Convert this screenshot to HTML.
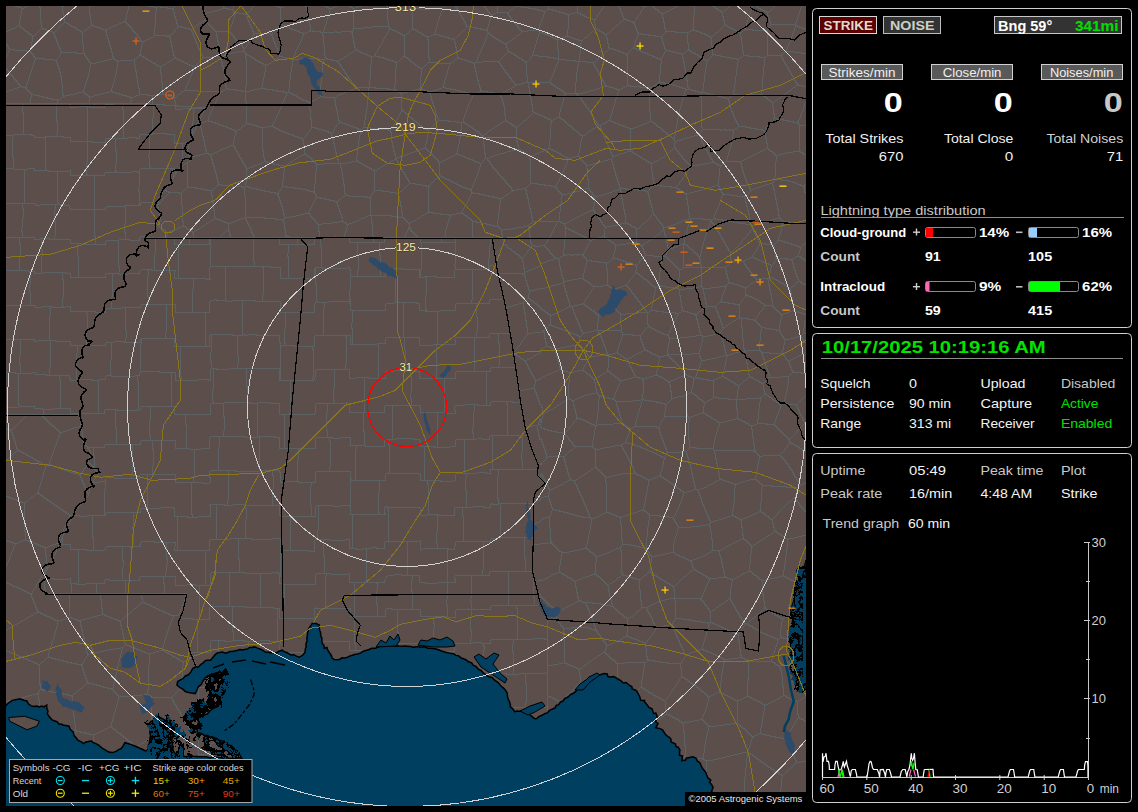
<!DOCTYPE html><html><head><meta charset="utf-8"><style>html,body{margin:0;padding:0;background:#000;width:1138px;height:812px;overflow:hidden}svg{position:absolute;left:0;top:0;font-family:"Liberation Sans",sans-serif}</style></head><body>
<svg width="1138" height="812" viewBox="0 0 1138 812">
<rect width="1138" height="812" fill="#000"/>
<defs><clipPath id="mc"><rect x="6" y="6" width="800" height="800"/></clipPath></defs>
<g clip-path="url(#mc)">
<rect x="6" y="6" width="800" height="800" fill="#5c4f4b"/>
<path d="M15 6.5h4M26 6.5h2M61 6.5h3M148 6.5h6M158 6.5h3M275 6.5h4M305 6.5h2M324 6.5h3M335 6.5h2M349 6.5h2M358 6.5h4M386 6.5h2M408 6.5h2M444 6.5h2M454 6.5h5M483 6.5h2M515 6.5h7M618 6.5h2M642 6.5h5M652 6.5h2M676 6.5h2M712 6.5h3M755 6.5h3M18 7.5h4M24 7.5h2M39 7.5h2M153 7.5h5M160 7.5h8M200 7.5h2M223 7.5h2M278 7.5h5M326 7.5h3M333 7.5h2M350 7.5h3M355 7.5h3M409 7.5h2M455 7.5h2M484 7.5h2M521 7.5h8M653 7.5h2M674 7.5h2M714 7.5h2M728 7.5h2M757 7.5h2M21 8.5h3M167 8.5h7M201 8.5h2M222 8.5h7M328 8.5h5M352 8.5h3M410 8.5h2M413 8.5h8M430 8.5h13M456 8.5h2M485 8.5h2M528 8.5h7M619 8.5h2M654 8.5h2M672 8.5h2M715 8.5h3M758 8.5h3M172 9.5h2M202 9.5h2M219 9.5h3M228 9.5h5M411 9.5h3M420 9.5h10M486 9.5h2M511 9.5h2M534 9.5h5M547 9.5h6M655 9.5h3M670 9.5h2M717 9.5h2M760 9.5h3M203 10.5h2M215 10.5h4M232 10.5h2M306 10.5h2M457 10.5h2M538 10.5h5M552 10.5h5M657 10.5h2M718 10.5h3M724 10.5h2M762 10.5h3M211 11.5h4M233 11.5h3M458 11.5h2M487 11.5h2M542 11.5h4M556 11.5h4M620 11.5h2M658 11.5h2M666 11.5h3M720 11.5h2M764 11.5h3M62 12.5h2M173 12.5h2M204 12.5h2M207 12.5h4M235 12.5h4M488 12.5h2M496 12.5h13M559 12.5h5M575 12.5h4M659 12.5h3M721 12.5h2M766 12.5h3M205 13.5h2M238 13.5h6M459 13.5h2M489 13.5h2M494 13.5h2M507 13.5h2M563 13.5h4M571 13.5h4M578 13.5h3M621 13.5h2M661 13.5h4M89 14.5h2M243 14.5h4M490 14.5h4M566 14.5h5M580 14.5h3M460 15.5h2M508 15.5h2M582 15.5h3M767 15.5h2M174 16.5h2M246 16.5h2M307 16.5h2M509 16.5h2M584 16.5h3M622 16.5h2M722 16.5h2M461 17.5h2M586 17.5h4M662 17.5h2M63 18.5h2M462 18.5h2M510 18.5h2M589 18.5h4M623 18.5h2M768 18.5h2M175 19.5h2M247 19.5h2M511 19.5h2M592 19.5h4M624 19.5h3M204 20.5h2M308 20.5h2M463 20.5h2M512 20.5h2M622 20.5h2M626 20.5h4M723 20.5h2M90 21.5h2M124 21.5h2M202 21.5h2M205 21.5h2M248 21.5h2M387 21.5h2M513 21.5h2M629 21.5h4M769 21.5h2M40 22.5h2M64 22.5h3M121 22.5h3M125 22.5h2M206 22.5h2M464 22.5h2M632 22.5h3M663 22.5h2M66 23.5h3M119 23.5h2M126 23.5h2M176 23.5h2M199 23.5h2M207 23.5h2M514 23.5h2M633 23.5h2M68 24.5h2M117 24.5h2M127 24.5h2M208 24.5h2M249 24.5h2M280 24.5h3M465 24.5h2M515 24.5h2M594 24.5h2M724 24.5h2M770 24.5h26M18 25.5h2M69 25.5h3M91 25.5h3M114 25.5h3M128 25.5h2M196 25.5h2M209 25.5h2M282 25.5h4M309 25.5h2M516 25.5h2M616 25.5h2M634 25.5h2M725 25.5h3M795 25.5h3M16 26.5h2M19 26.5h2M71 26.5h3M93 26.5h4M112 26.5h2M129 26.5h2M177 26.5h5M210 26.5h2M250 26.5h2M285 26.5h3M372 26.5h17M466 26.5h6M517 26.5h2M723 26.5h2M727 26.5h2M797 26.5h3M20 27.5h2M73 27.5h3M88 27.5h2M96 27.5h4M110 27.5h2M130 27.5h2M181 27.5h5M211 27.5h2M287 27.5h3M363 27.5h9M388 27.5h2M471 27.5h6M635 27.5h2M728 27.5h3M799 27.5h4M12 28.5h3M21 28.5h3M41 28.5h3M75 28.5h2M99 28.5h4M108 28.5h2M131 28.5h2M185 28.5h5M212 28.5h2M251 28.5h2M289 28.5h3M353 28.5h10M389 28.5h2M412 28.5h2M476 28.5h5M518 28.5h2M595 28.5h2M664 28.5h2M730 28.5h3M802 28.5h3M10 29.5h2M23 29.5h2M43 29.5h4M76 29.5h3M102 29.5h6M189 29.5h4M213 29.5h2M291 29.5h4M389 29.5h4M413 29.5h3M480 29.5h6M519 29.5h2M537 29.5h2M596 29.5h3M692 29.5h2M732 29.5h3M744 29.5h9M804 29.5h2M8 30.5h2M24 30.5h2M46 30.5h4M78 30.5h3M84 30.5h2M132 30.5h2M214 30.5h2M294 30.5h4M310 30.5h3M392 30.5h4M415 30.5h3M485 30.5h3M520 30.5h2M528 30.5h9M598 30.5h2M636 30.5h2M691 30.5h6M734 30.5h3M743 30.5h2M752 30.5h16M6 31.5h2M25 31.5h3M49 31.5h4M80 31.5h2M105 31.5h2M133 31.5h2M191 31.5h2M215 31.5h15M252 31.5h2M297 31.5h3M308 31.5h3M312 31.5h9M335 31.5h2M341 31.5h12M395 31.5h3M417 31.5h2M521 31.5h7M538 31.5h2M599 31.5h3M665 31.5h11M689 31.5h2M696 31.5h4M736 31.5h3M27 32.5h2M52 32.5h3M81 32.5h2M134 32.5h2M229 32.5h2M299 32.5h4M306 32.5h2M320 32.5h15M336 32.5h5M351 32.5h2M397 32.5h3M418 32.5h3M487 32.5h2M539 32.5h4M601 32.5h3M637 32.5h2M675 32.5h14M699 32.5h3M716 32.5h2M738 32.5h4M28 33.5h2M53 33.5h2M135 33.5h2M192 33.5h2M230 33.5h2M253 33.5h18M302 33.5h4M399 33.5h2M420 33.5h3M488 33.5h2M542 33.5h3M603 33.5h2M607 33.5h2M638 33.5h4M701 33.5h4M29 34.5h3M136 34.5h2M231 34.5h2M270 34.5h2M400 34.5h3M422 34.5h2M433 34.5h6M489 34.5h2M544 34.5h4M604 34.5h3M641 34.5h8M704 34.5h3M31 35.5h2M106 35.5h2M154 35.5h13M232 35.5h2M271 35.5h2M322 35.5h2M402 35.5h4M423 35.5h3M431 35.5h2M438 35.5h4M490 35.5h3M517 35.5h2M547 35.5h3M648 35.5h8M706 35.5h3M32 36.5h2M54 36.5h2M137 36.5h2M166 36.5h4M193 36.5h2M216 36.5h2M425 36.5h6M441 36.5h5M492 36.5h2M549 36.5h3M565 36.5h5M655 36.5h8M708 36.5h3M138 37.5h2M151 37.5h2M169 37.5h2M233 37.5h2M352 37.5h2M445 37.5h4M493 37.5h3M551 37.5h3M563 37.5h2M569 37.5h4M585 37.5h2M710 37.5h2M740 37.5h2M55 38.5h2M107 38.5h2M139 38.5h2M149 38.5h2M194 38.5h2M234 38.5h2M272 38.5h2M448 38.5h5M495 38.5h2M513 38.5h2M553 38.5h3M561 38.5h2M572 38.5h4M606 38.5h2M661 38.5h2M147 39.5h2M235 39.5h2M427 39.5h2M452 39.5h3M496 39.5h3M555 39.5h6M575 39.5h4M140 40.5h2M145 40.5h2M236 40.5h2M498 40.5h3M510 40.5h2M578 40.5h5M56 41.5h2M108 41.5h2M141 41.5h4M195 41.5h2M217 41.5h2M237 41.5h2M273 41.5h2M500 41.5h2M170 42.5h2M238 42.5h2M353 42.5h2M454 42.5h2M501 42.5h3M507 42.5h2M662 42.5h2M196 43.5h2M239 43.5h2M274 43.5h2M503 43.5h4M607 43.5h2M687 43.5h2M57 44.5h2M82 44.5h2M240 44.5h2M505 44.5h2M741 44.5h2M6 45.5h2M109 45.5h2M218 45.5h2M241 45.5h2M323 45.5h2M663 45.5h2M7 46.5h2M58 46.5h2M171 46.5h2M197 46.5h2M275 46.5h2M711 46.5h2M242 47.5h2M354 47.5h2M455 47.5h2M506 47.5h2M608 47.5h2M633 47.5h2M8 48.5h2M59 48.5h2M110 48.5h2M198 48.5h2M243 48.5h2M276 48.5h2M609 48.5h4M634 48.5h3M664 48.5h2M9 49.5h6M355 49.5h2M557 49.5h2M612 49.5h4M636 49.5h3M14 50.5h13M199 50.5h2M219 50.5h2M356 50.5h3M507 50.5h2M615 50.5h4M638 50.5h3M665 50.5h5M687 50.5h4M26 51.5h5M60 51.5h2M172 51.5h2M238 51.5h7M277 51.5h2M358 51.5h3M508 51.5h2M618 51.5h3M640 51.5h3M669 51.5h5M690 51.5h2M742 51.5h2M785 51.5h10M30 52.5h2M61 52.5h16M111 52.5h2M233 52.5h5M244 52.5h2M351 52.5h2M360 52.5h3M509 52.5h3M620 52.5h4M642 52.5h4M673 52.5h5M684 52.5h2M691 52.5h3M794 52.5h8M31 53.5h2M76 53.5h9M200 53.5h2M228 53.5h5M245 53.5h2M278 53.5h2M362 53.5h4M456 53.5h2M511 53.5h3M623 53.5h4M645 53.5h3M677 53.5h5M693 53.5h3M801 53.5h5M32 54.5h2M139 54.5h2M224 54.5h4M245 54.5h3M348 54.5h2M365 54.5h3M513 54.5h2M626 54.5h2M647 54.5h3M681 54.5h2M695 54.5h3M712 54.5h4M781 54.5h2M84 55.5h2M139 55.5h3M173 55.5h2M201 55.5h2M220 55.5h4M247 55.5h3M324 55.5h2M367 55.5h3M374 55.5h2M514 55.5h3M532 55.5h7M626 55.5h2M649 55.5h4M697 55.5h2M715 55.5h6M743 55.5h6M767 55.5h15M33 56.5h2M85 56.5h2M112 56.5h2M141 56.5h3M213 56.5h8M249 56.5h3M279 56.5h4M345 56.5h2M369 56.5h3M375 56.5h5M403 56.5h3M516 56.5h2M538 56.5h10M652 56.5h3M698 56.5h3M720 56.5h6M748 56.5h12M34 57.5h2M143 57.5h3M174 57.5h2M202 57.5h11M219 57.5h2M251 57.5h2M282 57.5h4M371 57.5h2M379 57.5h5M405 57.5h3M428 57.5h2M457 57.5h2M517 57.5h3M547 57.5h7M599 57.5h2M654 57.5h3M700 57.5h3M725 57.5h6M740 57.5h2M759 57.5h7M781 57.5h2M35 58.5h10M86 58.5h2M112 58.5h3M135 58.5h2M145 58.5h2M175 58.5h3M245 58.5h2M252 58.5h3M285 58.5h6M300 58.5h19M325 58.5h3M342 58.5h2M383 58.5h4M407 58.5h2M457 58.5h5M519 58.5h3M553 58.5h6M656 58.5h4M682 58.5h2M702 58.5h2M730 58.5h7M44 59.5h10M87 59.5h2M108 59.5h4M114 59.5h2M133 59.5h2M146 59.5h3M177 59.5h3M220 59.5h2M254 59.5h2M275 59.5h2M290 59.5h3M294 59.5h6M318 59.5h7M327 59.5h6M340 59.5h2M386 59.5h4M408 59.5h2M455 59.5h2M461 59.5h4M521 59.5h2M558 59.5h8M659 59.5h3M703 59.5h3M736 59.5h3M782 59.5h2M53 60.5h4M104 60.5h4M115 60.5h3M120 60.5h13M148 60.5h3M170 60.5h2M179 60.5h3M255 60.5h3M292 60.5h2M332 60.5h5M338 60.5h2M389 60.5h4M409 60.5h2M464 60.5h4M522 60.5h3M565 60.5h11M705 60.5h4M88 61.5h2M100 61.5h4M117 61.5h3M150 61.5h2M181 61.5h3M199 61.5h2M257 61.5h3M272 61.5h2M336 61.5h3M392 61.5h4M410 61.5h2M467 61.5h4M482 61.5h17M524 61.5h2M575 61.5h12M783 61.5h2M56 62.5h2M89 62.5h2M96 62.5h4M151 62.5h3M167 62.5h2M183 62.5h3M221 62.5h2M259 62.5h3M395 62.5h3M411 62.5h3M428 62.5h10M451 62.5h2M470 62.5h4M475 62.5h7M498 62.5h2M525 62.5h2M586 62.5h9M683 62.5h2M90 63.5h6M153 63.5h3M185 63.5h3M261 63.5h3M269 63.5h2M338 63.5h2M413 63.5h2M437 63.5h14M473 63.5h2M499 63.5h2M784 63.5h2M155 64.5h2M164 64.5h2M187 64.5h3M196 64.5h2M263 64.5h3M267 64.5h2M339 64.5h2M414 64.5h2M593 64.5h2M785 64.5h2M57 65.5h2M134 65.5h2M156 65.5h3M162 65.5h2M189 65.5h4M265 65.5h2M415 65.5h3M500 65.5h2M158 66.5h4M192 66.5h3M222 66.5h2M340 66.5h2M417 66.5h2M501 66.5h2M594 66.5h2M786 66.5h2M341 67.5h2M418 67.5h3M474 67.5h2M58 68.5h2M420 68.5h3M502 68.5h2M595 68.5h2M684 68.5h2M787 68.5h2M6 69.5h2M342 69.5h2M503 69.5h2M596 69.5h2M7 70.5h2M223 70.5h2M343 70.5h2M504 70.5h2M788 70.5h2M8 71.5h2M135 71.5h2M475 71.5h2M597 71.5h2M789 71.5h2M59 72.5h2M344 72.5h2M505 72.5h2M9 73.5h2M160 73.5h2M345 73.5h2M506 73.5h2M598 73.5h2M790 73.5h2M10 74.5h2M507 74.5h2M685 74.5h2M11 75.5h2M346 75.5h2M599 75.5h2M791 75.5h2M12 76.5h2M60 76.5h2M224 76.5h2M347 76.5h2M476 76.5h2M508 76.5h2M526 76.5h2M600 76.5h2M792 76.5h2M136 77.5h2M509 77.5h2M13 78.5h2M348 78.5h2M510 78.5h2M601 78.5h2M793 78.5h2M14 79.5h2M349 79.5h2M15 80.5h2M350 80.5h2M477 80.5h2M511 80.5h2M602 80.5h2M686 80.5h2M794 80.5h2M16 81.5h2M512 81.5h2M161 82.5h2M351 82.5h2M513 82.5h2M524 82.5h27M603 82.5h2M658 82.5h7M795 82.5h2M17 83.5h2M137 83.5h2M352 83.5h2M521 83.5h3M550 83.5h2M664 83.5h6M796 83.5h2M18 84.5h2M61 84.5h2M353 84.5h2M478 84.5h2M514 84.5h2M517 84.5h4M551 84.5h3M604 84.5h2M655 84.5h2M669 84.5h5M797 84.5h2M19 85.5h2M354 85.5h2M515 85.5h2M553 85.5h2M605 85.5h2M627 85.5h4M673 85.5h4M796 85.5h7M20 86.5h3M225 86.5h2M554 86.5h3M603 86.5h7M625 86.5h2M630 86.5h11M652 86.5h2M676 86.5h4M802 86.5h4M17 87.5h3M22 87.5h5M355 87.5h21M442 87.5h4M479 87.5h2M512 87.5h2M528 87.5h2M556 87.5h2M600 87.5h3M609 87.5h5M623 87.5h2M640 87.5h12M679 87.5h4M687 87.5h2M793 87.5h2M14 88.5h3M25 88.5h2M138 88.5h2M226 88.5h3M259 88.5h7M354 88.5h3M375 88.5h14M419 88.5h3M439 88.5h3M445 88.5h6M510 88.5h2M557 88.5h3M597 88.5h3M613 88.5h4M621 88.5h2M682 88.5h4M12 89.5h2M26 89.5h2M228 89.5h8M254 89.5h5M265 89.5h8M351 89.5h3M388 89.5h8M415 89.5h4M421 89.5h4M436 89.5h3M450 89.5h6M508 89.5h2M559 89.5h2M594 89.5h3M616 89.5h5M685 89.5h7M9 90.5h3M27 90.5h2M184 90.5h14M223 90.5h2M235 90.5h7M250 90.5h4M272 90.5h6M349 90.5h2M395 90.5h2M412 90.5h3M424 90.5h4M433 90.5h3M455 90.5h5M480 90.5h2M560 90.5h3M590 90.5h4M691 90.5h5M789 90.5h2M6 91.5h3M28 91.5h2M82 91.5h2M110 91.5h3M182 91.5h2M197 91.5h26M241 91.5h9M277 91.5h7M346 91.5h3M396 91.5h3M408 91.5h4M427 91.5h6M459 91.5h6M479 91.5h9M505 91.5h2M562 91.5h2M587 91.5h3M695 91.5h4M29 92.5h2M78 92.5h4M83 92.5h2M105 92.5h5M112 92.5h4M283 92.5h8M344 92.5h2M398 92.5h3M404 92.5h4M464 92.5h5M477 92.5h2M487 92.5h8M503 92.5h2M529 92.5h2M563 92.5h2M583 92.5h4M698 92.5h9M786 92.5h2M30 93.5h2M75 93.5h3M84 93.5h2M101 93.5h4M115 93.5h5M162 93.5h2M290 93.5h3M342 93.5h2M400 93.5h4M429 93.5h2M468 93.5h9M494 93.5h9M564 93.5h19M706 93.5h4M31 94.5h4M62 94.5h2M70 94.5h5M85 94.5h3M97 94.5h4M119 94.5h4M139 94.5h9M158 94.5h9M178 94.5h2M292 94.5h3M339 94.5h3M576 94.5h2M709 94.5h5M733 94.5h5M739 94.5h2M747 94.5h16M34 95.5h6M65 95.5h5M87 95.5h2M94 95.5h3M122 95.5h5M136 95.5h3M147 95.5h11M166 95.5h3M294 95.5h3M337 95.5h2M577 95.5h2M713 95.5h5M732 95.5h2M737 95.5h2M740 95.5h7M762 95.5h2M39 96.5h5M63 96.5h2M88 96.5h2M91 96.5h3M126 96.5h4M134 96.5h2M168 96.5h4M296 96.5h2M320 96.5h4M430 96.5h2M500 96.5h2M578 96.5h2M717 96.5h5M763 96.5h3M781 96.5h2M43 97.5h5M61 97.5h2M89 97.5h2M129 97.5h5M171 97.5h5M297 97.5h3M318 97.5h2M323 97.5h13M579 97.5h2M721 97.5h5M729 97.5h2M765 97.5h2M47 98.5h5M299 98.5h3M501 98.5h2M530 98.5h2M580 98.5h2M725 98.5h4M766 98.5h2M778 98.5h2M51 99.5h7M301 99.5h3M315 99.5h2M767 99.5h3M57 100.5h2M303 100.5h4M313 100.5h2M334 100.5h2M431 100.5h2M581 100.5h2M769 100.5h2M775 100.5h2M174 101.5h2M245 101.5h2M306 101.5h3M311 101.5h2M582 101.5h2M728 101.5h2M770 101.5h2M308 102.5h3M502 102.5h2M771 102.5h3M6 103.5h145M432 103.5h2M583 103.5h2M69 104.5h2M105 104.5h9M150 104.5h15M531 104.5h2M584 104.5h2M164 105.5h14M503 105.5h2M585 105.5h2M729 105.5h2M78 106.5h13M177 106.5h15M335 106.5h2M433 106.5h2M772 106.5h2M70 107.5h8M90 107.5h15M191 107.5h15M586 107.5h2M183 108.5h23M587 108.5h2M730 108.5h2M122 109.5h2M175 109.5h8M309 109.5h2M401 109.5h2M434 109.5h2M336 110.5h2M401 110.5h3M588 110.5h2M403 111.5h2M532 111.5h2M589 111.5h2M649 111.5h2M731 111.5h2M22 112.5h2M404 112.5h2M533 112.5h3M405 113.5h2M435 113.5h2M535 113.5h3M590 113.5h2M732 113.5h2M406 114.5h2M504 114.5h2M537 114.5h4M773 114.5h2M337 115.5h2M407 115.5h2M436 115.5h2M540 115.5h3M591 115.5h2M408 116.5h2M542 116.5h3M592 116.5h2M733 116.5h2M409 117.5h3M544 117.5h3M556 117.5h5M411 118.5h2M437 118.5h2M546 118.5h3M560 118.5h2M593 118.5h2M734 118.5h2M774 118.5h3M310 119.5h2M412 119.5h2M548 119.5h3M553 119.5h2M561 119.5h3M776 119.5h8M207 120.5h2M338 120.5h2M413 120.5h2M438 120.5h11M505 120.5h2M524 120.5h2M550 120.5h3M563 120.5h2M594 120.5h2M608 120.5h3M735 120.5h2M783 120.5h6M56 121.5h2M204 121.5h3M208 121.5h5M414 121.5h3M448 121.5h10M503 121.5h2M506 121.5h2M564 121.5h2M595 121.5h2M610 121.5h4M649 121.5h4M788 121.5h6M202 122.5h2M212 122.5h4M339 122.5h4M416 122.5h2M457 122.5h8M501 122.5h2M507 122.5h3M565 122.5h2M605 122.5h2M613 122.5h3M647 122.5h2M652 122.5h2M736 122.5h2M793 122.5h6M197 123.5h5M215 123.5h4M246 123.5h4M342 123.5h4M417 123.5h2M464 123.5h3M509 123.5h3M566 123.5h2M596 123.5h2M603 123.5h2M615 123.5h4M645 123.5h2M653 123.5h3M797 123.5h2M218 124.5h3M249 124.5h5M345 124.5h4M418 124.5h2M466 124.5h2M498 124.5h2M511 124.5h2M567 124.5h2M597 124.5h2M601 124.5h2M618 124.5h3M642 124.5h3M655 124.5h2M737 124.5h2M798 124.5h2M220 125.5h4M243 125.5h2M253 125.5h4M348 125.5h3M419 125.5h3M467 125.5h3M512 125.5h3M518 125.5h2M568 125.5h3M598 125.5h3M620 125.5h4M639 125.5h3M656 125.5h2M799 125.5h6M223 126.5h4M256 126.5h4M267 126.5h7M350 126.5h4M421 126.5h2M469 126.5h2M495 126.5h2M514 126.5h2M570 126.5h2M596 126.5h2M623 126.5h3M637 126.5h2M657 126.5h2M738 126.5h8M200 127.5h2M226 127.5h3M259 127.5h8M273 127.5h3M311 127.5h5M353 127.5h4M363 127.5h8M422 127.5h3M470 127.5h3M515 127.5h2M571 127.5h2M625 127.5h4M634 127.5h3M658 127.5h3M701 127.5h2M745 127.5h6M228 128.5h4M275 128.5h3M315 128.5h4M356 128.5h3M370 128.5h9M424 128.5h2M472 128.5h2M492 128.5h2M572 128.5h2M593 128.5h2M600 128.5h2M628 128.5h6M660 128.5h2M735 128.5h2M750 128.5h7M231 129.5h3M238 129.5h2M277 129.5h3M318 129.5h5M358 129.5h4M378 129.5h11M425 129.5h3M473 129.5h3M573 129.5h2M661 129.5h2M702 129.5h19M723 129.5h3M728 129.5h2M731 129.5h2M756 129.5h7M233 130.5h3M279 130.5h3M322 130.5h4M388 130.5h3M427 130.5h2M475 130.5h2M489 130.5h2M574 130.5h3M590 130.5h2M601 130.5h2M662 130.5h2M720 130.5h3M725 130.5h3M729 130.5h2M732 130.5h2M762 130.5h3M201 131.5h2M235 131.5h2M281 131.5h4M325 131.5h4M476 131.5h3M576 131.5h2M663 131.5h3M192 132.5h2M284 132.5h3M328 132.5h3M390 132.5h2M478 132.5h2M577 132.5h2M587 132.5h2M665 132.5h2M152 133.5h15M192 133.5h2M286 133.5h4M330 133.5h2M479 133.5h2M578 133.5h2M602 133.5h2M666 133.5h2M764 133.5h2M14 134.5h18M140 134.5h13M166 134.5h9M289 134.5h4M480 134.5h2M484 134.5h2M579 134.5h2M667 134.5h2M698 134.5h2M6 135.5h8M31 135.5h4M292 135.5h3M331 135.5h2M481 135.5h3M580 135.5h5M668 135.5h2M694 135.5h4M45 136.5h19M202 136.5h2M294 136.5h4M482 136.5h2M603 136.5h2M669 136.5h3M691 136.5h3M699 136.5h2M34 137.5h12M63 137.5h8M128 137.5h9M297 137.5h4M671 137.5h2M687 137.5h4M106 138.5h22M136 138.5h4M300 138.5h4M604 138.5h2M672 138.5h3M684 138.5h3M700 138.5h2M765 138.5h2M332 139.5h2M673 139.5h2M681 139.5h3M203 140.5h2M302 140.5h2M677 140.5h4M70 141.5h23M391 141.5h2M516 141.5h2M605 141.5h2M674 141.5h3M701 141.5h2M92 142.5h14M185 142.5h5M174 143.5h11M333 143.5h2M606 143.5h2M702 143.5h2M766 143.5h2M204 145.5h2M230 145.5h4M303 145.5h2M483 145.5h2M517 145.5h2M607 145.5h2M703 145.5h2M228 146.5h2M233 146.5h2M392 146.5h2M226 147.5h2M608 147.5h2M674 147.5h2M704 147.5h2M223 148.5h3M234 148.5h2M334 148.5h2M422 148.5h5M548 148.5h3M766 148.5h3M221 149.5h2M420 149.5h2M426 149.5h2M516 149.5h5M546 149.5h2M550 149.5h3M609 149.5h2M675 149.5h2M705 149.5h2M764 149.5h2M768 149.5h2M115 150.5h2M205 150.5h2M219 150.5h2M235 150.5h2M262 150.5h2M417 150.5h3M427 150.5h2M511 150.5h5M520 150.5h2M544 150.5h2M552 150.5h3M676 150.5h2M706 150.5h2M762 150.5h2M769 150.5h2M187 151.5h2M217 151.5h2M236 151.5h2M393 151.5h2M414 151.5h3M428 151.5h2M507 151.5h4M521 151.5h3M541 151.5h3M554 151.5h3M627 151.5h6M677 151.5h2M760 151.5h2M770 151.5h3M793 151.5h8M215 152.5h2M335 152.5h2M411 152.5h3M429 152.5h2M504 152.5h3M523 152.5h2M539 152.5h2M556 152.5h3M610 152.5h2M624 152.5h3M632 152.5h2M707 152.5h2M758 152.5h2M772 152.5h2M787 152.5h6M800 152.5h3M204 153.5h5M213 153.5h2M237 153.5h2M304 153.5h2M408 153.5h3M430 153.5h2M456 153.5h2M484 153.5h2M500 153.5h4M524 153.5h3M536 153.5h3M558 153.5h3M620 153.5h4M633 153.5h3M678 153.5h2M756 153.5h2M773 153.5h2M783 153.5h4M802 153.5h2M200 154.5h4M208 154.5h5M303 154.5h4M394 154.5h2M406 154.5h2M431 154.5h2M455 154.5h5M497 154.5h3M526 154.5h2M534 154.5h2M560 154.5h2M611 154.5h2M618 154.5h2M635 154.5h3M666 154.5h2M679 154.5h2M708 154.5h2M754 154.5h2M774 154.5h2M779 154.5h4M803 154.5h3M188 155.5h2M196 155.5h4M238 155.5h2M301 155.5h2M306 155.5h2M403 155.5h3M432 155.5h2M453 155.5h2M459 155.5h4M494 155.5h3M527 155.5h3M531 155.5h3M561 155.5h3M615 155.5h3M637 155.5h2M680 155.5h2M752 155.5h2M775 155.5h4M148 156.5h2M192 156.5h4M210 156.5h2M299 156.5h2M307 156.5h3M336 156.5h2M400 156.5h3M433 156.5h2M451 156.5h2M462 156.5h3M491 156.5h3M529 156.5h2M563 156.5h3M575 156.5h5M612 156.5h3M638 156.5h3M681 156.5h2M709 156.5h2M750 156.5h2M12 157.5h2M189 157.5h3M239 157.5h2M263 157.5h2M309 157.5h2M397 157.5h3M434 157.5h2M449 157.5h2M464 157.5h4M489 157.5h2M565 157.5h3M571 157.5h4M579 157.5h2M640 157.5h2M662 157.5h2M748 157.5h2M189 158.5h2M240 158.5h2M296 158.5h2M310 158.5h2M395 158.5h2M435 158.5h2M447 158.5h2M467 158.5h3M485 158.5h4M567 158.5h4M641 158.5h3M660 158.5h2M682 158.5h2M710 158.5h2M746 158.5h2M211 159.5h2M294 159.5h2M311 159.5h2M337 159.5h2M394 159.5h3M436 159.5h2M445 159.5h2M469 159.5h4M529 159.5h2M580 159.5h2M608 159.5h4M643 159.5h3M683 159.5h2M711 159.5h2M744 159.5h2M241 160.5h2M312 160.5h2M356 160.5h2M392 160.5h2M396 160.5h2M437 160.5h2M443 160.5h2M472 160.5h3M487 160.5h2M581 160.5h2M604 160.5h4M645 160.5h2M657 160.5h2M684 160.5h2M742 160.5h2M188 161.5h2M264 161.5h3M291 161.5h2M313 161.5h2M352 161.5h4M357 161.5h2M390 161.5h2M441 161.5h2M474 161.5h3M488 161.5h2M582 161.5h2M601 161.5h3M611 161.5h2M646 161.5h3M655 161.5h2M685 161.5h2M712 161.5h2M726 161.5h16M242 162.5h2M262 162.5h2M266 162.5h4M314 162.5h2M347 162.5h5M358 162.5h3M397 162.5h2M438 162.5h3M476 162.5h4M489 162.5h2M583 162.5h2M597 162.5h4M648 162.5h3M653 162.5h2M686 162.5h2M710 162.5h5M185 163.5h3M212 163.5h2M243 163.5h2M259 163.5h3M269 163.5h5M288 163.5h2M315 163.5h2M323 163.5h24M360 163.5h3M387 163.5h2M479 163.5h3M584 163.5h2M593 163.5h4M650 163.5h3M687 163.5h2M705 163.5h5M714 163.5h3M723 163.5h2M740 163.5h2M257 164.5h2M273 164.5h6M316 164.5h7M362 164.5h2M385 164.5h2M398 164.5h2M490 164.5h2M585 164.5h2M590 164.5h3M612 164.5h2M688 164.5h2M699 164.5h6M716 164.5h3M244 165.5h2M254 165.5h3M278 165.5h6M285 165.5h2M363 165.5h3M383 165.5h2M399 165.5h2M491 165.5h2M586 165.5h4M689 165.5h2M693 165.5h6M718 165.5h4M149 166.5h2M181 166.5h2M213 166.5h2M252 166.5h2M283 166.5h2M365 166.5h3M381 166.5h2M690 166.5h3M245 167.5h2M249 167.5h3M340 167.5h2M367 167.5h3M400 167.5h2M492 167.5h2M741 167.5h2M6 168.5h8M28 168.5h7M141 168.5h34M246 168.5h3M369 168.5h3M378 168.5h2M493 168.5h2M586 168.5h2M613 168.5h2M13 169.5h15M371 169.5h3M401 169.5h2M494 169.5h2M34 170.5h15M69 170.5h2M174 170.5h2M214 170.5h2M373 170.5h4M495 170.5h2M651 170.5h2M48 171.5h21M115 171.5h2M132 171.5h6M402 171.5h2M496 171.5h2M614 171.5h2M742 171.5h2M105 172.5h27M137 172.5h3M172 172.5h2M175 172.5h2M341 172.5h2M403 172.5h2M175 173.5h2M215 173.5h2M497 173.5h2M86 174.5h2M404 174.5h2M498 174.5h2M743 174.5h2M70 175.5h35M173 175.5h2M439 175.5h2M499 175.5h2M615 175.5h2M173 176.5h2M405 176.5h2M440 176.5h3M500 176.5h2M216 177.5h2M442 177.5h3M501 177.5h2M744 177.5h2M342 178.5h2M406 178.5h2M444 178.5h3M502 178.5h2M616 178.5h2M652 178.5h2M407 179.5h2M446 179.5h3M503 179.5h2M587 179.5h2M745 179.5h2M774 179.5h8M448 180.5h3M504 180.5h2M781 180.5h8M217 181.5h2M408 181.5h2M450 181.5h3M617 181.5h2M788 181.5h5M452 182.5h3M505 182.5h2M746 182.5h2M772 182.5h2M792 182.5h4M409 183.5h7M454 183.5h3M506 183.5h2M530 183.5h8M653 183.5h2M769 183.5h4M795 183.5h3M218 184.5h4M343 184.5h2M415 184.5h7M456 184.5h3M507 184.5h2M537 184.5h8M618 184.5h2M747 184.5h2M766 184.5h3M797 184.5h4M217 185.5h2M221 185.5h12M421 185.5h6M458 185.5h3M508 185.5h2M544 185.5h7M654 185.5h8M715 185.5h4M763 185.5h3M772 185.5h2M800 185.5h5M232 186.5h11M245 186.5h4M282 186.5h5M426 186.5h4M460 186.5h3M509 186.5h2M550 186.5h6M652 186.5h2M661 186.5h11M712 186.5h3M718 186.5h2M748 186.5h2M760 186.5h3M803 186.5h2M187 187.5h9M242 187.5h3M248 187.5h4M286 187.5h9M462 187.5h4M510 187.5h2M555 187.5h2M619 187.5h2M671 187.5h6M709 187.5h3M757 187.5h3M803 187.5h2M195 188.5h7M251 188.5h6M294 188.5h8M465 188.5h4M522 188.5h4M556 188.5h2M586 188.5h4M620 188.5h7M676 188.5h3M705 188.5h4M719 188.5h2M749 188.5h2M754 188.5h3M201 189.5h6M256 189.5h5M301 189.5h6M468 189.5h4M511 189.5h2M516 189.5h6M582 189.5h4M617 189.5h4M626 189.5h13M678 189.5h2M702 189.5h3M752 189.5h2M773 189.5h2M164 190.5h3M206 190.5h7M260 190.5h5M306 190.5h4M374 190.5h9M470 190.5h2M512 190.5h4M525 190.5h2M557 190.5h2M579 190.5h3M589 190.5h2M614 190.5h3M638 190.5h8M679 190.5h3M698 190.5h4M720 190.5h2M750 190.5h2M138 191.5h2M166 191.5h3M264 191.5h6M309 191.5h6M382 191.5h8M400 191.5h2M511 191.5h2M558 191.5h2M575 191.5h4M590 191.5h2M612 191.5h2M620 191.5h2M645 191.5h3M681 191.5h2M694 191.5h4M168 192.5h12M269 192.5h7M313 192.5h2M389 192.5h7M471 192.5h3M559 192.5h2M571 192.5h4M591 192.5h2M609 192.5h3M647 192.5h2M682 192.5h3M690 192.5h4M721 192.5h2M804 192.5h2M179 193.5h3M275 193.5h4M314 193.5h2M344 193.5h2M395 193.5h4M473 193.5h7M508 193.5h2M560 193.5h2M567 193.5h4M606 193.5h3M684 193.5h6M722 193.5h2M277 194.5h2M479 194.5h6M526 194.5h2M561 194.5h6M592 194.5h2M603 194.5h3M685 194.5h2M722 194.5h9M774 194.5h2M211 195.5h2M244 195.5h2M315 195.5h2M345 195.5h5M484 195.5h5M505 195.5h2M593 195.5h2M599 195.5h4M730 195.5h8M343 196.5h2M349 196.5h18M398 196.5h2M488 196.5h6M596 196.5h3M648 196.5h2M737 196.5h9M278 197.5h2M316 197.5h5M366 197.5h5M493 197.5h5M502 197.5h2M594 197.5h2M320 198.5h6M497 198.5h5M527 198.5h2M621 198.5h2M744 198.5h2M325 199.5h5M339 199.5h2M686 199.5h2M775 199.5h2M279 200.5h2M329 200.5h6M649 200.5h2M334 201.5h4M399 201.5h2M57 202.5h2M141 202.5h18M212 202.5h2M336 202.5h2M745 202.5h2M6 203.5h30M139 203.5h2M158 203.5h2M280 203.5h2M528 203.5h2M40 204.5h25M139 204.5h2M157 204.5h2M622 204.5h2M650 204.5h2M776 204.5h2M35 205.5h5M64 205.5h6M125 205.5h16M181 205.5h2M337 205.5h2M687 205.5h2M106 206.5h20M281 206.5h2M400 206.5h2M746 206.5h2M157 207.5h2M651 207.5h2M22 208.5h2M69 208.5h2M338 208.5h2M529 208.5h2M70 209.5h36M623 209.5h2M777 209.5h2M213 210.5h2M282 210.5h2M590 210.5h5M747 210.5h2M339 211.5h2M428 211.5h2M588 211.5h2M652 211.5h2M158 212.5h2M401 212.5h2M427 212.5h7M460 212.5h2M530 212.5h2M586 212.5h2M594 212.5h2M304 213.5h6M425 213.5h2M433 213.5h8M456 213.5h4M461 213.5h3M584 213.5h2M595 213.5h2M688 213.5h2M283 214.5h2M300 214.5h4M309 214.5h2M340 214.5h2M440 214.5h10M452 214.5h4M463 214.5h2M582 214.5h2M624 214.5h2M652 214.5h3M748 214.5h2M296 215.5h4M368 215.5h24M422 215.5h2M449 215.5h3M464 215.5h3M580 215.5h2M596 215.5h2M654 215.5h2M778 215.5h2M291 216.5h5M310 216.5h2M366 216.5h2M391 216.5h8M466 216.5h2M578 216.5h2M597 216.5h2M655 216.5h2M159 217.5h2M214 217.5h2M244 217.5h21M286 217.5h5M311 217.5h2M341 217.5h2M364 217.5h2M398 217.5h6M419 217.5h2M467 217.5h2M531 217.5h2M576 217.5h2M778 217.5h2M215 218.5h2M241 218.5h3M264 218.5h12M284 218.5h2M312 218.5h2M361 218.5h3M403 218.5h2M417 218.5h2M468 218.5h3M574 218.5h2M598 218.5h2M656 218.5h2M689 218.5h2M692 218.5h11M713 218.5h3M775 218.5h3M779 218.5h2M213 219.5h2M216 219.5h4M238 219.5h3M245 219.5h2M275 219.5h8M313 219.5h2M359 219.5h2M404 219.5h2M470 219.5h2M572 219.5h2M599 219.5h2M657 219.5h2M686 219.5h3M690 219.5h2M702 219.5h9M715 219.5h8M749 219.5h2M772 219.5h3M780 219.5h2M211 220.5h2M219 220.5h4M236 220.5h2M282 220.5h2M314 220.5h2M357 220.5h2M405 220.5h2M414 220.5h2M471 220.5h2M570 220.5h2M658 220.5h2M683 220.5h3M710 220.5h2M722 220.5h7M769 220.5h3M781 220.5h2M54 221.5h2M182 221.5h2M222 221.5h3M233 221.5h3M246 221.5h2M315 221.5h2M339 221.5h5M355 221.5h2M406 221.5h2M412 221.5h2M472 221.5h5M532 221.5h29M600 221.5h2M681 221.5h2M710 221.5h2M728 221.5h6M766 221.5h3M782 221.5h8M208 222.5h2M224 222.5h4M231 222.5h2M283 222.5h2M332 222.5h7M343 222.5h3M352 222.5h3M371 222.5h2M407 222.5h2M410 222.5h2M476 222.5h6M560 222.5h3M567 222.5h2M601 222.5h2M625 222.5h2M659 222.5h2M678 222.5h3M710 222.5h3M733 222.5h6M763 222.5h3M789 222.5h11M206 223.5h2M227 223.5h4M247 223.5h2M316 223.5h2M322 223.5h10M345 223.5h2M349 223.5h3M408 223.5h2M481 223.5h6M530 223.5h2M562 223.5h5M621 223.5h4M626 223.5h3M643 223.5h2M660 223.5h2M676 223.5h2M712 223.5h2M738 223.5h8M759 223.5h4M799 223.5h7M317 224.5h5M346 224.5h3M486 224.5h5M602 224.5h2M618 224.5h3M628 224.5h3M661 224.5h2M673 224.5h3M713 224.5h2M745 224.5h7M756 224.5h3M157 225.5h2M203 225.5h2M248 225.5h2M490 225.5h5M527 225.5h2M564 225.5h2M603 225.5h2M613 225.5h5M630 225.5h2M670 225.5h3M751 225.5h5M158 226.5h2M181 226.5h5M494 226.5h5M523 226.5h4M604 226.5h2M607 226.5h6M631 226.5h3M662 226.5h2M667 226.5h3M714 226.5h2M159 227.5h3M179 227.5h2M185 227.5h2M200 227.5h2M249 227.5h2M408 227.5h2M498 227.5h2M517 227.5h6M565 227.5h2M605 227.5h2M633 227.5h3M663 227.5h4M161 228.5h2M177 228.5h2M186 228.5h2M408 228.5h3M499 228.5h2M511 228.5h6M565 228.5h4M635 228.5h4M715 228.5h2M162 229.5h3M175 229.5h2M187 229.5h3M197 229.5h2M227 229.5h2M250 229.5h2M284 229.5h2M500 229.5h2M503 229.5h8M568 229.5h3M716 229.5h2M751 229.5h3M164 230.5h2M172 230.5h3M189 230.5h2M195 230.5h2M410 230.5h2M501 230.5h2M528 230.5h2M570 230.5h3M662 230.5h3M21 231.5h2M165 231.5h2M169 231.5h3M190 231.5h3M228 231.5h2M318 231.5h2M411 231.5h2M572 231.5h3M717 231.5h2M753 231.5h2M124 232.5h2M166 232.5h3M192 232.5h2M251 232.5h2M412 232.5h2M574 232.5h3M718 232.5h2M192 233.5h2M413 233.5h2M576 233.5h3M754 233.5h2M149 234.5h2M229 234.5h2M252 234.5h2M414 234.5h2M501 234.5h2M578 234.5h3M657 234.5h2M664 234.5h2M719 234.5h2M285 235.5h2M372 235.5h2M415 235.5h2M580 235.5h3M755 235.5h2M94 236.5h2M140 236.5h8M285 236.5h5M416 236.5h2M529 236.5h2M582 236.5h3M602 236.5h3M720 236.5h2M6 237.5h29M146 237.5h347M584 237.5h3M598 237.5h4M604 237.5h3M653 237.5h2M756 237.5h2M40 238.5h10M586 238.5h2M595 238.5h3M606 238.5h2M665 238.5h2M721 238.5h2M34 239.5h6M49 239.5h22M119 239.5h11M209 239.5h2M502 239.5h2M587 239.5h3M592 239.5h3M607 239.5h2M722 239.5h2M757 239.5h2M106 240.5h13M129 240.5h11M209 240.5h2M589 240.5h3M608 240.5h3M649 240.5h2M777 240.5h5M209 241.5h2M492 241.5h2M610 241.5h2M723 241.5h2M758 241.5h2M781 241.5h4M209 242.5h2M349 242.5h36M420 242.5h36M530 242.5h2M611 242.5h3M632 242.5h6M646 242.5h2M666 242.5h2M784 242.5h5M70 243.5h12M209 243.5h2M613 243.5h2M626 243.5h6M637 243.5h3M683 243.5h2M724 243.5h2M759 243.5h7M788 243.5h4M19 244.5h2M81 244.5h25M174 244.5h37M279 244.5h36M503 244.5h3M614 244.5h2M618 244.5h8M639 244.5h2M643 244.5h2M680 244.5h7M765 244.5h10M791 244.5h4M803 244.5h2M505 245.5h2M531 245.5h4M541 245.5h4M615 245.5h3M640 245.5h3M678 245.5h2M686 245.5h2M725 245.5h2M794 245.5h4M320 246.5h2M506 246.5h2M534 246.5h7M544 246.5h2M641 246.5h2M676 246.5h2M687 246.5h2M726 246.5h2M773 246.5h2M797 246.5h3M493 247.5h2M507 247.5h2M545 247.5h2M667 247.5h2M673 247.5h3M688 247.5h2M799 247.5h2M508 248.5h3M546 248.5h2M642 248.5h2M670 248.5h3M689 248.5h2M727 248.5h2M510 249.5h2M547 249.5h2M668 249.5h2M690 249.5h3M41 250.5h2M511 250.5h2M548 250.5h2M692 250.5h2M728 250.5h2M512 251.5h3M643 251.5h2M729 251.5h2M514 252.5h2M549 252.5h2M693 252.5h3M730 252.5h2M774 252.5h2M494 253.5h2M515 253.5h2M550 253.5h2M644 253.5h2M695 253.5h2M494 254.5h2M516 254.5h3M551 254.5h2M563 254.5h2M567 254.5h5M574 254.5h4M579 254.5h5M696 254.5h2M379 255.5h2M518 255.5h2M552 255.5h2M563 255.5h4M571 255.5h3M577 255.5h2M582 255.5h2M645 255.5h9M697 255.5h2M77 256.5h2M287 256.5h2M519 256.5h2M553 256.5h2M561 256.5h2M583 256.5h2M653 256.5h9M663 256.5h4M698 256.5h3M796 256.5h5M357 257.5h2M520 257.5h2M554 257.5h2M584 257.5h2M661 257.5h2M666 257.5h2M750 257.5h5M775 257.5h2M800 257.5h2M521 258.5h2M554 258.5h6M585 258.5h2M612 258.5h6M667 258.5h2M748 258.5h2M754 258.5h3M780 258.5h7M793 258.5h2M801 258.5h3M551 259.5h3M617 259.5h4M668 259.5h2M699 259.5h2M730 259.5h2M746 259.5h2M756 259.5h3M776 259.5h4M786 259.5h7M803 259.5h2M495 260.5h2M548 260.5h3M558 260.5h2M586 260.5h6M620 260.5h4M669 260.5h2M744 260.5h2M758 260.5h4M791 260.5h2M804 260.5h2M253 261.5h2M522 261.5h2M546 261.5h2M591 261.5h8M623 261.5h4M670 261.5h2M731 261.5h13M761 261.5h3M543 262.5h3M598 262.5h8M607 262.5h2M626 262.5h5M671 262.5h2M743 262.5h2M763 262.5h3M541 263.5h2M605 263.5h2M630 263.5h3M672 263.5h2M765 263.5h4M792 263.5h2M632 264.5h4M673 264.5h2M744 264.5h2M768 264.5h3M490 265.5h4M635 265.5h2M674 265.5h2M700 265.5h2M745 265.5h2M770 265.5h2M118 266.5h2M210 266.5h61M454 266.5h2M488 266.5h2M493 266.5h5M538 266.5h2M559 266.5h2M675 266.5h2M262 267.5h2M270 267.5h11M315 267.5h8M347 267.5h3M488 267.5h2M535 267.5h3M676 267.5h2M683 267.5h43M746 267.5h2M793 267.5h2M314 268.5h2M322 268.5h25M394 268.5h9M488 268.5h2M523 268.5h2M533 268.5h2M677 268.5h2M747 268.5h2M141 269.5h11M314 269.5h2M349 269.5h2M386 269.5h9M402 269.5h18M455 269.5h35M531 269.5h2M606 269.5h2M678 269.5h4M748 269.5h2M6 270.5h23M147 270.5h2M151 270.5h25M314 270.5h2M419 270.5h2M528 270.5h3M560 270.5h2M725 270.5h2M794 270.5h2M28 271.5h7M314 271.5h2M394 271.5h2M419 271.5h2M526 271.5h2M700 271.5h2M749 271.5h2M29 272.5h2M43 272.5h23M314 272.5h2M419 272.5h2M497 272.5h2M524 272.5h2M635 272.5h2M750 272.5h2M34 273.5h9M65 273.5h6M106 273.5h13M128 273.5h12M314 273.5h2M419 273.5h2M498 273.5h25M635 273.5h4M751 273.5h2M795 273.5h2M118 274.5h10M314 274.5h2M419 274.5h2M522 274.5h3M638 274.5h2M726 274.5h2M752 274.5h2M314 275.5h2M419 275.5h2M561 275.5h2M639 275.5h2M314 276.5h2M350 276.5h36M419 276.5h2M424 276.5h13M498 276.5h2M524 276.5h2M640 276.5h3M753 276.5h2M796 276.5h2M70 277.5h36M314 277.5h2M419 277.5h5M425 277.5h2M436 277.5h19M642 277.5h2M754 277.5h2M768 277.5h5M174 278.5h33M209 278.5h2M280 278.5h36M562 278.5h2M578 278.5h6M643 278.5h2M727 278.5h2M755 278.5h2M762 278.5h6M772 278.5h3M62 279.5h2M206 279.5h5M572 279.5h6M583 279.5h2M644 279.5h3M756 279.5h6M767 279.5h2M774 279.5h3M797 279.5h2M499 280.5h2M525 280.5h2M567 280.5h5M584 280.5h3M646 280.5h2M776 280.5h3M563 281.5h4M586 281.5h2M647 281.5h2M754 281.5h2M778 281.5h2M798 281.5h3M562 282.5h2M587 282.5h3M648 282.5h2M728 282.5h3M779 282.5h3M796 282.5h2M800 282.5h2M315 283.5h2M526 283.5h2M559 283.5h3M589 283.5h2M649 283.5h2M730 283.5h4M751 283.5h2M781 283.5h3M801 283.5h3M556 284.5h3M590 284.5h2M650 284.5h2M733 284.5h5M768 284.5h2M783 284.5h2M803 284.5h3M500 285.5h2M552 285.5h4M563 285.5h2M591 285.5h3M603 285.5h6M624 285.5h4M651 285.5h3M658 285.5h3M725 285.5h2M737 285.5h4M784 285.5h3M527 286.5h2M549 286.5h3M593 286.5h10M608 286.5h2M621 286.5h3M653 286.5h2M657 286.5h2M660 286.5h7M699 286.5h4M719 286.5h7M740 286.5h4M747 286.5h2M786 286.5h2M792 286.5h2M545 287.5h4M609 287.5h3M618 287.5h3M627 287.5h2M654 287.5h3M666 287.5h8M693 287.5h6M711 287.5h8M743 287.5h4M787 287.5h2M539 288.5h6M564 288.5h2M611 288.5h2M615 288.5h3M628 288.5h2M673 288.5h6M685 288.5h8M702 288.5h9M788 288.5h3M501 289.5h2M528 289.5h2M535 289.5h4M612 289.5h3M629 289.5h2M678 289.5h7M769 289.5h2M529 290.5h6M612 290.5h2M630 290.5h2M29 291.5h2M565 291.5h2M631 292.5h2M790 292.5h2M632 293.5h2M703 293.5h2M502 294.5h2M633 294.5h2M745 294.5h2M770 294.5h2M566 295.5h2M679 295.5h2M745 295.5h4M147 296.5h2M634 296.5h2M748 296.5h4M635 297.5h2M751 297.5h3M503 298.5h2M528 298.5h2M567 298.5h2M636 298.5h2M704 298.5h2M753 298.5h3M791 298.5h2M214 299.5h3M349 299.5h2M490 299.5h15M529 299.5h2M755 299.5h3M771 299.5h2M210 300.5h4M216 300.5h11M232 300.5h24M530 300.5h3M637 300.5h2M757 300.5h2M226 301.5h6M255 301.5h26M316 301.5h2M329 301.5h22M524 301.5h2M532 301.5h2M568 301.5h2M638 301.5h2M680 301.5h2M720 301.5h3M758 301.5h3M317 302.5h12M349 302.5h2M394 302.5h23M504 302.5h2M522 302.5h2M533 302.5h2M639 302.5h2M719 302.5h2M722 302.5h7M760 302.5h2M349 303.5h2M386 303.5h8M416 303.5h4M456 303.5h34M519 303.5h3M534 303.5h3M582 303.5h2M705 303.5h2M728 303.5h7M761 303.5h3M141 304.5h35M515 304.5h4M536 304.5h2M578 304.5h4M583 304.5h2M640 304.5h2M734 304.5h6M763 304.5h2M792 304.5h2M6 305.5h30M512 305.5h3M537 305.5h2M569 305.5h2M574 305.5h4M584 305.5h3M641 305.5h2M738 305.5h2M764 305.5h9M42 306.5h11M62 306.5h2M66 306.5h5M508 306.5h4M538 306.5h3M569 306.5h5M586 306.5h2M642 306.5h2M706 306.5h10M772 306.5h2M35 307.5h7M52 307.5h14M122 307.5h19M505 307.5h3M523 307.5h2M567 307.5h2M587 307.5h3M613 307.5h2M681 307.5h2M773 307.5h2M49 308.5h2M106 308.5h16M425 308.5h2M540 308.5h2M565 308.5h2M589 308.5h2M611 308.5h2M614 308.5h2M643 308.5h2M715 308.5h2M774 308.5h2M541 309.5h2M563 309.5h2M572 309.5h2M590 309.5h2M609 309.5h2M615 309.5h2M644 309.5h2M702 309.5h2M775 309.5h2M350 310.5h36M419 310.5h8M440 310.5h16M542 310.5h3M561 310.5h2M591 310.5h3M607 310.5h2M616 310.5h2M645 310.5h2M650 310.5h7M682 310.5h2M776 310.5h2M792 310.5h4M70 311.5h26M425 311.5h15M544 311.5h2M559 311.5h2M593 311.5h2M605 311.5h2M617 311.5h2M656 311.5h8M683 311.5h5M699 311.5h2M716 311.5h2M777 311.5h2M789 311.5h3M795 311.5h4M95 312.5h11M175 312.5h35M280 312.5h35M545 312.5h3M557 312.5h2M573 312.5h2M594 312.5h2M603 312.5h2M618 312.5h2M638 312.5h11M663 312.5h13M679 312.5h2M687 312.5h4M778 312.5h2M787 312.5h2M798 312.5h4M86 313.5h2M506 313.5h2M524 313.5h2M547 313.5h2M555 313.5h2M595 313.5h2M619 313.5h2M626 313.5h12M675 313.5h4M690 313.5h5M717 313.5h2M779 313.5h2M784 313.5h3M801 313.5h4M548 314.5h3M552 314.5h3M574 314.5h2M596 314.5h3M600 314.5h2M620 314.5h6M694 314.5h3M780 314.5h4M804 314.5h2M550 315.5h2M598 315.5h2M695 315.5h2M718 316.5h2M476 317.5h2M575 317.5h2M739 317.5h2M719 318.5h2M737 318.5h2M740 318.5h9M507 319.5h2M576 319.5h2M696 319.5h2M748 319.5h6M525 320.5h2M734 320.5h2M753 320.5h3M720 321.5h2M732 321.5h2M755 321.5h2M577 322.5h2M756 322.5h2M697 323.5h2M729 323.5h2M757 323.5h2M549 324.5h2M578 324.5h2M647 324.5h2M721 324.5h2M758 324.5h2M508 325.5h2M549 325.5h4M620 325.5h2M726 325.5h2M759 325.5h2M552 326.5h4M579 326.5h2M648 326.5h2M760 326.5h2M526 327.5h2M555 327.5h4M649 327.5h3M698 327.5h2M722 327.5h3M741 327.5h2M761 327.5h5M351 328.5h2M558 328.5h4M651 328.5h3M765 328.5h6M561 329.5h3M580 329.5h2M653 329.5h3M770 329.5h7M125 330.5h2M509 330.5h2M542 330.5h3M563 330.5h4M594 330.5h28M655 330.5h3M776 330.5h4M566 331.5h4M581 331.5h2M590 331.5h4M657 331.5h3M699 331.5h2M779 331.5h2M533 332.5h8M543 332.5h2M569 332.5h3M585 332.5h5M598 332.5h2M621 332.5h2M659 332.5h3M719 332.5h2M490 333.5h21M527 333.5h6M571 333.5h4M582 333.5h3M661 333.5h3M716 333.5h3M780 333.5h2M803 333.5h3M210 334.5h23M242 334.5h3M248 334.5h9M574 334.5h3M599 334.5h2M622 334.5h11M663 334.5h4M713 334.5h3M232 335.5h11M244 335.5h4M256 335.5h24M315 335.5h36M576 335.5h3M632 335.5h9M666 335.5h3M696 335.5h7M708 335.5h5M720 335.5h2M781 335.5h2M345 336.5h2M510 336.5h2M578 336.5h3M600 336.5h2M689 336.5h7M702 336.5h6M782 336.5h2M797 336.5h5M386 337.5h34M455 337.5h35M668 337.5h2M680 337.5h9M794 337.5h3M801 337.5h2M141 338.5h34M544 338.5h2M669 338.5h11M721 338.5h2M783 338.5h2M790 338.5h4M6 339.5h29M140 339.5h2M601 339.5h2M640 339.5h2M742 339.5h2M784 339.5h6M802 339.5h2M38 340.5h18M140 340.5h2M454 340.5h2M803 340.5h2M34 341.5h4M55 341.5h16M114 341.5h10M140 341.5h2M602 341.5h2M722 341.5h2M106 342.5h8M123 342.5h19M279 342.5h2M511 342.5h2M545 342.5h2M641 342.5h2M804 342.5h2M284 343.5h2M377 343.5h9M498 343.5h2M350 344.5h27M433 344.5h23M576 344.5h4M603 344.5h2M642 344.5h2M70 345.5h36M282 345.5h13M419 345.5h14M571 345.5h5M579 345.5h2M723 345.5h2M174 346.5h36M280 346.5h2M294 346.5h21M545 346.5h5M566 346.5h5M580 346.5h2M604 346.5h2M543 347.5h2M549 347.5h3M561 347.5h5M581 347.5h2M643 347.5h2M512 348.5h2M541 348.5h2M551 348.5h3M557 348.5h4M743 348.5h2M312 349.5h2M404 349.5h2M553 349.5h4M582 349.5h2M605 349.5h2M644 349.5h2M724 349.5h2M583 350.5h2M643 350.5h5M747 350.5h14M513 351.5h2M584 351.5h2M641 351.5h2M647 351.5h3M739 351.5h8M760 351.5h2M585 352.5h2M606 352.5h2M616 352.5h2M639 352.5h2M649 352.5h3M735 352.5h4M744 352.5h2M761 352.5h9M804 352.5h2M513 353.5h2M538 353.5h2M555 353.5h2M586 353.5h2M613 353.5h3M617 353.5h2M637 353.5h2M651 353.5h2M692 353.5h8M725 353.5h2M732 353.5h3M761 353.5h2M769 353.5h14M513 354.5h4M536 354.5h2M604 354.5h9M618 354.5h3M635 354.5h2M652 354.5h4M667 354.5h25M729 354.5h3M782 354.5h2M801 354.5h2M513 355.5h2M516 355.5h2M534 355.5h2M587 355.5h2M596 355.5h8M620 355.5h2M633 355.5h2M655 355.5h3M664 355.5h5M723 355.5h6M783 355.5h2M799 355.5h2M237 356.5h2M517 356.5h3M556 356.5h2M588 356.5h8M621 356.5h3M657 356.5h7M668 356.5h2M699 356.5h2M719 356.5h4M762 356.5h2M784 356.5h2M797 356.5h2M519 357.5h2M531 357.5h2M623 357.5h2M630 357.5h2M669 357.5h2M716 357.5h3M795 357.5h2M520 358.5h3M529 358.5h2M624 358.5h3M628 358.5h2M670 358.5h2M700 358.5h2M711 358.5h5M745 358.5h2M785 358.5h2M793 358.5h2M522 359.5h2M527 359.5h2M626 359.5h2M671 359.5h2M706 359.5h5M763 359.5h2M786 359.5h2M791 359.5h2M523 360.5h4M557 360.5h2M672 360.5h2M701 360.5h5M787 360.5h4M210 361.5h2M514 361.5h2M627 361.5h2M673 361.5h3M525 362.5h2M764 362.5h2M788 362.5h2M558 363.5h2M628 363.5h2M675 363.5h2M746 363.5h2M19 364.5h2M526 364.5h2M676 364.5h2M629 365.5h2M677 365.5h2M765 365.5h2M789 365.5h2M527 366.5h2M678 366.5h2M491 367.5h25M559 367.5h2M630 367.5h2M679 367.5h2M790 367.5h2M211 368.5h6M229 368.5h52M515 368.5h2M528 368.5h2M680 368.5h2M747 368.5h2M766 368.5h2M216 369.5h13M279 369.5h2M316 369.5h34M559 369.5h3M631 369.5h2M681 369.5h2M279 370.5h2M394 370.5h9M529 370.5h2M557 370.5h2M561 370.5h4M578 370.5h6M607 370.5h2M682 370.5h2M791 370.5h2M142 371.5h18M279 371.5h2M386 371.5h8M402 371.5h18M456 371.5h35M554 371.5h3M564 371.5h4M574 371.5h4M583 371.5h3M606 371.5h4M632 371.5h2M767 371.5h2M792 371.5h2M6 372.5h10M32 372.5h4M140 372.5h2M159 372.5h17M279 372.5h2M530 372.5h2M552 372.5h2M567 372.5h7M585 372.5h2M609 372.5h2M683 372.5h2M792 372.5h10M15 373.5h17M279 373.5h2M550 373.5h2M586 373.5h2M603 373.5h2M610 373.5h2M633 373.5h2M684 373.5h2M801 373.5h5M35 374.5h12M279 374.5h2M531 374.5h2M547 374.5h3M587 374.5h3M611 374.5h3M685 374.5h2M748 374.5h2M768 374.5h2M46 375.5h24M106 375.5h6M135 375.5h5M279 375.5h2M516 375.5h2M532 375.5h2M545 375.5h2M589 375.5h2M600 375.5h2M613 375.5h2M634 375.5h2M653 375.5h6M683 375.5h2M686 375.5h3M111 376.5h24M180 376.5h2M279 376.5h2M410 376.5h2M543 376.5h2M590 376.5h2M614 376.5h2M635 376.5h2M650 376.5h3M658 376.5h3M681 376.5h2M688 376.5h4M721 376.5h3M749 376.5h2M781 376.5h8M279 377.5h2M356 377.5h14M533 377.5h2M541 377.5h2M591 377.5h2M597 377.5h2M615 377.5h3M632 377.5h3M636 377.5h4M647 377.5h3M660 377.5h3M678 377.5h3M691 377.5h3M695 377.5h3M719 377.5h2M723 377.5h3M750 377.5h3M769 377.5h12M59 378.5h2M69 378.5h2M279 378.5h2M349 378.5h7M369 378.5h17M419 378.5h37M592 378.5h2M617 378.5h2M628 378.5h4M639 378.5h4M644 378.5h3M662 378.5h3M676 378.5h2M693 378.5h2M697 378.5h6M717 378.5h2M725 378.5h3M752 378.5h3M76 379.5h16M99 379.5h7M198 379.5h11M279 379.5h2M534 379.5h2M538 379.5h3M593 379.5h3M618 379.5h2M624 379.5h4M642 379.5h2M664 379.5h2M674 379.5h2M702 379.5h6M715 379.5h2M727 379.5h2M754 379.5h3M70 380.5h6M91 380.5h8M175 380.5h23M208 380.5h3M279 380.5h35M535 380.5h3M619 380.5h5M642 380.5h2M665 380.5h3M671 380.5h3M707 380.5h8M728 380.5h3M744 380.5h2M756 380.5h3M137 381.5h2M517 381.5h2M667 381.5h4M730 381.5h3M758 381.5h2M594 382.5h2M668 382.5h2M732 382.5h3M759 382.5h3M734 383.5h2M761 383.5h3M735 384.5h3M669 385.5h2M737 385.5h3M246 386.5h2M518 388.5h2M529 388.5h6M595 388.5h2M524 389.5h5M763 389.5h2M519 390.5h5M534 390.5h2M670 391.5h2M535 392.5h2M596 392.5h2M690 392.5h3M591 393.5h5M688 393.5h2M692 393.5h2M764 393.5h2M587 394.5h4M597 394.5h2M693 394.5h3M764 394.5h3M536 395.5h2M584 395.5h3M598 395.5h3M683 395.5h4M695 395.5h2M766 395.5h3M519 396.5h2M581 396.5h3M599 396.5h6M678 396.5h5M696 396.5h2M768 396.5h2M579 397.5h2M604 397.5h5M674 397.5h4M697 397.5h2M713 397.5h6M759 397.5h3M769 397.5h3M410 398.5h2M537 398.5h2M568 398.5h2M577 398.5h2M608 398.5h6M671 398.5h3M698 398.5h2M718 398.5h11M746 398.5h13M771 398.5h2M566 399.5h2M569 399.5h3M575 399.5h2M612 399.5h3M641 399.5h4M699 399.5h3M710 399.5h2M728 399.5h18M772 399.5h2M333 400.5h2M571 400.5h4M614 400.5h2M633 400.5h8M644 400.5h7M701 400.5h2M708 400.5h2M773 400.5h3M212 401.5h2M491 401.5h22M519 401.5h2M538 401.5h2M563 401.5h2M572 401.5h2M615 401.5h18M650 401.5h7M702 401.5h2M706 401.5h2M775 401.5h2M224 402.5h26M258 402.5h12M512 402.5h7M520 402.5h2M656 402.5h5M703 402.5h3M776 402.5h3M211 403.5h13M249 403.5h9M269 403.5h11M316 403.5h34M506 403.5h2M560 403.5h2M660 403.5h5M778 403.5h2M783 403.5h5M18 404.5h2M465 404.5h13M539 404.5h3M664 404.5h3M779 404.5h2M787 404.5h10M385 405.5h36M455 405.5h10M477 405.5h14M557 405.5h2M573 405.5h2M616 405.5h2M780 405.5h2M796 405.5h2M19 406.5h16M141 406.5h34M6 407.5h13M541 407.5h2M554 407.5h2M34 408.5h9M53 408.5h18M521 408.5h2M617 408.5h2M797 408.5h2M42 409.5h11M105 409.5h13M551 409.5h2M574 409.5h2M736 409.5h2M117 410.5h23M454 410.5h2M549 410.5h2M798 410.5h2M542 411.5h2M547 411.5h2M349 412.5h36M420 412.5h26M545 412.5h2M618 412.5h2M702 412.5h2M70 413.5h35M445 413.5h11M543 413.5h2M575 413.5h2M686 413.5h2M699 413.5h3M703 413.5h3M799 413.5h2M6 414.5h73M174 414.5h37M279 414.5h36M522 414.5h2M697 414.5h2M705 414.5h2M41 415.5h2M78 415.5h3M619 415.5h2M694 415.5h3M706 415.5h3M800 415.5h2M42 416.5h2M79 416.5h2M223 416.5h2M664 416.5h25M691 416.5h3M708 416.5h3M43 417.5h2M79 417.5h2M576 417.5h2M688 417.5h3M710 417.5h2M801 417.5h2M44 418.5h2M576 418.5h5M620 418.5h2M711 418.5h3M736 418.5h3M45 419.5h2M80 419.5h2M523 419.5h2M539 419.5h3M580 419.5h4M713 419.5h3M732 419.5h4M738 419.5h3M802 419.5h2M46 420.5h2M539 420.5h3M583 420.5h3M715 420.5h2M728 420.5h4M740 420.5h3M47 421.5h2M539 421.5h3M585 421.5h3M716 421.5h3M724 421.5h4M742 421.5h3M803 421.5h2M48 422.5h2M80 422.5h2M540 422.5h2M587 422.5h3M621 422.5h2M718 422.5h6M744 422.5h3M804 422.5h2M49 423.5h2M80 423.5h2M589 423.5h3M613 423.5h11M746 423.5h3M757 423.5h9M50 424.5h2M80 424.5h2M185 424.5h2M538 424.5h3M591 424.5h3M598 424.5h15M623 424.5h2M748 424.5h2M755 424.5h2M765 424.5h10M51 425.5h3M80 425.5h2M524 425.5h2M533 425.5h5M593 425.5h5M624 425.5h3M749 425.5h6M774 425.5h2M53 426.5h2M78 426.5h2M525 426.5h8M626 426.5h2M634 426.5h23M775 426.5h2M54 427.5h2M75 427.5h3M540 427.5h2M627 427.5h3M632 427.5h2M656 427.5h3M776 427.5h2M6 428.5h2M55 428.5h2M72 428.5h3M115 428.5h2M541 428.5h4M629 428.5h3M658 428.5h2M777 428.5h2M7 429.5h4M56 429.5h2M69 429.5h3M525 429.5h2M544 429.5h4M751 429.5h2M778 429.5h2M10 430.5h2M57 430.5h2M66 430.5h3M81 430.5h2M326 430.5h2M537 430.5h2M547 430.5h5M779 430.5h2M58 431.5h2M63 431.5h3M363 431.5h2M551 431.5h6M780 431.5h2M11 432.5h2M59 432.5h4M526 432.5h2M556 432.5h7M659 432.5h2M781 432.5h2M472 433.5h2M562 433.5h3M782 433.5h2M564 434.5h2M783 434.5h2M12 435.5h2M149 435.5h2M490 435.5h39M538 435.5h2M565 435.5h2M660 435.5h2M784 435.5h2M210 436.5h36M257 436.5h18M566 436.5h2M785 436.5h2M245 437.5h13M274 437.5h6M316 437.5h17M341 437.5h10M521 437.5h2M567 437.5h2M752 437.5h2M786 437.5h2M13 438.5h2M332 438.5h9M396 438.5h18M477 438.5h6M661 438.5h2M787 438.5h2M385 439.5h11M413 439.5h7M456 439.5h21M482 439.5h8M528 439.5h2M539 439.5h3M568 439.5h2M688 439.5h2M788 439.5h2M82 440.5h2M141 440.5h35M419 440.5h2M569 440.5h2M662 440.5h2M14 441.5h2M329 441.5h2M541 441.5h2M570 441.5h2M83 442.5h2M529 442.5h2M571 442.5h2M625 442.5h3M789 442.5h3M84 443.5h2M623 443.5h2M627 443.5h5M663 443.5h2M791 443.5h3M105 444.5h36M542 444.5h2M572 444.5h2M621 444.5h2M631 444.5h4M753 444.5h2M793 444.5h2M15 445.5h2M85 445.5h2M349 445.5h17M388 445.5h2M530 445.5h2M573 445.5h2M615 445.5h7M634 445.5h4M794 445.5h3M86 446.5h2M365 446.5h20M420 446.5h15M450 446.5h6M574 446.5h19M610 446.5h5M621 446.5h2M637 446.5h4M664 446.5h2M796 446.5h3M87 447.5h18M434 447.5h16M543 447.5h2M592 447.5h2M604 447.5h6M640 447.5h3M689 447.5h7M798 447.5h2M16 448.5h2M87 448.5h2M175 448.5h15M201 448.5h9M279 448.5h37M531 448.5h2M593 448.5h3M600 448.5h4M622 448.5h2M642 448.5h4M665 448.5h2M695 448.5h19M799 448.5h3M88 449.5h2M152 449.5h2M189 449.5h12M595 449.5h5M645 449.5h3M801 449.5h2M17 450.5h3M544 450.5h2M570 450.5h2M623 450.5h2M647 450.5h3M713 450.5h43M802 450.5h3M19 451.5h3M89 451.5h2M532 451.5h2M649 451.5h4M666 451.5h2M681 451.5h6M753 451.5h3M804 451.5h2M14 452.5h2M21 452.5h3M624 452.5h2M652 452.5h3M667 452.5h14M755 452.5h2M23 453.5h3M533 453.5h2M545 453.5h2M625 453.5h2M654 453.5h3M714 453.5h2M756 453.5h2M25 454.5h2M656 454.5h3M686 454.5h2M757 454.5h2M26 455.5h3M93 455.5h2M626 455.5h2M658 455.5h3M758 455.5h2M763 455.5h18M28 456.5h3M534 456.5h2M548 456.5h17M660 456.5h3M759 456.5h4M780 456.5h2M30 457.5h3M546 457.5h2M627 457.5h2M662 457.5h3M687 457.5h2M781 457.5h2M32 458.5h3M535 458.5h2M563 458.5h2M715 458.5h2M782 458.5h2M6 459.5h2M34 459.5h2M521 459.5h2M628 459.5h2M783 459.5h2M35 460.5h3M784 460.5h2M37 461.5h3M536 461.5h2M564 461.5h2M629 461.5h2M688 461.5h2M39 462.5h3M88 462.5h2M785 462.5h2M41 463.5h2M88 463.5h3M537 463.5h2M540 463.5h2M630 463.5h2M716 463.5h2M786 463.5h2M42 464.5h3M48 464.5h3M90 464.5h2M538 464.5h4M689 464.5h2M787 464.5h2M44 465.5h4M50 465.5h4M91 465.5h2M565 465.5h2M631 465.5h2M53 466.5h3M92 466.5h3M788 466.5h2M55 467.5h4M93 467.5h2M594 467.5h3M632 467.5h2M789 467.5h2M58 468.5h4M93 468.5h2M566 468.5h2M596 468.5h2M690 468.5h2M717 468.5h2M61 469.5h4M94 469.5h2M490 469.5h49M591 469.5h2M597 469.5h2M790 469.5h2M64 470.5h4M95 470.5h2M210 470.5h26M259 470.5h21M489 470.5h2M598 470.5h2M633 470.5h2M791 470.5h2M67 471.5h4M96 471.5h2M235 471.5h24M316 471.5h35M588 471.5h2M599 471.5h2M70 472.5h4M97 472.5h2M279 472.5h2M477 472.5h10M567 472.5h2M600 472.5h2M634 472.5h2M792 472.5h2M73 473.5h5M386 473.5h34M456 473.5h21M486 473.5h5M585 473.5h2M601 473.5h2M622 473.5h15M691 473.5h2M718 473.5h2M77 474.5h4M140 474.5h36M419 474.5h2M537 474.5h2M540 474.5h3M602 474.5h2M617 474.5h5M636 474.5h3M793 474.5h2M79 475.5h2M272 475.5h2M537 475.5h2M568 475.5h2M582 475.5h2M603 475.5h2M613 475.5h4M638 475.5h3M659 475.5h2M538 476.5h3M542 476.5h2M604 476.5h2M609 476.5h4M640 476.5h3M657 476.5h2M660 476.5h2M794 476.5h2M80 477.5h2M106 477.5h9M209 477.5h2M539 477.5h2M579 477.5h2M605 477.5h4M642 477.5h3M655 477.5h2M661 477.5h3M692 477.5h2M795 477.5h2M114 478.5h26M540 478.5h2M543 478.5h2M569 478.5h2M644 478.5h3M652 478.5h3M663 478.5h2M719 478.5h2M350 479.5h2M541 479.5h2M570 479.5h2M576 479.5h2M646 479.5h3M650 479.5h2M664 479.5h3M719 479.5h4M750 479.5h7M796 479.5h2M81 480.5h2M350 480.5h36M420 480.5h21M453 480.5h3M542 480.5h4M568 480.5h2M571 480.5h5M648 480.5h2M666 480.5h2M717 480.5h2M722 480.5h4M746 480.5h4M756 480.5h2M99 481.5h7M285 481.5h14M440 481.5h13M543 481.5h3M566 481.5h2M667 481.5h3M715 481.5h2M725 481.5h4M743 481.5h3M757 481.5h3M797 481.5h2M82 482.5h2M92 482.5h7M175 482.5h28M280 482.5h5M298 482.5h18M544 482.5h3M564 482.5h2M574 482.5h2M605 482.5h2M669 482.5h2M693 482.5h2M728 482.5h4M740 482.5h3M202 483.5h8M545 483.5h2M670 483.5h3M712 483.5h2M731 483.5h4M737 483.5h3M759 483.5h3M798 483.5h2M803 483.5h3M83 484.5h2M427 484.5h2M546 484.5h2M561 484.5h2M575 484.5h2M672 484.5h2M709 484.5h3M734 484.5h3M761 484.5h2M799 484.5h4M559 485.5h2M673 485.5h3M762 485.5h10M547 486.5h2M557 486.5h2M576 486.5h2M675 486.5h2M694 486.5h2M706 486.5h2M771 486.5h16M84 487.5h2M540 487.5h2M555 487.5h2M676 487.5h2M704 487.5h2M786 487.5h13M548 488.5h2M553 488.5h2M577 488.5h2M677 488.5h3M701 488.5h3M85 489.5h2M551 489.5h2M679 489.5h2M694 489.5h4M699 489.5h2M465 490.5h2M549 490.5h2M680 490.5h2M691 490.5h3M697 490.5h2M86 491.5h2M578 491.5h2M681 491.5h3M687 491.5h4M37 492.5h2M683 492.5h4M698 492.5h2M36 493.5h4M87 493.5h2M579 493.5h2M39 494.5h2M40 495.5h3M580 495.5h2M699 495.5h2M6 496.5h3M42 496.5h2M544 496.5h5M8 497.5h3M31 497.5h2M43 497.5h2M541 497.5h3M581 497.5h2M794 497.5h2M10 498.5h4M44 498.5h3M497 498.5h2M548 498.5h2M700 498.5h2M793 498.5h3M13 499.5h4M46 499.5h2M582 499.5h2M795 499.5h2M16 500.5h3M47 500.5h3M538 500.5h3M796 500.5h2M18 501.5h4M26 501.5h2M49 501.5h2M533 501.5h5M549 501.5h2M701 501.5h2M789 501.5h2M21 502.5h5M50 502.5h3M583 502.5h2M797 502.5h2M52 503.5h2M491 503.5h2M498 503.5h36M798 503.5h2M53 504.5h2M210 504.5h15M233 504.5h13M492 504.5h7M550 504.5h2M584 504.5h2M702 504.5h2M54 505.5h3M209 505.5h2M224 505.5h9M245 505.5h35M310 505.5h2M316 505.5h18M341 505.5h10M799 505.5h2M56 506.5h2M333 506.5h8M349 506.5h2M385 506.5h3M473 506.5h11M585 506.5h2M703 506.5h2M800 506.5h2M57 507.5h3M161 507.5h13M387 507.5h34M455 507.5h18M483 507.5h8M551 507.5h2M801 507.5h2M59 508.5h2M141 508.5h20M173 508.5h2M245 508.5h2M802 508.5h2M60 509.5h3M387 509.5h2M552 509.5h4M586 509.5h2M704 509.5h2M803 509.5h2M62 510.5h2M555 510.5h5M640 510.5h5M63 511.5h3M559 511.5h5M587 511.5h2M637 511.5h3M644 511.5h3M705 511.5h2M759 511.5h3M804 511.5h2M65 512.5h2M106 512.5h35M378 512.5h2M563 512.5h5M605 512.5h5M634 512.5h3M646 512.5h2M757 512.5h2M761 512.5h3M66 513.5h3M73 513.5h2M104 513.5h2M384 513.5h2M567 513.5h4M603 513.5h2M609 513.5h3M631 513.5h3M647 513.5h2M755 513.5h2M763 513.5h2M68 514.5h2M71 514.5h3M104 514.5h2M191 514.5h2M350 514.5h36M427 514.5h12M570 514.5h5M588 514.5h2M601 514.5h2M611 514.5h4M628 514.5h3M648 514.5h2M706 514.5h2M752 514.5h3M764 514.5h2M69 515.5h2M73 515.5h7M87 515.5h19M279 515.5h3M420 515.5h7M437 515.5h18M574 515.5h5M599 515.5h2M614 515.5h3M625 515.5h3M649 515.5h11M731 515.5h3M750 515.5h2M765 515.5h2M79 516.5h8M174 516.5h14M198 516.5h13M281 516.5h35M462 516.5h2M548 516.5h2M578 516.5h5M597 516.5h2M616 516.5h4M622 516.5h3M659 516.5h10M707 516.5h2M728 516.5h3M733 516.5h3M748 516.5h2M766 516.5h3M187 517.5h11M545 517.5h3M582 517.5h9M595 517.5h2M619 517.5h3M668 517.5h6M725 517.5h3M735 517.5h3M745 517.5h3M768 517.5h2M542 518.5h3M590 518.5h5M708 518.5h2M722 518.5h3M737 518.5h3M743 518.5h2M769 518.5h2M673 519.5h2M719 519.5h3M739 519.5h4M770 519.5h3M709 520.5h2M715 520.5h4M740 520.5h2M674 521.5h2M712 521.5h3M537 522.5h3M675 522.5h2M710 522.5h2M535 523.5h2M772 523.5h2M533 524.5h2M620 524.5h2M676 524.5h2M706 524.5h4M701 525.5h5M677 526.5h2M691 526.5h10M709 526.5h2M678 527.5h13M741 527.5h2M773 527.5h2M132 528.5h2M549 528.5h2M774 530.5h2M24 531.5h2M774 531.5h3M710 532.5h2M776 532.5h2M771 533.5h2M777 533.5h3M779 534.5h3M742 535.5h2M768 535.5h2M781 535.5h2M802 535.5h4M766 536.5h2M782 536.5h3M798 536.5h4M92 537.5h2M497 537.5h37M784 537.5h2M794 537.5h4M230 538.5h22M272 538.5h9M491 538.5h6M742 538.5h2M763 538.5h2M785 538.5h3M789 538.5h5M61 539.5h2M210 539.5h20M251 539.5h21M315 539.5h16M345 539.5h5M621 539.5h2M711 539.5h2M740 539.5h2M743 539.5h3M787 539.5h2M6 540.5h2M22 540.5h7M61 540.5h2M330 540.5h15M419 540.5h2M550 540.5h2M738 540.5h2M745 540.5h2M760 540.5h2M7 541.5h4M20 541.5h2M28 541.5h3M141 541.5h14M385 541.5h34M456 541.5h35M736 541.5h2M746 541.5h2M10 542.5h4M18 542.5h2M30 542.5h4M154 542.5h22M548 542.5h4M734 542.5h2M747 542.5h2M757 542.5h2M13 543.5h5M33 543.5h4M56 543.5h4M436 543.5h2M540 543.5h8M550 543.5h3M732 543.5h2M748 543.5h2M36 544.5h3M53 544.5h3M59 544.5h12M533 544.5h7M552 544.5h2M622 544.5h9M730 544.5h2M749 544.5h2M754 544.5h2M38 545.5h3M50 545.5h3M553 545.5h2M630 545.5h6M728 545.5h2M750 545.5h2M40 546.5h4M48 546.5h2M106 546.5h35M554 546.5h2M635 546.5h5M726 546.5h2M751 546.5h2M43 547.5h5M371 547.5h6M555 547.5h2M619 547.5h2M639 547.5h5M349 548.5h8M363 548.5h8M376 548.5h9M423 548.5h26M556 548.5h2M583 548.5h5M616 548.5h3M643 548.5h4M723 548.5h2M70 549.5h17M356 549.5h7M420 549.5h3M447 549.5h8M557 549.5h2M579 549.5h4M587 549.5h2M614 549.5h2M646 549.5h2M721 549.5h2M86 550.5h19M174 550.5h36M280 550.5h30M558 550.5h2M574 550.5h5M588 550.5h2M612 550.5h2M620 550.5h2M712 550.5h9M309 551.5h6M559 551.5h3M569 551.5h5M589 551.5h2M610 551.5h2M647 551.5h2M718 551.5h2M561 552.5h8M590 552.5h3M607 552.5h3M648 552.5h2M670 552.5h5M709 552.5h2M592 553.5h2M605 553.5h2M665 553.5h5M674 553.5h2M707 553.5h2M593 554.5h2M602 554.5h3M649 554.5h2M661 554.5h4M675 554.5h3M45 555.5h2M594 555.5h2M599 555.5h3M650 555.5h2M656 555.5h5M677 555.5h3M703 555.5h3M719 555.5h2M323 556.5h2M595 556.5h4M651 556.5h5M679 556.5h4M701 556.5h2M682 557.5h3M699 557.5h2M166 558.5h2M524 558.5h2M684 558.5h3M696 558.5h3M720 558.5h2M238 559.5h2M686 559.5h3M693 559.5h3M122 560.5h2M688 560.5h5M690 561.5h2M721 562.5h2M691 564.5h2M46 567.5h3M692 567.5h2M722 567.5h2M46 568.5h2M693 569.5h3M45 570.5h2M695 570.5h2M490 571.5h43M649 571.5h2M690 571.5h2M696 571.5h3M723 571.5h2M747 571.5h5M211 572.5h35M272 572.5h6M532 572.5h2M557 572.5h5M621 572.5h2M650 572.5h2M698 572.5h3M745 572.5h2M751 572.5h2M245 573.5h27M277 573.5h4M316 573.5h15M348 573.5h2M555 573.5h2M561 573.5h2M594 573.5h2M651 573.5h3M700 573.5h3M743 573.5h2M752 573.5h2M279 574.5h2M330 574.5h18M394 574.5h8M552 574.5h3M562 574.5h3M592 574.5h5M622 574.5h2M653 574.5h2M702 574.5h2M741 574.5h2M753 574.5h2M279 575.5h2M388 575.5h6M401 575.5h19M455 575.5h35M564 575.5h3M589 575.5h3M596 575.5h2M623 575.5h4M644 575.5h2M654 575.5h3M703 575.5h3M754 575.5h3M782 575.5h2M140 576.5h36M279 576.5h2M386 576.5h2M533 576.5h2M549 576.5h2M566 576.5h2M586 576.5h3M597 576.5h3M626 576.5h4M656 576.5h2M684 576.5h2M705 576.5h2M724 576.5h2M738 576.5h2M756 576.5h2M779 576.5h3M783 576.5h3M533 577.5h2M547 577.5h2M567 577.5h3M583 577.5h3M599 577.5h2M618 577.5h2M629 577.5h4M657 577.5h3M706 577.5h3M718 577.5h10M736 577.5h2M757 577.5h2M775 577.5h4M785 577.5h3M45 578.5h9M69 578.5h2M533 578.5h2M545 578.5h2M569 578.5h3M581 578.5h2M600 578.5h2M632 578.5h5M659 578.5h2M708 578.5h10M727 578.5h4M734 578.5h2M758 578.5h2M770 578.5h5M787 578.5h3M53 579.5h16M105 579.5h5M454 579.5h2M533 579.5h2M543 579.5h2M571 579.5h2M578 579.5h3M601 579.5h2M636 579.5h5M660 579.5h3M730 579.5h4M759 579.5h3M766 579.5h4M789 579.5h3M109 580.5h31M533 580.5h3M538 580.5h5M572 580.5h3M576 580.5h2M602 580.5h2M662 580.5h3M761 580.5h5M791 580.5h3M535 581.5h3M574 581.5h2M603 581.5h2M613 581.5h2M664 581.5h2M793 581.5h3M6 582.5h2M349 582.5h36M419 582.5h7M438 582.5h18M604 582.5h2M665 582.5h3M795 582.5h3M7 583.5h3M70 583.5h7M86 583.5h19M163 583.5h2M279 583.5h4M376 583.5h2M425 583.5h13M605 583.5h2M610 583.5h2M667 583.5h3M797 583.5h2M9 584.5h3M76 584.5h10M187 584.5h9M282 584.5h34M535 584.5h2M606 584.5h2M669 584.5h2M11 585.5h3M175 585.5h12M195 585.5h16M607 585.5h2M670 585.5h3M13 586.5h4M672 586.5h3M16 587.5h3M575 587.5h2M18 588.5h3M536 588.5h2M20 589.5h3M44 589.5h2M673 589.5h2M22 590.5h3M639 590.5h2M24 591.5h3M411 591.5h2M608 591.5h2M26 592.5h3M537 592.5h2M576 592.5h2M28 593.5h4M45 593.5h142M538 593.5h2M762 593.5h2M30 594.5h2M538 594.5h3M185 596.5h2M540 596.5h2M609 596.5h2M31 597.5h2M141 597.5h2M533 597.5h2M538 597.5h2M541 597.5h2M577 597.5h2M542 598.5h2M669 598.5h33M729 598.5h2M32 599.5h2M100 599.5h2M184 599.5h2M543 599.5h2M610 599.5h2M665 599.5h4M700 599.5h2M184 600.5h2M544 600.5h2M578 600.5h3M640 600.5h2M661 600.5h4M674 600.5h2M701 600.5h2M726 600.5h2M730 600.5h2M184 601.5h2M470 601.5h2M539 601.5h2M545 601.5h2M577 601.5h2M580 601.5h3M659 601.5h2M702 601.5h2M763 601.5h2M33 602.5h2M142 602.5h3M183 602.5h2M546 602.5h2M575 602.5h2M582 602.5h4M587 602.5h6M656 602.5h3M703 602.5h2M731 602.5h2M140 603.5h2M144 603.5h3M183 603.5h2M540 603.5h2M547 603.5h2M573 603.5h2M585 603.5h2M592 603.5h9M611 603.5h2M654 603.5h2M722 603.5h2M34 604.5h2M146 604.5h4M376 604.5h2M538 604.5h4M548 604.5h2M571 604.5h2M600 604.5h6M652 604.5h2M704 604.5h2M732 604.5h2M149 605.5h3M446 605.5h2M491 605.5h47M541 605.5h2M549 605.5h2M569 605.5h2M605 605.5h6M650 605.5h2M705 605.5h2M719 605.5h2M733 605.5h2M151 606.5h3M210 606.5h36M550 606.5h3M567 606.5h2M586 606.5h2M610 606.5h4M648 606.5h2M706 606.5h2M35 607.5h2M153 607.5h3M245 607.5h29M552 607.5h2M565 607.5h2M613 607.5h2M641 607.5h7M716 607.5h2M734 607.5h2M764 607.5h2M101 608.5h2M134 608.5h2M155 608.5h3M273 608.5h7M314 608.5h37M386 608.5h6M516 608.5h2M542 608.5h2M553 608.5h2M587 608.5h2M614 608.5h2M707 608.5h2M764 608.5h3M36 609.5h2M157 609.5h3M391 609.5h30M456 609.5h35M554 609.5h2M562 609.5h2M615 609.5h2M646 609.5h2M708 609.5h2M735 609.5h2M766 609.5h2M159 610.5h4M543 610.5h2M555 610.5h2M560 610.5h2M588 610.5h2M616 610.5h2M712 610.5h2M767 610.5h3M37 611.5h2M162 611.5h3M556 611.5h4M617 611.5h2M637 611.5h2M647 611.5h2M709 611.5h3M736 611.5h2M769 611.5h2M36 612.5h5M164 612.5h3M618 612.5h2M737 612.5h2M770 612.5h3M34 613.5h2M40 613.5h3M166 613.5h3M544 613.5h2M589 613.5h2M619 613.5h3M648 613.5h2M758 613.5h2M772 613.5h3M42 614.5h3M101 614.5h4M127 614.5h2M168 614.5h3M621 614.5h2M649 614.5h2M738 614.5h2M774 614.5h2M31 615.5h2M44 615.5h3M97 615.5h4M104 615.5h3M170 615.5h12M545 615.5h2M590 615.5h2M622 615.5h2M775 615.5h3M29 616.5h2M46 616.5h4M93 616.5h4M106 616.5h4M350 616.5h36M420 616.5h28M623 616.5h2M631 616.5h2M650 616.5h2M739 616.5h2M777 616.5h3M788 616.5h3M27 617.5h2M49 617.5h3M67 617.5h5M90 617.5h3M109 617.5h3M314 617.5h2M447 617.5h9M546 617.5h2M555 617.5h2M591 617.5h2M624 617.5h3M629 617.5h2M740 617.5h2M779 617.5h2M785 617.5h3M51 618.5h3M65 618.5h2M71 618.5h4M86 618.5h4M111 618.5h4M180 618.5h13M279 618.5h37M553 618.5h2M626 618.5h3M651 618.5h2M675 618.5h8M752 618.5h2M780 618.5h5M24 619.5h2M53 619.5h3M62 619.5h3M74 619.5h4M82 619.5h4M114 619.5h4M192 619.5h18M551 619.5h2M556 619.5h2M682 619.5h8M741 619.5h2M22 620.5h2M55 620.5h7M77 620.5h5M117 620.5h3M549 620.5h2M557 620.5h2M592 620.5h2M689 620.5h6M742 620.5h2M20 621.5h2M79 621.5h2M119 621.5h2M547 621.5h2M652 621.5h2M694 621.5h8M558 622.5h2M701 622.5h8M710 622.5h3M743 622.5h2M17 623.5h2M433 623.5h2M559 623.5h2M593 623.5h2M653 623.5h2M708 623.5h2M712 623.5h3M744 623.5h4M15 624.5h2M178 624.5h2M669 624.5h4M714 624.5h4M747 624.5h2M13 625.5h2M80 625.5h2M120 625.5h2M560 625.5h2M654 625.5h2M664 625.5h5M717 625.5h3M748 625.5h3M561 626.5h2M594 626.5h2M661 626.5h3M719 626.5h3M750 626.5h3M10 627.5h2M562 627.5h2M571 627.5h18M658 627.5h3M672 627.5h2M721 627.5h3M752 627.5h2M8 628.5h2M563 628.5h8M588 628.5h4M655 628.5h3M723 628.5h3M753 628.5h3M81 629.5h2M121 629.5h2M179 629.5h2M591 629.5h6M673 629.5h2M725 629.5h3M755 629.5h3M470 630.5h2M594 630.5h3M727 630.5h4M757 630.5h3M232 631.5h2M596 631.5h2M674 631.5h2M730 631.5h3M759 631.5h2M180 632.5h2M397 632.5h2M732 632.5h3M760 632.5h3M181 633.5h2M597 633.5h2M734 633.5h3M762 633.5h4M82 634.5h2M122 634.5h2M182 634.5h2M598 634.5h2M675 634.5h2M736 634.5h3M765 634.5h3M599 635.5h2M626 635.5h2M767 635.5h3M183 636.5h2M625 636.5h5M676 636.5h2M769 636.5h3M184 637.5h2M563 637.5h2M600 637.5h2M623 637.5h2M629 637.5h3M771 637.5h4M780 637.5h4M83 638.5h2M123 638.5h2M185 638.5h2M533 638.5h12M601 638.5h2M631 638.5h4M677 638.5h2M774 638.5h4M783 638.5h16M186 639.5h2M491 639.5h42M544 639.5h4M620 639.5h2M634 639.5h4M777 639.5h2M211 640.5h14M232 640.5h13M260 640.5h10M602 640.5h2M617 640.5h3M637 640.5h3M678 640.5h2M224 641.5h8M244 641.5h16M269 641.5h12M323 641.5h27M603 641.5h2M615 641.5h2M639 641.5h4M738 641.5h2M124 642.5h2M187 642.5h2M473 642.5h9M604 642.5h2M613 642.5h2M642 642.5h5M84 643.5h2M354 643.5h2M399 643.5h20M455 643.5h18M481 643.5h10M611 643.5h2M679 643.5h2M125 644.5h2M605 644.5h2M609 644.5h2M126 645.5h4M606 645.5h3M680 645.5h2M129 646.5h3M188 646.5h2M483 646.5h2M121 647.5h2M131 647.5h4M681 647.5h2M85 648.5h2M115 648.5h6M134 648.5h3M645 648.5h2M109 649.5h6M136 649.5h4M682 649.5h2M700 649.5h4M739 649.5h2M104 650.5h5M139 650.5h3M159 650.5h5M189 650.5h2M349 650.5h17M697 650.5h3M703 650.5h4M6 651.5h4M99 651.5h5M141 651.5h4M156 651.5h3M163 651.5h3M445 651.5h10M694 651.5h3M706 651.5h3M9 652.5h3M86 652.5h2M95 652.5h4M144 652.5h3M153 652.5h3M165 652.5h3M190 652.5h21M287 652.5h18M512 652.5h2M603 652.5h3M683 652.5h2M691 652.5h3M708 652.5h4M11 653.5h4M90 653.5h5M146 653.5h7M167 653.5h3M190 653.5h2M601 653.5h2M605 653.5h2M689 653.5h2M711 653.5h3M14 654.5h3M87 654.5h3M169 654.5h3M606 654.5h2M684 654.5h2M687 654.5h2M713 654.5h3M16 655.5h3M171 655.5h2M191 655.5h2M598 655.5h2M607 655.5h2M685 655.5h2M715 655.5h3M740 655.5h2M18 656.5h4M172 656.5h3M608 656.5h2M646 656.5h2M717 656.5h3M21 657.5h3M47 657.5h5M174 657.5h3M191 657.5h2M595 657.5h2M609 657.5h2M719 657.5h3M738 657.5h5M23 658.5h4M51 658.5h5M176 658.5h3M189 658.5h2M192 658.5h2M610 658.5h2M721 658.5h3M731 658.5h7M742 658.5h3M26 659.5h3M55 659.5h5M178 659.5h2M187 659.5h2M592 659.5h2M611 659.5h3M647 659.5h2M723 659.5h8M744 659.5h3M28 660.5h3M59 660.5h5M179 660.5h3M185 660.5h2M613 660.5h2M647 660.5h8M746 660.5h3M792 660.5h2M30 661.5h4M63 661.5h5M181 661.5h4M193 661.5h2M614 661.5h2M654 661.5h7M748 661.5h25M790 661.5h2M33 662.5h3M41 662.5h2M67 662.5h5M564 662.5h2M588 662.5h2M615 662.5h2M625 662.5h21M660 662.5h8M772 662.5h3M787 662.5h3M35 663.5h3M71 663.5h6M194 663.5h2M559 663.5h5M565 663.5h3M616 663.5h9M667 663.5h15M774 663.5h2M785 663.5h2M37 664.5h3M76 664.5h7M553 664.5h6M567 664.5h3M775 664.5h3M782 664.5h3M195 665.5h2M547 665.5h6M569 665.5h4M584 665.5h2M777 665.5h5M81 666.5h2M196 666.5h2M572 666.5h3M574 667.5h3M680 667.5h2M779 667.5h2M576 668.5h3M580 668.5h2M82 669.5h2M578 669.5h2M780 670.5h2M83 672.5h2M546 672.5h2M501 673.5h6M519 673.5h27M506 674.5h13M579 674.5h2M84 675.5h2M211 675.5h13M489 676.5h2M681 676.5h2M781 676.5h2M681 677.5h4M85 678.5h2M684 678.5h2M685 679.5h3M747 679.5h2M687 680.5h2M86 681.5h2M688 681.5h2M87 682.5h2M580 682.5h2M689 682.5h3M86 683.5h7M525 683.5h2M579 683.5h3M691 683.5h2M39 684.5h2M92 684.5h5M692 684.5h3M96 685.5h5M694 685.5h2M100 686.5h4M205 686.5h5M695 686.5h2M782 686.5h2M103 687.5h5M199 687.5h6M640 687.5h3M696 687.5h3M80 688.5h2M107 688.5h6M642 688.5h3M698 688.5h2M40 689.5h3M111 689.5h3M644 689.5h2M699 689.5h2M42 690.5h6M645 690.5h3M700 690.5h2M47 691.5h6M113 691.5h2M647 691.5h2M701 691.5h3M719 691.5h2M52 692.5h7M114 692.5h2M648 692.5h3M703 692.5h2M717 692.5h5M36 693.5h3M58 693.5h6M74 693.5h2M115 693.5h2M650 693.5h3M704 693.5h2M715 693.5h2M721 693.5h3M32 694.5h4M37 694.5h2M63 694.5h6M116 694.5h2M142 694.5h7M652 694.5h2M705 694.5h2M713 694.5h2M723 694.5h3M28 695.5h4M68 695.5h5M117 695.5h2M130 695.5h12M148 695.5h3M653 695.5h3M706 695.5h2M711 695.5h2M725 695.5h3M783 695.5h3M25 696.5h3M71 696.5h2M118 696.5h12M150 696.5h2M547 696.5h4M655 696.5h3M707 696.5h4M727 696.5h3M746 696.5h4M781 696.5h2M785 696.5h2M21 697.5h4M151 697.5h21M550 697.5h3M657 697.5h3M729 697.5h3M744 697.5h2M749 697.5h3M786 697.5h3M803 697.5h2M17 698.5h4M171 698.5h2M552 698.5h3M659 698.5h3M731 698.5h3M742 698.5h2M751 698.5h3M778 698.5h2M788 698.5h3M12 699.5h5M554 699.5h3M661 699.5h3M733 699.5h3M740 699.5h2M753 699.5h3M776 699.5h2M790 699.5h4M800 699.5h2M8 700.5h4M38 700.5h2M172 700.5h2M556 700.5h3M663 700.5h3M735 700.5h5M755 700.5h3M774 700.5h2M793 700.5h3M798 700.5h2M6 701.5h2M558 701.5h3M757 701.5h3M772 701.5h2M795 701.5h3M173 702.5h2M759 702.5h3M770 702.5h2M761 703.5h2M768 703.5h2M174 704.5h2M762 704.5h3M766 704.5h2M175 705.5h2M764 705.5h2M72 706.5h2M546 706.5h2M176 707.5h2M512 707.5h16M544 707.5h2M210 708.5h3M177 709.5h2M178 710.5h2M665 711.5h2M179 712.5h2M180 714.5h2M665 714.5h5M797 714.5h2M73 715.5h2M669 715.5h2M181 716.5h2M662 716.5h2M670 716.5h3M182 717.5h2M672 717.5h3M798 717.5h2M674 718.5h3M799 718.5h3M183 719.5h2M658 719.5h2M676 719.5h3M699 719.5h4M801 719.5h3M678 720.5h2M694 720.5h5M702 720.5h2M803 720.5h2M184 721.5h2M679 721.5h3M689 721.5h5M703 721.5h2M804 721.5h2M185 722.5h2M681 722.5h2M684 722.5h5M704 722.5h2M682 723.5h2M705 723.5h2M731 723.5h7M74 724.5h2M186 724.5h2M706 724.5h2M724 724.5h7M737 724.5h3M707 725.5h2M717 725.5h7M739 725.5h2M110 726.5h2M187 726.5h2M708 726.5h9M740 726.5h2M108 727.5h2M111 727.5h2M188 727.5h2M741 727.5h2M106 728.5h2M112 728.5h2M742 728.5h3M104 729.5h2M113 729.5h3M189 729.5h2M744 729.5h2M72 730.5h5M102 730.5h2M115 730.5h2M190 730.5h2M745 730.5h2M76 731.5h5M100 731.5h2M116 731.5h2M683 731.5h2M746 731.5h2M80 732.5h6M98 732.5h2M117 732.5h2M191 732.5h6M747 732.5h2M85 733.5h5M96 733.5h2M118 733.5h3M748 733.5h2M759 733.5h3M89 734.5h7M120 734.5h2M749 734.5h2M757 734.5h2M761 734.5h5M121 735.5h2M750 735.5h2M755 735.5h2M765 735.5h6M122 736.5h2M751 736.5h4M770 736.5h6M123 737.5h3M775 737.5h7M125 738.5h2M781 738.5h5M126 739.5h2M147 739.5h2M127 740.5h2M173 740.5h7M785 740.5h2M93 741.5h2M128 741.5h3M144 741.5h2M179 741.5h6M130 742.5h2M213 742.5h12M786 742.5h2M131 743.5h2M141 743.5h2M211 743.5h2M787 743.5h2M132 744.5h2M138 745.5h2M684 745.5h2M788 745.5h2M789 747.5h2M790 749.5h2M791 751.5h2M742 752.5h7M738 753.5h4M747 753.5h4M198 754.5h12M734 754.5h4M750 754.5h3M792 754.5h2M730 755.5h4M752 755.5h2M682 756.5h4M726 756.5h4M753 756.5h3M793 756.5h2M685 757.5h7M722 757.5h4M755 757.5h2M694 758.5h10M718 758.5h4M756 758.5h2M794 758.5h2M702 759.5h3M713 759.5h5M757 759.5h3M704 760.5h9M759 760.5h2M795 760.5h2M760 761.5h2M801 761.5h5M761 762.5h3M796 762.5h5M763 763.5h2M764 764.5h3M766 765.5h2M767 766.5h2M768 767.5h3M770 768.5h2M771 769.5h3M773 770.5h2M774 771.5h3M786 771.5h2M776 772.5h3M778 773.5h2M779 774.5h3M781 775.5h2M777 794.5h6M775 795.5h2M782 795.5h2M713 796.5h3M743 796.5h2M772 796.5h3M783 796.5h3M715 797.5h4M742 797.5h6M770 797.5h2M785 797.5h3M718 798.5h4M740 798.5h2M747 798.5h5M767 798.5h3M787 798.5h2M721 799.5h3M738 799.5h2M751 799.5h4M764 799.5h3M788 799.5h3M723 800.5h4M736 800.5h2M754 800.5h4M762 800.5h2M790 800.5h2M726 801.5h3M733 801.5h3M757 801.5h5M791 801.5h3M728 802.5h5M759 802.5h2M793 802.5h3M730 803.5h2M795 803.5h2M803 803.5h2M796 804.5h3M801 804.5h2M6.5 43v2M6.5 55v3M6.5 68v1M6.5 565v2M6.5 630v1M6.5 650v1M7.5 53v2M7.5 562v3M7.5 629v1M8.5 47v1M8.5 51v2M8.5 458v1M8.5 560v2M9.5 50v1M9.5 72v1M9.5 457v1M9.5 557v3M10.5 456v1M10.5 555v2M11.5 431v1M11.5 455v1M11.5 552v3M12.5 137v20M12.5 429v1M12.5 433v2M12.5 454v1M12.5 550v2M12.5 626v1M13.5 77v1M13.5 136v1M13.5 158v10M13.5 428v1M13.5 436v2M13.5 453v1M13.5 547v3M14.5 427v1M14.5 439v2M14.5 545v2M15.5 27v1M15.5 426v1M15.5 442v3M15.5 544v1M16.5 425v1M16.5 446v2M16.5 451v1M17.5 82v1M17.5 424v1M17.5 449v1M18.5 374v30M18.5 423v1M19.5 20v5M19.5 238v6M19.5 256v14M19.5 355v9M19.5 405v1M19.5 422v1M19.5 622v1M20.5 15v5M20.5 245v11M20.5 340v15M20.5 365v8M20.5 421v1M21.5 10v5M21.5 228v3M21.5 420v1M22.5 9v1M22.5 106v6M22.5 204v4M22.5 218v10M22.5 232v5M22.5 419v1M23.5 104v2M23.5 113v21M23.5 209v9M23.5 418v1M24.5 170v33M24.5 417v1M24.5 503v28M25.5 416v1M25.5 532v8M26.5 84v3M26.5 415v1M26.5 618v1M27.5 81v3M28.5 78v3M28.5 500v1M29.5 75v3M29.5 285v6M29.5 499v1M30.5 48v3M30.5 72v3M30.5 98v5M30.5 273v12M30.5 292v13M30.5 498v1M31.5 42v6M31.5 69v3M31.5 95v3M31.5 595v2M32.5 37v5M32.5 66v3M32.5 591v2M32.5 598v1M33.5 55v1M33.5 63v3M33.5 496v1M33.5 589v2M33.5 600v2M33.5 614v1M34.5 35v1M34.5 60v3M34.5 136v1M34.5 169v1M34.5 238v1M34.5 272v1M34.5 340v1M34.5 407v1M34.5 495v1M34.5 588v1M34.5 603v1M35.5 34v1M35.5 59v1M35.5 204v1M35.5 306v1M35.5 373v1M35.5 494v1M35.5 586v2M35.5 605v2M36.5 33v1M36.5 584v2M36.5 608v1M37.5 32v1M37.5 583v1M37.5 610v1M38.5 31v1M38.5 489v3M38.5 581v2M38.5 692v1M38.5 695v5M39.5 6v1M39.5 30v1M39.5 486v3M39.5 579v2M39.5 665v19M39.5 690v2M39.5 701v5M40.5 8v14M40.5 29v1M40.5 482v4M40.5 578v1M40.5 663v1M40.5 685v4M41.5 23v5M41.5 239v11M41.5 256v17M41.5 479v3M41.5 576v2M42.5 251v5M42.5 476v3M42.5 574v2M43.5 410v4M43.5 472v4M43.5 572v2M43.5 661v1M44.5 469v3M44.5 571v1M44.5 579v10M44.5 660v1M45.5 138v32M45.5 466v3M45.5 548v7M45.5 569v1M45.5 572v6M45.5 590v3M45.5 659v1M46.5 556v11M46.5 571v1M46.5 658v1M47.5 569v1M48.5 653v4M49.5 307v1M49.5 315v25M49.5 368v7M49.5 461v3M49.5 565v2M49.5 650v3M50.5 309v6M50.5 341v27M50.5 459v2M50.5 563v2M50.5 647v3M51.5 456v3M51.5 561v2M51.5 643v4M52.5 453v3M52.5 559v2M52.5 640v3M53.5 450v3M53.5 556v3M53.5 637v3M54.5 34v2M54.5 210v11M54.5 236v3M54.5 447v3M54.5 554v2M54.5 633v4M55.5 31v1M55.5 37v1M55.5 205v5M55.5 222v14M55.5 445v2M55.5 552v2M55.5 630v3M56.5 30v1M56.5 39v2M56.5 59v1M56.5 61v1M56.5 104v17M56.5 135v1M56.5 442v3M56.5 549v3M56.5 626v4M57.5 29v1M57.5 42v2M57.5 58v1M57.5 63v2M57.5 101v2M57.5 122v13M57.5 172v30M57.5 439v3M57.5 542v1M57.5 547v2M57.5 621v5M58.5 28v1M58.5 45v1M58.5 57v1M58.5 66v2M58.5 203v1M58.5 437v2M58.5 540v2M58.5 545v2M59.5 27v1M59.5 47v1M59.5 55v2M59.5 69v3M59.5 99v1M59.5 376v2M59.5 434v3M59.5 537v3M60.5 26v1M60.5 49v2M60.5 53v2M60.5 73v3M60.5 98v1M60.5 379v29M60.5 433v1M60.5 535v2M60.5 541v2M61.5 25v1M61.5 77v7M61.5 533v2M62.5 7v5M62.5 24v1M62.5 85v9M62.5 273v6M62.5 298v8M62.5 531v2M62.5 536v3M62.5 541v3M63.5 13v5M63.5 23v1M63.5 95v1M63.5 280v18M63.5 529v2M63.5 534v2M64.5 19v3M64.5 527v2M64.5 532v2M65.5 525v2M65.5 530v2M66.5 522v3M66.5 528v2M67.5 520v2M67.5 526v2M68.5 518v2M68.5 524v2M68.5 616v1M69.5 206v2M69.5 376v2M69.5 516v2M69.5 522v2M69.5 594v22M70.5 105v2M70.5 138v3M70.5 171v4M70.5 240v3M70.5 274v3M70.5 307v4M70.5 342v3M70.5 379v1M70.5 409v4M70.5 520v2M70.5 545v4M70.5 579v4M71.5 518v2M71.5 584v9M72.5 516v2M72.5 697v9M73.5 694v1M73.5 707v8M74.5 512v1M74.5 716v8M74.5 734v1M75.5 510v2M75.5 725v5M75.5 732v2M76.5 353v26M76.5 509v1M76.5 692v1M77.5 244v12M77.5 346v7M77.5 508v1M77.5 691v1M78.5 257v20M78.5 506v2M78.5 550v34M78.5 690v1M79.5 505v1M79.5 689v1M80.5 414v1M80.5 418v1M80.5 473v1M80.5 476v1M80.5 504v1M80.5 622v3M81.5 420v2M81.5 426v4M81.5 472v1M81.5 478v2M81.5 503v1M81.5 626v3M81.5 665v1M82.5 33v11M82.5 431v9M82.5 471v1M82.5 481v1M82.5 502v1M82.5 630v4M82.5 663v1M82.5 667v2M82.5 687v1M83.5 31v1M83.5 45v8M83.5 89v2M83.5 441v1M83.5 469v2M83.5 483v1M83.5 501v1M83.5 635v3M83.5 661v2M83.5 670v2M83.5 686v1M84.5 54v1M84.5 86v3M84.5 468v1M84.5 485v2M84.5 500v1M84.5 639v4M84.5 659v2M84.5 673v2M84.5 685v1M85.5 83v3M85.5 444v1M85.5 467v1M85.5 488v1M85.5 498v2M85.5 644v4M85.5 658v1M85.5 676v2M85.5 684v1M86.5 29v1M86.5 57v1M86.5 80v3M86.5 163v11M86.5 312v1M86.5 331v14M86.5 465v2M86.5 490v1M86.5 497v1M86.5 649v3M86.5 656v2M86.5 679v2M87.5 28v1M87.5 77v3M87.5 107v34M87.5 142v21M87.5 314v17M87.5 464v1M87.5 492v1M87.5 496v1M87.5 653v1M87.5 655v1M88.5 60v1M88.5 73v4M88.5 460v2M88.5 494v2M89.5 6v8M89.5 68v5M89.5 98v5M89.5 450v1M89.5 455v5M89.5 488v5M90.5 15v6M90.5 26v1M90.5 64v4M90.5 452v3M90.5 485v3M91.5 22v3M91.5 483v2M92.5 516v21M93.5 448v7M93.5 480v2M93.5 538v12M93.5 735v6M94.5 104v3M94.5 176v33M94.5 210v26M94.5 456v10M94.5 479v1M94.5 742v1M95.5 237v7M95.5 477v2M96.5 476v1M96.5 584v9M97.5 474v2M98.5 381v32M98.5 473v1M100.5 594v5M101.5 600v8M102.5 609v5M104.5 105v2M104.5 173v2M104.5 410v3M104.5 445v2M104.5 489v24M104.5 580v3M105.5 30v1M105.5 139v3M105.5 207v2M105.5 241v3M105.5 274v3M105.5 309v3M105.5 343v2M105.5 376v3M105.5 478v3M105.5 482v7M105.5 547v3M106.5 32v3M107.5 36v2M108.5 39v2M109.5 42v3M110.5 46v2M110.5 360v15M110.5 725v1M111.5 49v3M111.5 88v3M111.5 297v11M111.5 343v17M111.5 722v3M112.5 53v3M112.5 85v3M112.5 274v23M112.5 719v3M113.5 57v1M113.5 82v3M113.5 683v5M113.5 690v1M113.5 715v4M114.5 78v4M114.5 679v4M114.5 712v3M115.5 74v4M115.5 139v11M115.5 164v7M115.5 410v18M115.5 675v4M115.5 708v4M116.5 69v5M116.5 151v13M116.5 429v15M116.5 671v4M116.5 705v3M117.5 62v7M117.5 666v5M117.5 701v4M118.5 241v25M118.5 272v1M118.5 662v4M118.5 697v4M119.5 267v5M119.5 658v4M120.5 622v3M120.5 654v4M121.5 620v1M121.5 626v3M121.5 650v4M122.5 106v3M122.5 547v13M122.5 567v13M122.5 619v1M122.5 630v4M122.5 648v2M123.5 104v2M123.5 110v28M123.5 561v6M123.5 618v1M123.5 635v3M123.5 646v1M124.5 224v8M124.5 617v1M124.5 639v3M124.5 645v1M125.5 19v2M125.5 207v17M125.5 233v6M125.5 308v22M125.5 338v4M125.5 581v12M125.5 616v1M125.5 643v1M126.5 14v5M126.5 331v7M126.5 615v1M127.5 10v4M128.5 6v4M129.5 613v1M130.5 101v2M130.5 612v1M131.5 98v3M131.5 475v3M131.5 611v1M132.5 29v1M132.5 445v30M132.5 526v2M132.5 545v1M132.5 610v1M133.5 513v13M133.5 529v16M133.5 609v1M134.5 60v5M135.5 66v5M135.5 745v1M136.5 72v5M136.5 607v1M137.5 35v1M137.5 57v1M137.5 78v5M137.5 376v5M137.5 409v1M137.5 606v1M137.5 746v1M138.5 56v1M138.5 84v4M138.5 187v4M138.5 382v27M138.5 605v1M139.5 53v1M139.5 89v5M139.5 135v3M139.5 170v2M139.5 173v14M139.5 192v11M139.5 237v3M139.5 271v2M139.5 373v2M139.5 475v3M139.5 577v3M139.5 604v1M140.5 39v1M140.5 49v4M140.5 169v1M140.5 270v1M140.5 305v2M140.5 344v28M140.5 407v3M140.5 441v3M140.5 509v3M140.5 542v4M140.5 744v1M141.5 45v4M141.5 343v1M141.5 594v3M142.5 42v3M142.5 598v4M143.5 742v1M146.5 740v1M147.5 277v19M147.5 475v33M147.5 690v4M148.5 154v2M148.5 235v1M148.5 271v6M148.5 297v7M148.5 665v25M149.5 135v19M149.5 157v9M149.5 421v14M149.5 654v11M149.5 738v1M150.5 167v1M150.5 407v14M150.5 436v4M150.5 721v1M151.5 233v1M151.5 698v23M152.5 96v8M152.5 118v15M152.5 232v1M152.5 441v8M152.5 466v8M153.5 36v1M153.5 105v13M153.5 230v2M153.5 450v16M154.5 26v9M154.5 229v1M154.5 254v16M155.5 13v13M155.5 227v2M155.5 238v16M156.5 8v5M156.5 226v1M157.5 205v2M157.5 224v1M158.5 200v2M158.5 208v4M158.5 223v1M159.5 197v3M159.5 213v4M159.5 221v2M160.5 67v6M160.5 195v2M160.5 202v1M160.5 218v3M161.5 74v8M161.5 194v1M161.5 201v1M162.5 83v10M162.5 192v2M162.5 199v2M162.5 647v3M163.5 191v1M163.5 198v1M163.5 577v6M163.5 592v1M163.5 644v3M164.5 197v1M164.5 584v8M164.5 640v4M165.5 188v2M165.5 196v1M165.5 332v6M165.5 572v4M165.5 637v3M166.5 63v1M166.5 187v1M166.5 195v1M166.5 235v2M166.5 305v27M166.5 543v15M166.5 565v7M166.5 634v3M167.5 186v1M167.5 194v1M167.5 233v2M167.5 559v6M167.5 631v3M168.5 35v1M168.5 184v2M168.5 193v1M168.5 628v3M169.5 61v1M169.5 183v1M169.5 625v3M170.5 35v1M170.5 38v4M170.5 182v1M170.5 623v2M171.5 34v1M171.5 43v3M171.5 180v2M171.5 373v33M171.5 620v3M172.5 33v1M172.5 47v4M172.5 59v1M172.5 169v3M172.5 179v1M172.5 618v2M172.5 696v1M172.5 699v1M173.5 10v2M173.5 32v1M173.5 52v3M173.5 58v1M173.5 173v2M173.5 177v2M173.5 616v2M173.5 695v1M173.5 701v1M174.5 6v2M174.5 13v3M174.5 30v2M174.5 56v1M174.5 98v3M174.5 135v8M174.5 169v1M174.5 238v6M174.5 272v6M174.5 339v7M174.5 407v7M174.5 509v7M174.5 546v4M174.5 694v1M174.5 703v1M175.5 17v2M175.5 29v1M175.5 102v3M175.5 106v3M175.5 171v1M175.5 174v1M175.5 271v1M175.5 305v7M175.5 373v7M175.5 441v7M175.5 475v7M175.5 543v3M175.5 577v8M175.5 693v1M176.5 20v3M176.5 28v1M176.5 96v1M176.5 692v1M176.5 706v1M177.5 24v2M177.5 27v1M177.5 95v1M177.5 171v1M177.5 517v33M177.5 691v1M177.5 708v1M178.5 169v2M178.5 245v33M178.5 614v1M178.5 621v3M178.5 690v1M179.5 168v1M179.5 612v2M179.5 619v2M179.5 625v4M179.5 689v1M179.5 711v1M180.5 93v1M180.5 167v1M180.5 347v29M180.5 609v3M180.5 616v2M180.5 630v2M180.5 713v1M181.5 92v1M181.5 164v2M181.5 194v11M181.5 377v3M181.5 607v2M181.5 614v1M181.5 715v1M182.5 144v20M182.5 192v1M182.5 206v15M182.5 604v3M182.5 612v2M182.5 666v13M182.5 749v7M183.5 165v1M183.5 191v1M183.5 222v4M183.5 608v4M183.5 635v1M183.5 662v4M183.5 718v1M183.5 742v7M184.5 164v1M184.5 190v1M184.5 604v4M184.5 720v1M184.5 740v1M185.5 88v2M185.5 189v1M185.5 415v9M185.5 597v2M185.5 739v1M186.5 85v3M186.5 188v1M186.5 425v23M186.5 594v2M186.5 723v1M186.5 738v1M187.5 83v2M187.5 149v2M187.5 162v1M187.5 164v23M187.5 640v2M187.5 725v1M187.5 737v1M188.5 81v2M188.5 145v4M188.5 152v3M188.5 643v3M188.5 736v1M189.5 79v2M189.5 143v2M189.5 156v1M189.5 238v6M189.5 647v3M189.5 728v1M189.5 735v1M190.5 76v3M190.5 139v3M190.5 159v2M190.5 651v1M190.5 734v1M191.5 30v1M191.5 74v2M191.5 137v2M191.5 483v31M191.5 654v1M191.5 731v1M191.5 733v1M192.5 32v1M192.5 71v3M192.5 121v11M192.5 134v3M192.5 289v23M192.5 515v2M192.5 656v1M193.5 28v1M193.5 34v2M193.5 68v3M193.5 109v12M193.5 234v3M193.5 279v10M193.5 476v6M193.5 659v2M194.5 27v1M194.5 37v1M194.5 67v1M194.5 130v2M194.5 231v1M194.5 450v26M194.5 662v1M195.5 26v1M195.5 39v2M195.5 65v1M195.5 127v3M195.5 664v1M196.5 42v1M196.5 125v2M197.5 44v2M197.5 63v1M197.5 124v1M197.5 620v32M198.5 24v1M198.5 47v1M198.5 62v1M198.5 121v2M198.5 688v31M198.5 733v21M198.5 755v2M199.5 49v1M199.5 119v2M199.5 228v1M199.5 586v33M200.5 6v1M200.5 51v2M200.5 60v1M200.5 117v2M200.5 124v3M201.5 22v1M201.5 54v1M201.5 59v1M201.5 115v2M201.5 128v3M202.5 56v1M202.5 58v1M202.5 113v2M202.5 132v4M202.5 226v1M203.5 111v2M203.5 137v3M203.5 755v2M204.5 11v1M204.5 109v2M204.5 141v4M205.5 14v6M205.5 146v4M205.5 224v1M205.5 313v33M205.5 551v34M206.5 151v2M208.5 117v3M209.5 115v2M209.5 238v1M209.5 267v11M209.5 301v11M209.5 335v11M209.5 437v11M209.5 471v6M209.5 540v10M209.5 607v12M209.5 679v7M209.5 709v3M209.5 752v2M210.5 112v3M210.5 155v1M210.5 221v1M210.5 245v21M210.5 352v9M210.5 369v11M210.5 404v10M210.5 478v5M210.5 506v10M210.5 573v12M210.5 641v11M210.5 676v3M210.5 744v8M211.5 110v2M211.5 157v2M211.5 191v4M211.5 238v1M211.5 335v17M211.5 362v6M212.5 108v2M212.5 160v3M212.5 196v6M212.5 390v11M213.5 106v2M213.5 164v2M213.5 189v1M213.5 203v7M213.5 369v21M213.5 402v1M213.5 678v30M214.5 104v2M214.5 167v3M214.5 188v1M214.5 211v6M214.5 676v2M215.5 102v2M215.5 171v2M215.5 187v1M216.5 32v4M216.5 100v2M216.5 174v3M216.5 186v1M216.5 505v34M217.5 37v4M217.5 98v2M217.5 178v3M218.5 42v3M218.5 96v2M218.5 182v2M218.5 447v23M218.5 641v12M219.5 46v4M219.5 94v2M219.5 437v10M219.5 673v2M220.5 51v4M220.5 58v1M220.5 92v2M220.5 236v1M221.5 60v2M221.5 235v1M222.5 63v3M222.5 234v1M223.5 6v1M223.5 67v3M223.5 233v1M223.5 404v12M223.5 431v5M224.5 71v5M224.5 232v1M224.5 417v14M225.5 77v9M225.5 89v1M225.5 231v1M225.5 267v33M226.5 87v1M226.5 230v1M227.5 501v4M228.5 224v5M228.5 230v1M228.5 471v30M229.5 29v2M229.5 232v2M229.5 573v33M230.5 26v3M230.5 235v2M231.5 24v2M232.5 21v3M232.5 607v24M233.5 6v3M233.5 18v3M233.5 36v1M233.5 141v4M233.5 632v8M234.5 15v3M234.5 136v5M234.5 147v1M235.5 13v2M235.5 133v3M235.5 149v1M236.5 132v1M236.5 752v5M237.5 130v1M237.5 152v1M237.5 336v20M237.5 363v5M238.5 154v1M238.5 357v6M238.5 539v20M239.5 156v1M239.5 560v12M240.5 128v1M241.5 127v1M241.5 159v1M242.5 46v1M242.5 126v1M242.5 161v1M242.5 301v33M243.5 50v1M244.5 49v1M244.5 164v1M244.5 188v7M245.5 47v1M245.5 55v3M245.5 86v5M245.5 92v9M245.5 124v1M245.5 166v1M245.5 183v3M245.5 196v21M245.5 218v1M245.5 506v2M245.5 520v18M246.5 15v1M246.5 45v2M246.5 59v27M246.5 102v21M246.5 169v14M246.5 220v1M246.5 369v17M246.5 509v11M247.5 13v1M247.5 17v2M247.5 44v1M247.5 222v1M247.5 387v15M248.5 12v1M248.5 20v1M248.5 42v2M248.5 224v1M248.5 642v7M249.5 11v1M249.5 22v2M249.5 41v1M249.5 226v1M250.5 10v1M250.5 25v1M250.5 39v2M250.5 228v1M251.5 8v2M251.5 27v1M251.5 38v1M251.5 230v2M252.5 7v1M252.5 29v2M252.5 36v2M252.5 233v1M253.5 6v1M253.5 32v1M253.5 34v2M253.5 235v2M253.5 238v23M254.5 262v4M257.5 404v32M259.5 437v33M260.5 574v33M261.5 87v1M262.5 82v5M262.5 128v22M262.5 295v6M263.5 77v5M263.5 151v6M263.5 268v27M264.5 72v5M264.5 158v3M265.5 66v6M271.5 62v1M272.5 32v2M272.5 36v2M272.5 124v2M272.5 471v4M272.5 489v16M273.5 31v1M273.5 39v2M273.5 122v2M273.5 476v13M274.5 30v1M274.5 42v1M274.5 60v1M274.5 121v1M275.5 29v1M275.5 44v2M275.5 119v2M276.5 28v1M276.5 47v1M276.5 116v3M277.5 27v1M277.5 49v2M277.5 58v1M277.5 114v2M277.5 609v32M278.5 26v1M278.5 52v1M278.5 57v1M278.5 112v2M278.5 192v1M278.5 195v2M279.5 25v1M279.5 54v2M279.5 110v2M279.5 191v1M279.5 198v2M279.5 238v6M279.5 336v6M279.5 404v10M279.5 438v10M279.5 471v1M279.5 504v1M279.5 506v9M279.5 577v6M279.5 609v9M279.5 645v6M280.5 8v16M280.5 108v2M280.5 189v2M280.5 201v2M280.5 268v10M280.5 302v10M280.5 343v3M280.5 347v21M280.5 473v9M280.5 539v11M280.5 551v22M280.5 642v3M281.5 106v2M281.5 188v1M281.5 204v2M282.5 103v3M282.5 181v5M282.5 187v1M282.5 207v3M283.5 6v1M283.5 101v2M283.5 172v9M283.5 211v3M283.5 221v1M283.5 605v13M284.5 98v3M284.5 167v5M284.5 215v3M284.5 219v1M284.5 223v6M284.5 329v14M284.5 415v33M284.5 585v20M285.5 96v2M285.5 230v5M285.5 313v16M285.5 344v1M286.5 93v3M287.5 164v1M287.5 253v3M288.5 89v3M288.5 245v8M288.5 257v21M289.5 80v9M289.5 412v2M290.5 72v8M290.5 162v1M290.5 381v31M290.5 517v33M291.5 66v6M292.5 58v1M292.5 61v5M293.5 56v2M293.5 160v1M294.5 54v2M295.5 51v3M296.5 49v2M297.5 47v2M297.5 238v6M297.5 459v22M298.5 45v2M298.5 157v1M298.5 449v10M299.5 43v2M300.5 41v2M301.5 39v2M302.5 36v3M302.5 139v1M303.5 34v2M303.5 141v4M304.5 137v1M304.5 146v7M305.5 136v1M306.5 7v3M306.5 134v2M307.5 11v5M307.5 133v1M308.5 17v3M308.5 132v1M308.5 212v1M309.5 21v4M309.5 103v6M309.5 130v2M309.5 210v2M310.5 26v4M310.5 110v9M310.5 129v1M310.5 208v2M310.5 215v1M310.5 486v19M311.5 120v7M311.5 128v1M311.5 206v2M311.5 483v3M311.5 506v10M312.5 204v2M312.5 347v2M312.5 377v3M313.5 202v2M313.5 350v27M314.5 184v7M314.5 200v2M314.5 238v6M314.5 304v8M314.5 336v10M314.5 377v3M314.5 413v1M314.5 540v11M314.5 609v8M314.5 619v4M315.5 171v13M315.5 194v1M315.5 198v2M315.5 279v4M315.5 302v2M315.5 370v7M315.5 404v9M315.5 438v10M315.5 472v10M315.5 506v10M315.5 574v10M315.5 607v1M316.5 165v6M316.5 196v1M316.5 222v1M316.5 284v17M317.5 98v1M317.5 530v9M318.5 225v6M318.5 506v24M319.5 232v5M320.5 83v13M320.5 238v8M321.5 73v10M321.5 247v20M322.5 33v2M322.5 63v10M323.5 30v2M323.5 36v9M323.5 60v3M323.5 307v28M323.5 540v16M324.5 27v3M324.5 46v9M324.5 303v4M324.5 557v16M325.5 24v3M325.5 56v2M325.5 576v32M326.5 20v4M326.5 413v17M326.5 574v2M327.5 17v3M327.5 404v9M327.5 431v6M328.5 14v3M329.5 10v4M329.5 438v3M329.5 467v4M330.5 9v1M330.5 442v25M331.5 134v1M332.5 132v1M332.5 136v3M333.5 130v2M333.5 140v3M333.5 389v11M334.5 98v2M334.5 128v2M334.5 144v4M334.5 370v19M334.5 401v2M335.5 101v5M335.5 127v1M335.5 149v3M335.5 236v1M336.5 96v1M336.5 107v3M336.5 125v2M336.5 153v3M337.5 111v4M337.5 124v1M337.5 157v2M337.5 203v2M338.5 62v1M338.5 116v4M338.5 123v1M338.5 160v3M338.5 200v1M338.5 206v2M339.5 121v1M339.5 209v2M340.5 65v1M340.5 164v3M340.5 212v2M341.5 168v4M341.5 198v1M341.5 215v2M342.5 68v1M342.5 173v5M342.5 197v1M342.5 218v3M343.5 179v5M344.5 57v1M344.5 71v1M344.5 185v8M344.5 234v3M345.5 194v1M345.5 231v3M345.5 363v6M346.5 74v1M346.5 227v4M346.5 337v26M346.5 402v1M347.5 55v1M347.5 225v2M348.5 77v1M349.5 238v4M349.5 268v1M349.5 290v9M349.5 370v8M349.5 404v8M349.5 540v8M349.5 574v8M349.5 642v8M350.5 53v1M350.5 270v6M350.5 277v13M350.5 300v1M350.5 304v6M350.5 336v8M350.5 438v7M350.5 472v7M350.5 481v24M350.5 507v7M350.5 609v7M351.5 81v1M351.5 323v5M352.5 30v1M352.5 33v4M352.5 311v12M352.5 329v15M352.5 515v33M353.5 9v19M353.5 29v1M353.5 38v4M353.5 51v1M354.5 43v4M354.5 50v1M354.5 583v33M354.5 617v26M355.5 48v1M355.5 86v1M355.5 449v31M355.5 644v6M356.5 157v3M356.5 446v3M357.5 147v10M357.5 243v14M357.5 270v6M358.5 140v7M358.5 258v12M359.5 135v5M360.5 130v5M362.5 128v1M363.5 126v1M363.5 413v18M364.5 120v6M364.5 378v34M364.5 432v13M365.5 114v6M366.5 107v7M366.5 549v33M367.5 98v9M368.5 88v10M369.5 79v8M370.5 65v14M370.5 196v1M370.5 198v17M371.5 58v7M371.5 194v2M371.5 216v6M372.5 193v1M372.5 223v12M373.5 56v1M373.5 191v2M373.5 236v1M373.5 238v4M374.5 171v19M375.5 53v2M376.5 52v1M376.5 591v13M377.5 50v2M377.5 169v1M377.5 584v7M377.5 605v11M378.5 48v2M378.5 344v34M378.5 491v21M379.5 46v2M379.5 243v12M379.5 481v10M379.5 513v1M380.5 45v1M380.5 167v1M380.5 256v20M381.5 43v2M382.5 41v2M383.5 39v2M384.5 37v2M384.5 238v4M384.5 406v6M384.5 440v6M384.5 507v6M384.5 542v6M384.5 580v2M385.5 36v1M385.5 270v6M385.5 304v6M385.5 338v5M385.5 372v6M385.5 474v6M385.5 577v3M385.5 609v7M386.5 34v2M387.5 7v14M387.5 32v2M387.5 508v1M388.5 22v4M388.5 30v2M388.5 441v4M388.5 510v31M389.5 162v1M389.5 440v1M389.5 446v27M390.5 131v1M391.5 129v1M391.5 133v8M392.5 127v2M392.5 142v4M392.5 406v33M393.5 125v2M393.5 147v4M394.5 85v4M394.5 123v2M394.5 152v2M394.5 270v1M395.5 69v16M395.5 121v2M395.5 155v3M395.5 272v30M396.5 63v6M396.5 120v1M397.5 118v2M397.5 161v1M397.5 611v21M398.5 61v1M398.5 116v2M398.5 163v1M398.5 194v2M398.5 610v1M398.5 633v1M399.5 60v1M399.5 114v2M399.5 192v1M399.5 197v4M399.5 644v2M400.5 59v1M400.5 112v2M400.5 166v1M400.5 202v4M401.5 58v1M401.5 94v15M401.5 111v1M401.5 168v1M401.5 207v5M402.5 57v1M402.5 170v1M402.5 190v1M402.5 213v4M403.5 189v1M403.5 303v34M404.5 36v20M404.5 173v1M404.5 188v1M404.5 236v1M404.5 338v11M404.5 364v7M405.5 175v1M405.5 187v1M405.5 234v2M405.5 350v14M406.5 34v1M406.5 177v1M406.5 186v1M406.5 232v2M407.5 33v1M407.5 185v1M407.5 230v2M407.5 542v33M408.5 32v1M408.5 180v1M408.5 184v1M408.5 229v1M409.5 31v1M409.5 182v1M409.5 224v3M410.5 30v1M410.5 229v1M410.5 372v4M410.5 393v5M411.5 29v1M411.5 377v16M411.5 399v6M411.5 581v10M412.5 10v18M412.5 576v5M412.5 592v17M414.5 6v2M416.5 219v1M419.5 304v6M419.5 338v7M419.5 372v6M419.5 576v6M419.5 646v1M420.5 76v12M420.5 238v4M420.5 406v6M420.5 441v5M420.5 475v5M420.5 508v7M420.5 541v8M420.5 610v6M421.5 69v7M421.5 216v1M421.5 243v27M423.5 67v1M424.5 66v1M424.5 214v1M424.5 447v33M425.5 65v1M425.5 144v4M425.5 295v13M426.5 64v1M426.5 139v5M426.5 278v17M426.5 309v1M427.5 37v2M427.5 63v1M427.5 134v5M427.5 481v3M428.5 40v17M428.5 131v3M428.5 187v24M428.5 485v29M429.5 58v4M429.5 92v1M429.5 129v1M429.5 185v1M430.5 94v2M430.5 128v1M430.5 184v1M431.5 97v3M431.5 127v1M431.5 183v1M432.5 101v2M432.5 126v1M432.5 182v1M433.5 104v2M433.5 125v1M433.5 181v1M433.5 617v6M433.5 629v9M433.5 648v1M434.5 33v1M434.5 107v2M434.5 124v1M434.5 180v1M434.5 624v5M435.5 29v4M435.5 110v3M435.5 123v1M435.5 179v1M436.5 26v3M436.5 114v1M436.5 122v1M436.5 178v1M436.5 345v33M436.5 532v11M437.5 22v4M437.5 116v2M437.5 121v1M437.5 177v1M437.5 312v32M437.5 413v34M437.5 516v16M437.5 544v4M438.5 19v3M438.5 119v1M438.5 161v1M438.5 176v1M439.5 16v3M439.5 163v12M440.5 13v3M441.5 10v3M441.5 238v4M442.5 9v1M443.5 7v1M443.5 84v3M444.5 80v4M444.5 236v1M444.5 379v33M445.5 77v3M445.5 230v6M446.5 74v3M446.5 226v4M446.5 599v6M447.5 70v4M447.5 223v3M447.5 550v32M447.5 583v16M447.5 606v10M448.5 67v3M448.5 220v3M449.5 64v3M449.5 217v3M450.5 216v1M453.5 61v1M454.5 40v2M454.5 60v1M454.5 265v1M454.5 270v7M454.5 338v2M454.5 406v4M454.5 508v7M454.5 546v3M454.5 576v3M454.5 647v4M455.5 38v1M455.5 43v4M455.5 238v4M455.5 243v22M455.5 267v2M455.5 304v6M455.5 341v3M455.5 372v6M455.5 411v2M455.5 440v6M455.5 474v6M455.5 542v4M455.5 580v2M455.5 610v7M456.5 37v1M456.5 48v5M457.5 9v1M457.5 36v1M457.5 54v3M457.5 149v4M458.5 35v1M458.5 144v5M459.5 12v1M459.5 34v1M459.5 138v6M460.5 14v1M460.5 33v1M460.5 130v8M461.5 16v1M461.5 32v1M461.5 123v7M462.5 31v1M462.5 210v2M462.5 508v8M463.5 19v1M463.5 30v1M463.5 118v4M463.5 208v2M463.5 517v24M464.5 21v1M464.5 29v1M464.5 115v3M464.5 206v2M464.5 440v33M465.5 23v1M465.5 28v1M465.5 112v3M465.5 205v1M465.5 478v12M466.5 25v1M466.5 27v1M466.5 109v3M466.5 203v2M466.5 474v4M466.5 491v16M467.5 106v3M467.5 201v2M468.5 104v2M468.5 199v2M468.5 608v1M469.5 102v2M469.5 197v2M470.5 100v2M470.5 195v2M470.5 598v3M470.5 617v13M470.5 639v4M471.5 98v2M471.5 188v1M471.5 191v1M471.5 193v2M471.5 300v3M471.5 576v22M471.5 602v7M471.5 610v7M471.5 631v8M472.5 96v2M472.5 186v2M472.5 222v15M472.5 270v30M472.5 427v6M473.5 94v2M473.5 183v3M473.5 412v15M473.5 434v5M474.5 64v3M474.5 181v2M474.5 338v33M474.5 405v7M475.5 68v3M475.5 178v3M476.5 60v2M476.5 72v4M476.5 176v2M476.5 305v12M476.5 331v6M477.5 57v3M477.5 77v3M477.5 173v3M477.5 304v1M477.5 318v13M478.5 55v2M478.5 81v3M478.5 170v3M479.5 53v2M479.5 85v2M479.5 167v3M480.5 51v2M480.5 88v2M480.5 164v3M481.5 48v3M482.5 46v2M482.5 162v1M482.5 570v5M483.5 44v2M483.5 137v8M483.5 160v2M483.5 542v28M483.5 644v2M483.5 650v7M483.5 669v4M484.5 41v3M484.5 146v7M484.5 159v1M484.5 647v3M485.5 39v2M485.5 154v4M486.5 36v3M486.5 133v1M486.5 372v33M487.5 10v1M487.5 27v3M487.5 31v1M487.5 34v2M487.5 132v1M487.5 159v1M488.5 24v3M488.5 131v1M488.5 258v8M489.5 20v4M489.5 246v12M489.5 300v3M489.5 334v3M489.5 436v3M489.5 572v3M489.5 674v2M490.5 17v3M490.5 163v1M490.5 238v8M490.5 368v3M490.5 402v3M490.5 471v2M490.5 504v3M490.5 539v2M490.5 606v3M490.5 640v3M491.5 15v2M491.5 129v1M492.5 166v1M492.5 238v3M492.5 436v33M493.5 242v5M494.5 127v1M494.5 248v5M495.5 255v5M496.5 252v1M496.5 261v5M497.5 6v6M497.5 125v1M497.5 172v1M497.5 220v6M497.5 251v1M497.5 267v5M497.5 477v21M498.5 211v9M498.5 250v1M498.5 274v2M498.5 334v9M498.5 365v2M498.5 470v7M498.5 499v4M499.5 60v1M499.5 204v7M499.5 249v1M499.5 277v3M499.5 344v21M500.5 59v1M500.5 64v1M500.5 94v2M500.5 123v1M500.5 199v5M500.5 248v1M500.5 281v4M500.5 504v33M501.5 58v1M501.5 97v1M501.5 231v3M501.5 247v1M501.5 286v3M502.5 57v1M502.5 67v1M502.5 99v3M502.5 235v4M502.5 246v1M502.5 290v4M503.5 56v1M503.5 103v2M503.5 240v4M503.5 245v1M503.5 295v3M504.5 55v1M504.5 106v8M504.5 196v1M504.5 300v2M505.5 54v1M505.5 71v1M505.5 115v5M505.5 181v1M505.5 303v4M506.5 45v2M506.5 53v1M506.5 308v5M506.5 402v1M507.5 48v2M507.5 52v1M507.5 90v1M507.5 194v1M507.5 314v5M507.5 404v31M508.5 14v1M508.5 75v1M508.5 320v5M508.5 572v33M509.5 11v1M509.5 41v1M509.5 326v4M510.5 10v1M510.5 17v1M510.5 192v1M510.5 331v2M510.5 334v2M511.5 79v1M511.5 188v1M511.5 337v5M512.5 39v1M512.5 343v5M512.5 644v8M513.5 8v1M513.5 349v2M513.5 352v1M513.5 640v4M513.5 653v21M514.5 7v1M514.5 22v1M514.5 83v1M514.5 86v1M514.5 356v5M515.5 37v1M515.5 350v1M515.5 362v5M516.5 36v1M516.5 128v13M516.5 349v1M516.5 369v6M516.5 606v2M517.5 126v1M517.5 142v3M517.5 347v2M517.5 376v5M517.5 609v30M518.5 27v1M518.5 146v3M518.5 346v1M518.5 382v6M519.5 34v1M519.5 345v1M519.5 389v1M519.5 391v5M520.5 33v1M520.5 124v1M520.5 343v2M520.5 397v4M521.5 32v1M521.5 123v1M521.5 342v1M521.5 403v5M521.5 436v1M521.5 453v6M522.5 122v1M522.5 259v2M522.5 340v2M522.5 409v5M522.5 438v15M522.5 460v9M523.5 121v1M523.5 257v1M523.5 262v6M523.5 303v4M523.5 339v1M523.5 415v4M524.5 255v2M524.5 269v3M524.5 273v1M524.5 275v1M524.5 308v5M524.5 338v1M524.5 420v5M524.5 538v20M525.5 189v1M525.5 254v1M525.5 277v3M525.5 314v6M525.5 336v2M525.5 361v1M525.5 427v2M525.5 559v12M525.5 674v9M525.5 702v5M526.5 63v13M526.5 119v1M526.5 187v1M526.5 191v3M526.5 253v1M526.5 281v2M526.5 300v1M526.5 321v6M526.5 335v1M526.5 363v1M526.5 430v2M526.5 684v18M527.5 61v1M527.5 77v5M527.5 118v1M527.5 186v1M527.5 195v3M527.5 251v2M527.5 284v2M527.5 299v1M527.5 328v5M527.5 334v1M527.5 365v1M527.5 433v2M528.5 60v1M528.5 83v4M528.5 117v1M528.5 185v1M528.5 199v4M528.5 226v4M528.5 250v1M528.5 287v2M528.5 294v4M528.5 367v1M528.5 436v3M529.5 59v1M529.5 88v4M529.5 116v1M529.5 157v2M529.5 184v1M529.5 204v4M529.5 224v1M529.5 231v5M529.5 249v1M529.5 291v3M529.5 369v1M529.5 440v2M530.5 58v1M530.5 93v5M530.5 115v1M530.5 160v23M530.5 209v3M530.5 237v5M530.5 247v2M530.5 371v1M530.5 443v2M531.5 56v2M531.5 99v5M531.5 114v1M531.5 213v4M531.5 243v2M531.5 246v1M531.5 373v1M531.5 446v2M532.5 54v1M532.5 105v6M532.5 113v1M532.5 218v3M532.5 222v1M532.5 449v2M532.5 555v16M533.5 50v4M533.5 356v1M533.5 376v1M533.5 452v1M533.5 498v3M533.5 502v1M533.5 504v20M533.5 525v12M533.5 538v6M533.5 545v10M533.5 573v3M533.5 581v16M533.5 604v1M534.5 47v3M534.5 378v1M534.5 384v4M534.5 389v1M534.5 454v2M534.5 494v4M534.5 598v6M535.5 44v3M535.5 381v3M535.5 391v1M535.5 457v1M535.5 492v2M535.5 582v2M536.5 40v4M536.5 393v2M536.5 459v2M536.5 491v1M536.5 585v3M537.5 37v3M537.5 396v2M537.5 426v4M537.5 462v1M537.5 470v4M537.5 490v1M537.5 589v3M538.5 28v1M538.5 30v1M538.5 34v3M538.5 399v2M538.5 422v2M538.5 431v4M538.5 465v4M538.5 489v1M538.5 595v2M539.5 25v3M539.5 33v1M539.5 402v2M539.5 436v3M539.5 488v1M539.5 598v3M540.5 22v3M540.5 264v2M540.5 307v1M540.5 349v4M540.5 378v1M540.5 418v1M540.5 425v2M540.5 475v1M540.5 498v2M540.5 520v2M540.5 579v1M540.5 595v1M540.5 602v1M541.5 20v2M541.5 331v1M541.5 405v2M541.5 438v1M541.5 440v1M541.5 473v1M541.5 519v1M542.5 17v3M542.5 408v3M542.5 415v4M542.5 442v2M542.5 462v1M542.5 475v1M542.5 486v1M542.5 606v2M543.5 14v3M543.5 331v1M543.5 412v1M543.5 414v1M543.5 445v2M543.5 461v1M543.5 477v1M543.5 485v1M543.5 609v1M544.5 12v2M544.5 333v5M544.5 448v2M544.5 460v1M544.5 479v1M544.5 484v1M544.5 611v2M545.5 244v1M545.5 329v1M545.5 339v3M545.5 451v2M545.5 459v1M545.5 614v1M546.5 10v1M546.5 242v2M546.5 328v1M546.5 343v3M546.5 454v3M546.5 458v1M546.5 616v1M547.5 240v2M547.5 327v1M547.5 485v1M547.5 618v3M547.5 622v17M547.5 640v25M547.5 666v6M547.5 673v23M547.5 697v9M547.5 707v5M548.5 6v3M548.5 147v1M548.5 239v1M548.5 326v1M548.5 487v1M548.5 493v3M548.5 497v1M549.5 139v8M549.5 237v2M549.5 251v1M549.5 489v1M549.5 491v2M549.5 499v2M549.5 517v11M550.5 79v3M550.5 125v14M550.5 235v2M550.5 316v8M550.5 502v2M550.5 514v2M550.5 529v11M551.5 77v2M551.5 121v4M551.5 233v2M551.5 505v2M551.5 511v3M551.5 541v1M551.5 575v1M552.5 75v2M552.5 231v2M552.5 508v1M552.5 510v1M553.5 72v3M553.5 229v2M553.5 408v1M554.5 69v3M554.5 227v2M555.5 67v2M555.5 118v1M555.5 225v2M555.5 350v3M556.5 64v3M556.5 184v2M556.5 223v2M556.5 354v2M556.5 406v1M556.5 614v3M556.5 618v1M557.5 40v9M557.5 62v2M557.5 182v2M557.5 189v1M557.5 222v1M557.5 357v3M557.5 612v2M558.5 50v8M558.5 60v2M558.5 181v1M558.5 220v1M558.5 259v1M558.5 361v2M558.5 621v1M559.5 112v5M559.5 178v3M559.5 212v8M559.5 261v5M559.5 364v3M559.5 404v1M559.5 565v7M560.5 108v4M560.5 177v1M560.5 204v8M560.5 257v1M560.5 267v3M560.5 368v1M560.5 559v6M560.5 624v1M560.5 702v1M561.5 105v3M561.5 174v3M561.5 196v8M561.5 271v4M561.5 554v5M562.5 102v3M562.5 172v2M562.5 195v1M562.5 276v2M562.5 402v1M562.5 553v1M563.5 98v4M563.5 170v2M563.5 249v5M563.5 279v2M563.5 283v2M563.5 457v1M563.5 483v1M563.5 629v8M563.5 700v1M564.5 95v3M564.5 168v2M564.5 224v1M564.5 239v10M564.5 286v2M564.5 459v2M564.5 608v1M564.5 638v24M564.5 698v2M565.5 94v1M565.5 165v3M565.5 226v1M565.5 229v10M565.5 289v2M565.5 400v1M565.5 432v1M565.5 455v1M565.5 462v3M565.5 697v1M566.5 163v2M566.5 292v3M566.5 431v1M566.5 454v1M566.5 466v2M566.5 696v1M567.5 29v7M567.5 160v3M567.5 296v2M567.5 430v1M567.5 453v1M567.5 469v3M567.5 695v1M568.5 15v14M568.5 159v1M568.5 299v2M568.5 383v15M568.5 429v1M568.5 438v1M568.5 452v1M568.5 473v2M568.5 694v1M569.5 221v1M569.5 302v3M569.5 373v10M569.5 427v2M569.5 451v1M569.5 476v2M569.5 693v1M570.5 426v1M570.5 692v1M571.5 425v1M571.5 691v1M572.5 307v2M572.5 424v1M572.5 443v1M572.5 449v1M572.5 690v1M573.5 310v2M573.5 402v3M573.5 422v2M573.5 448v1M573.5 689v1M574.5 313v1M574.5 406v3M574.5 421v1M574.5 447v1M574.5 481v1M574.5 688v1M575.5 82v11M575.5 315v2M575.5 410v3M575.5 420v1M575.5 483v1M575.5 582v5M575.5 687v1M576.5 72v10M576.5 318v1M576.5 414v3M576.5 419v1M576.5 485v1M576.5 588v4M576.5 686v1M577.5 6v6M577.5 66v6M577.5 320v2M577.5 487v1M577.5 593v4M577.5 685v1M578.5 62v4M578.5 153v3M578.5 323v1M578.5 343v1M578.5 478v1M578.5 489v2M578.5 598v2M578.5 684v1M579.5 53v8M579.5 147v6M579.5 325v1M579.5 337v6M579.5 492v1M579.5 670v4M580.5 43v10M580.5 142v5M580.5 158v1M580.5 327v2M580.5 494v1M580.5 675v7M581.5 41v2M581.5 99v1M581.5 138v4M581.5 330v1M581.5 335v1M581.5 476v1M581.5 496v1M582.5 136v2M582.5 277v1M582.5 332v1M582.5 334v1M582.5 348v1M582.5 369v1M582.5 498v1M582.5 667v1M583.5 39v1M583.5 102v1M583.5 253v1M583.5 273v4M583.5 367v2M583.5 500v2M583.5 666v1M584.5 38v1M584.5 251v2M584.5 269v4M584.5 301v2M584.5 365v2M584.5 474v1M584.5 503v1M585.5 134v1M585.5 249v2M585.5 265v4M585.5 299v2M585.5 364v1M585.5 505v1M585.5 547v1M586.5 106v1M586.5 133v1M586.5 166v2M586.5 247v2M586.5 259v1M586.5 261v4M586.5 298v1M586.5 362v2M586.5 507v2M586.5 544v3M586.5 604v2M586.5 664v1M587.5 36v1M587.5 169v10M587.5 245v2M587.5 296v2M587.5 354v1M587.5 360v2M587.5 472v1M587.5 510v1M587.5 540v4M587.5 607v1M587.5 663v1M588.5 35v1M588.5 109v1M588.5 180v8M588.5 244v1M588.5 295v1M588.5 358v2M588.5 512v2M588.5 535v5M588.5 609v1M589.5 34v1M589.5 131v1M589.5 189v1M589.5 242v2M589.5 293v2M589.5 357v1M589.5 515v2M589.5 530v5M589.5 611v2M590.5 33v1M590.5 112v1M590.5 241v1M590.5 292v1M590.5 470v1M590.5 524v6M590.5 614v1M590.5 661v1M591.5 32v1M591.5 114v1M591.5 290v2M591.5 519v5M591.5 616v1M591.5 660v1M592.5 31v1M592.5 129v1M592.5 193v1M592.5 289v1M592.5 441v5M592.5 618v2M593.5 30v1M593.5 63v1M593.5 117v1M593.5 206v4M593.5 287v2M593.5 436v5M593.5 468v1M593.5 621v2M594.5 20v4M594.5 29v1M594.5 65v1M594.5 119v1M594.5 196v1M594.5 198v8M594.5 211v1M594.5 380v2M594.5 430v6M594.5 572v1M594.5 624v2M594.5 658v1M595.5 18v1M595.5 25v3M595.5 61v1M595.5 67v1M595.5 127v1M595.5 383v5M595.5 426v4M595.5 450v17M595.5 562v10M595.5 627v2M596.5 17v1M596.5 60v1M596.5 122v1M596.5 214v1M596.5 378v1M596.5 389v3M596.5 420v5M596.5 557v5M597.5 15v2M597.5 59v1M597.5 70v1M597.5 322v8M597.5 393v1M597.5 411v9M597.5 632v1M597.5 656v1M598.5 14v1M598.5 58v1M598.5 72v1M598.5 217v1M598.5 316v6M598.5 331v1M598.5 399v12M599.5 12v2M599.5 74v1M599.5 333v1M599.5 376v1M599.5 397v2M600.5 11v1M600.5 126v2M600.5 220v1M600.5 335v1M600.5 636v1M600.5 654v1M601.5 9v2M601.5 56v1M601.5 77v1M601.5 129v1M601.5 337v2M602.5 8v1M602.5 55v1M602.5 79v1M602.5 131v2M602.5 223v1M602.5 313v1M602.5 340v1M602.5 374v1M602.5 639v1M603.5 6v2M603.5 54v1M603.5 81v1M603.5 134v2M603.5 342v2M604.5 53v1M604.5 83v1M604.5 137v1M604.5 229v7M604.5 345v1M604.5 651v1M605.5 52v1M605.5 139v2M605.5 228v1M605.5 347v2M605.5 372v1M605.5 478v4M605.5 643v1M605.5 648v3M606.5 35v3M606.5 51v1M606.5 142v1M606.5 264v5M606.5 350v2M606.5 483v29M606.5 646v2M607.5 39v4M607.5 50v1M607.5 121v1M607.5 144v1M607.5 270v15M607.5 353v1M607.5 368v2M608.5 44v3M608.5 49v1M608.5 146v1M608.5 355v13M608.5 586v5M609.5 32v1M609.5 119v1M609.5 148v1M609.5 261v1M609.5 584v1M609.5 592v4M610.5 31v1M610.5 116v3M610.5 150v2M610.5 260v1M610.5 597v2M611.5 30v1M611.5 113v3M611.5 153v1M611.5 160v1M611.5 259v1M611.5 600v3M612.5 29v1M612.5 109v4M612.5 155v1M612.5 157v2M612.5 162v2M612.5 582v1M612.5 604v2M613.5 28v1M613.5 106v3M613.5 165v3M613.5 254v4M613.5 291v16M614.5 27v1M614.5 103v3M614.5 169v2M614.5 250v4M614.5 395v3M615.5 26v1M615.5 99v4M615.5 172v3M615.5 246v4M615.5 392v3M615.5 580v1M616.5 96v3M616.5 176v2M616.5 390v2M616.5 402v3M616.5 579v1M617.5 93v3M617.5 179v2M617.5 349v3M617.5 387v3M617.5 406v2M617.5 578v1M617.5 664v15M618.5 24v1M618.5 90v3M618.5 182v2M618.5 346v3M618.5 385v2M618.5 409v3M619.5 7v1M619.5 23v1M619.5 185v2M619.5 343v3M619.5 383v2M619.5 413v2M620.5 9v2M620.5 22v1M620.5 190v1M620.5 315v10M620.5 340v3M620.5 381v2M620.5 416v2M620.5 518v6M620.5 548v2M620.5 576v1M621.5 12v1M621.5 21v1M621.5 192v6M621.5 326v4M621.5 331v1M621.5 337v3M621.5 419v3M621.5 525v14M621.5 545v2M621.5 551v21M621.5 575v1M622.5 14v2M622.5 199v5M622.5 333v1M622.5 335v2M622.5 447v1M622.5 540v4M622.5 573v1M622.5 638v1M623.5 17v1M623.5 205v4M623.5 449v1M624.5 210v4M624.5 451v1M625.5 215v7M625.5 441v1M626.5 284v1M626.5 438v3M626.5 454v1M626.5 633v2M627.5 56v29M627.5 283v1M627.5 286v1M627.5 360v1M627.5 436v2M627.5 456v1M627.5 619v14M628.5 53v1M628.5 282v1M628.5 362v1M628.5 433v3M628.5 458v1M629.5 51v2M629.5 280v2M629.5 364v1M629.5 430v3M629.5 460v1M630.5 50v1M630.5 129v22M630.5 279v1M630.5 366v1M630.5 429v1M630.5 462v1M631.5 49v1M631.5 278v1M631.5 291v1M631.5 368v1M631.5 464v1M632.5 48v1M632.5 277v1M632.5 356v1M632.5 370v1M632.5 466v1M633.5 46v1M633.5 275v2M633.5 372v1M633.5 468v2M633.5 615v1M634.5 21v1M634.5 24v1M634.5 43v3M634.5 274v1M634.5 295v1M634.5 374v1M634.5 471v1M634.5 614v1M635.5 20v1M635.5 26v1M635.5 40v3M635.5 271v1M635.5 422v4M635.5 613v1M636.5 18v2M636.5 28v2M636.5 38v2M636.5 229v13M636.5 266v5M636.5 418v4M636.5 612v1M637.5 16v2M637.5 31v1M637.5 35v3M637.5 264v1M637.5 299v1M637.5 415v3M637.5 690v1M638.5 15v1M638.5 34v1M638.5 263v1M638.5 411v4M638.5 689v1M639.5 14v1M639.5 227v1M639.5 261v2M639.5 408v3M639.5 580v10M639.5 610v1M639.5 688v1M640.5 12v2M640.5 226v1M640.5 260v1M640.5 303v1M640.5 336v3M640.5 405v3M640.5 591v9M640.5 609v1M641.5 10v2M641.5 225v1M641.5 259v1M641.5 334v1M641.5 340v2M641.5 402v3M641.5 578v1M641.5 601v6M641.5 608v1M641.5 680v7M642.5 9v1M642.5 224v1M642.5 247v1M642.5 258v1M642.5 333v1M642.5 343v1M642.5 394v5M642.5 400v2M642.5 577v1M642.5 674v6M643.5 8v1M643.5 249v2M643.5 257v1M643.5 307v1M643.5 331v2M643.5 345v2M643.5 381v13M643.5 507v3M643.5 576v1M643.5 668v6M644.5 7v1M644.5 252v1M644.5 256v1M644.5 330v1M644.5 348v1M644.5 503v4M644.5 663v5M645.5 222v1M645.5 243v1M645.5 254v1M645.5 329v1M645.5 497v6M645.5 643v5M646.5 221v1M646.5 311v1M646.5 328v1M646.5 491v6M646.5 537v11M646.5 574v1M646.5 608v1M646.5 649v7M646.5 661v1M647.5 220v1M647.5 313v11M647.5 327v1M647.5 486v5M647.5 527v10M647.5 550v1M647.5 573v1M647.5 610v1M647.5 640v2M647.5 657v2M648.5 190v1M648.5 193v3M648.5 219v1M648.5 241v1M648.5 325v1M648.5 481v5M648.5 520v7M648.5 572v1M648.5 612v1M648.5 639v1M649.5 92v19M649.5 189v1M649.5 197v3M649.5 218v1M649.5 311v1M649.5 516v4M649.5 553v1M649.5 570v1M649.5 638v1M650.5 88v4M650.5 112v9M650.5 188v1M650.5 201v3M650.5 216v2M650.5 563v7M650.5 615v1M650.5 636v2M651.5 164v6M651.5 187v1M651.5 205v2M651.5 215v1M651.5 239v1M651.5 306v4M651.5 557v6M651.5 617v1M651.5 635v1M652.5 171v7M652.5 208v3M652.5 238v1M652.5 301v5M652.5 619v2M652.5 634v1M653.5 179v4M653.5 212v2M653.5 296v5M653.5 622v1M653.5 632v2M654.5 85v1M654.5 184v1M654.5 291v5M654.5 624v1M654.5 631v1M655.5 236v1M655.5 288v3M655.5 626v2M655.5 629v2M656.5 217v1M656.5 235v1M656.5 371v4M657.5 83v1M657.5 366v5M657.5 720v1M658.5 280v5M658.5 361v5M659.5 74v8M659.5 159v1M659.5 221v1M659.5 233v1M659.5 272v8M659.5 357v4M659.5 425v2M659.5 429v3M660.5 64v10M660.5 232v1M660.5 264v8M660.5 423v2M660.5 433v2M660.5 472v3M660.5 718v1M661.5 37v1M661.5 58v1M661.5 60v4M661.5 231v1M661.5 258v6M661.5 421v2M661.5 436v2M661.5 469v3M661.5 717v1M662.5 14v3M662.5 35v1M662.5 39v3M662.5 56v2M662.5 225v1M662.5 419v2M662.5 439v1M662.5 465v4M663.5 18v4M663.5 34v1M663.5 43v2M663.5 54v2M663.5 228v2M663.5 418v1M663.5 441v2M663.5 460v5M664.5 23v5M664.5 33v1M664.5 46v2M664.5 52v2M664.5 156v1M664.5 231v3M664.5 413v3M664.5 417v1M664.5 444v2M664.5 458v2M664.5 715v1M665.5 12v1M665.5 29v2M665.5 32v1M665.5 49v1M665.5 51v1M665.5 155v1M665.5 235v3M665.5 255v1M665.5 406v7M665.5 447v1M665.5 455v2M665.5 701v10M666.5 239v3M666.5 253v2M666.5 405v1M666.5 449v2M666.5 453v2M666.5 699v1M666.5 712v2M667.5 243v4M667.5 251v2M667.5 348v6M667.5 403v1M667.5 697v2M668.5 153v1M668.5 248v1M668.5 250v1M668.5 333v2M668.5 336v1M668.5 343v5M668.5 402v1M668.5 696v1M669.5 10v1M669.5 152v1M669.5 331v2M669.5 339v4M669.5 383v2M669.5 401v1M669.5 694v2M670.5 151v1M670.5 329v2M670.5 386v5M670.5 400v1M670.5 693v1M671.5 150v1M671.5 327v2M671.5 392v6M671.5 399v1M671.5 691v2M672.5 149v1M672.5 325v2M672.5 623v1M672.5 625v2M672.5 690v1M673.5 148v1M673.5 323v2M673.5 518v1M673.5 543v9M673.5 587v2M673.5 621v2M673.5 628v1M673.5 688v2M674.5 135v3M674.5 140v1M674.5 143v4M674.5 321v2M674.5 515v2M674.5 520v1M674.5 539v4M674.5 590v8M674.5 599v1M674.5 620v1M674.5 630v1M674.5 687v1M675.5 129v6M675.5 142v1M675.5 148v1M675.5 319v2M675.5 362v1M675.5 513v2M675.5 536v3M675.5 585v1M675.5 601v17M675.5 619v1M675.5 632v2M675.5 686v1M676.5 124v5M676.5 186v1M676.5 316v3M676.5 511v2M676.5 523v1M676.5 533v3M676.5 584v1M676.5 635v1M676.5 684v2M677.5 118v6M677.5 185v1M677.5 314v2M677.5 509v2M677.5 525v1M677.5 529v4M677.5 583v1M677.5 637v1M677.5 682v2M678.5 114v4M678.5 152v1M678.5 184v1M678.5 278v10M678.5 507v2M678.5 528v1M678.5 582v1M678.5 639v1M678.5 681v1M679.5 109v5M679.5 182v2M679.5 270v8M679.5 290v5M679.5 504v3M679.5 581v1M679.5 641v2M679.5 679v2M680.5 106v3M680.5 181v1M680.5 296v5M680.5 502v2M680.5 580v1M680.5 644v1M680.5 664v3M680.5 678v1M681.5 102v4M681.5 180v1M681.5 302v5M681.5 311v1M681.5 499v3M681.5 579v1M681.5 646v1M681.5 662v1M681.5 668v8M682.5 55v3M682.5 99v3M682.5 157v1M682.5 178v2M682.5 268v1M682.5 308v2M682.5 496v3M682.5 578v1M682.5 648v1M682.5 660v2M682.5 755v1M683.5 53v1M683.5 59v3M683.5 95v4M683.5 177v1M683.5 245v22M683.5 371v1M683.5 493v3M683.5 577v1M683.5 650v2M683.5 658v2M683.5 724v7M684.5 63v5M684.5 92v3M684.5 175v2M684.5 239v4M684.5 653v1M684.5 657v1M684.5 732v13M684.5 758v1M685.5 69v5M685.5 90v2M685.5 174v1M685.5 235v4M685.5 656v1M685.5 746v10M686.5 51v1M686.5 75v5M686.5 173v1M686.5 195v4M686.5 231v4M686.5 396v17M686.5 452v2M686.5 575v1M687.5 33v10M687.5 81v6M687.5 171v2M687.5 200v5M687.5 227v4M687.5 394v1M687.5 414v2M687.5 450v1M687.5 455v2M687.5 574v1M688.5 44v6M688.5 88v1M688.5 169v2M688.5 206v7M688.5 224v3M688.5 422v17M688.5 449v1M688.5 458v3M688.5 573v1M689.5 168v1M689.5 214v4M689.5 221v3M689.5 418v4M689.5 440v7M689.5 448v1M689.5 462v2M689.5 572v1M690.5 167v1M690.5 220v1M690.5 465v3M691.5 389v3M691.5 469v4M691.5 562v2M692.5 385v4M692.5 474v3M692.5 565v2M692.5 570v1M693.5 15v14M693.5 251v1M693.5 380v5M693.5 478v4M693.5 568v1M694.5 6v9M694.5 379v1M694.5 483v3M695.5 376v1M695.5 487v2M696.5 316v3M696.5 373v3M697.5 313v1M697.5 320v3M697.5 370v3M697.5 447v1M698.5 312v1M698.5 324v3M698.5 368v2M698.5 491v1M699.5 133v1M699.5 135v1M699.5 257v2M699.5 328v3M699.5 350v3M699.5 354v2M699.5 365v3M699.5 493v2M700.5 132v1M700.5 137v1M700.5 253v3M700.5 260v5M700.5 332v3M700.5 346v4M700.5 357v1M700.5 362v3M700.5 496v2M701.5 93v34M701.5 130v2M701.5 139v2M701.5 249v4M701.5 266v1M701.5 268v3M701.5 272v14M701.5 310v1M701.5 342v4M701.5 359v1M701.5 361v1M701.5 499v2M701.5 597v1M702.5 89v3M702.5 128v1M702.5 142v1M702.5 245v4M702.5 287v1M702.5 337v5M702.5 502v2M702.5 594v3M702.5 646v3M702.5 717v2M703.5 82v7M703.5 144v1M703.5 241v4M703.5 289v4M703.5 406v6M703.5 505v1M703.5 592v2M703.5 642v4M703.5 714v3M703.5 753v5M704.5 74v8M704.5 146v1M704.5 238v3M704.5 294v4M704.5 308v1M704.5 403v3M704.5 507v2M704.5 590v2M704.5 603v1M704.5 639v3M704.5 712v2M704.5 745v8M705.5 68v6M705.5 148v1M705.5 235v3M705.5 299v4M705.5 307v1M705.5 510v1M705.5 587v3M705.5 636v3M705.5 709v3M705.5 740v5M706.5 62v6M706.5 232v3M706.5 304v2M706.5 512v2M706.5 554v1M706.5 585v2M706.5 632v4M706.5 705v4M706.5 735v5M706.5 761v12M707.5 61v1M707.5 151v1M707.5 229v3M707.5 515v1M707.5 583v2M707.5 607v1M707.5 628v4M707.5 702v3M707.5 731v4M707.5 773v2M708.5 59v1M708.5 153v1M708.5 226v3M708.5 485v1M708.5 517v1M708.5 581v2M708.5 625v3M708.5 697v5M708.5 727v4M709.5 58v1M709.5 155v1M709.5 223v3M709.5 519v1M709.5 525v1M709.5 579v2M709.5 610v1M709.5 624v1M710.5 57v1M710.5 157v1M710.5 521v1M710.5 523v1M710.5 527v5M710.5 612v10M711.5 38v8M711.5 56v1M711.5 533v6M711.5 551v1M712.5 36v1M712.5 47v7M712.5 55v1M712.5 160v1M712.5 219v1M712.5 398v1M712.5 540v10M713.5 35v1M713.5 217v1M713.5 381v16M713.5 444v4M713.5 449v1M713.5 795v1M714.5 34v1M714.5 215v2M714.5 225v1M714.5 439v5M714.5 451v2M714.5 482v1M714.5 609v1M715.5 33v1M715.5 212v3M715.5 227v1M715.5 307v1M715.5 435v4M715.5 454v4M715.5 608v1M716.5 210v2M716.5 305v1M716.5 309v2M716.5 432v3M716.5 459v4M717.5 208v2M717.5 230v1M717.5 304v1M717.5 312v1M717.5 428v4M717.5 464v4M718.5 31v1M718.5 177v8M718.5 205v3M718.5 303v1M718.5 314v2M718.5 426v2M718.5 469v4M718.5 606v1M719.5 30v1M719.5 168v9M719.5 187v1M719.5 202v3M719.5 233v1M719.5 317v1M719.5 423v3M719.5 474v4M719.5 552v3M720.5 29v1M720.5 166v2M720.5 189v1M720.5 199v3M720.5 235v1M720.5 319v2M720.5 333v2M720.5 556v2M720.5 682v9M721.5 28v1M721.5 191v1M721.5 196v3M721.5 237v1M721.5 297v4M721.5 322v2M721.5 330v2M721.5 336v2M721.5 559v3M721.5 604v1M721.5 674v8M722.5 13v3M722.5 27v1M722.5 164v1M722.5 195v1M722.5 294v3M722.5 325v2M722.5 329v1M722.5 339v2M722.5 373v3M722.5 563v4M722.5 668v6M723.5 11v1M723.5 17v3M723.5 240v1M723.5 292v2M723.5 328v1M723.5 342v3M723.5 370v3M723.5 568v3M723.5 663v5M724.5 21v3M724.5 242v1M724.5 289v3M724.5 346v3M724.5 366v4M724.5 572v4M724.5 602v1M724.5 660v3M725.5 162v1M725.5 244v1M725.5 268v2M725.5 287v2M725.5 326v1M725.5 350v3M725.5 361v5M725.5 547v1M725.5 601v1M726.5 9v1M726.5 159v2M726.5 266v1M726.5 271v3M726.5 354v1M726.5 357v4M727.5 8v1M727.5 156v3M727.5 247v1M727.5 265v1M727.5 275v3M727.5 284v1M727.5 356v1M728.5 99v2M728.5 152v4M728.5 249v1M728.5 264v1M728.5 279v3M728.5 283v1M728.5 324v1M728.5 599v1M729.5 102v3M729.5 149v3M729.5 263v1M729.5 597v1M730.5 6v1M730.5 106v2M730.5 145v4M730.5 253v6M730.5 262v1M730.5 588v9M730.5 599v1M731.5 96v1M731.5 109v2M731.5 141v4M731.5 260v1M731.5 322v1M731.5 582v6M731.5 601v1M731.5 804v2M732.5 112v1M732.5 135v6M732.5 251v1M732.5 510v5M732.5 580v2M732.5 603v1M733.5 91v3M733.5 114v2M733.5 131v4M733.5 250v1M733.5 503v7M734.5 83v8M734.5 117v1M734.5 129v1M734.5 249v1M734.5 488v15M734.5 606v1M735.5 76v7M735.5 119v1M735.5 248v1M735.5 485v3M735.5 608v1M736.5 69v7M736.5 121v1M736.5 247v1M736.5 319v1M736.5 397v2M736.5 400v9M736.5 610v1M737.5 62v7M737.5 123v1M737.5 127v1M737.5 246v1M737.5 390v7M737.5 410v8M737.5 701v22M738.5 60v2M738.5 125v1M738.5 245v1M738.5 386v4M738.5 613v1M738.5 635v6M739.5 58v1M739.5 244v1M739.5 306v11M739.5 615v1M739.5 632v2M739.5 642v7M740.5 33v4M740.5 162v1M740.5 243v1M740.5 303v1M740.5 384v1M740.5 575v1M740.5 631v1M740.5 650v5M741.5 38v6M741.5 164v3M741.5 241v2M741.5 301v2M741.5 319v8M741.5 383v1M741.5 521v6M741.5 618v1M741.5 629v2M741.5 656v1M742.5 31v1M742.5 45v6M742.5 56v1M742.5 168v3M742.5 240v1M742.5 299v2M742.5 328v11M742.5 382v1M742.5 528v7M742.5 628v1M743.5 52v3M743.5 172v2M743.5 239v1M743.5 298v1M743.5 340v8M743.5 381v1M743.5 536v2M743.5 621v1M743.5 626v2M743.5 792v4M744.5 175v2M744.5 197v1M744.5 238v1M744.5 263v1M744.5 297v1M744.5 349v2M744.5 625v1M744.5 777v15M745.5 26v3M745.5 178v1M745.5 199v3M745.5 237v1M745.5 288v6M745.5 296v1M745.5 353v5M745.5 624v1M745.5 768v9M746.5 23v3M746.5 180v2M746.5 195v1M746.5 203v3M746.5 236v1M746.5 266v1M746.5 359v4M746.5 379v1M746.5 758v10M747.5 20v3M747.5 183v1M747.5 194v1M747.5 207v3M747.5 234v2M747.5 364v4M747.5 378v1M747.5 681v15M747.5 751v1M747.5 754v4M748.5 17v3M748.5 185v1M748.5 193v1M748.5 211v3M748.5 233v1M748.5 369v5M748.5 377v1M748.5 622v1M748.5 662v17M748.5 680v1M748.5 748v3M749.5 14v3M749.5 187v1M749.5 192v1M749.5 215v4M749.5 232v1M749.5 270v1M749.5 285v1M749.5 375v1M749.5 563v8M749.5 621v1M749.5 745v3M750.5 11v3M750.5 189v1M750.5 191v1M750.5 220v4M750.5 230v2M750.5 284v1M750.5 554v9M750.5 620v1M750.5 742v3M751.5 8v3M751.5 426v3M751.5 547v7M751.5 619v1M751.5 739v3M752.5 6v2M752.5 226v3M752.5 255v2M752.5 430v7M752.5 737v2M753.5 230v1M753.5 254v1M753.5 275v1M753.5 282v1M753.5 438v6M753.5 545v1M754.5 232v1M754.5 252v2M754.5 445v5M754.5 617v1M755.5 234v1M755.5 251v1M755.5 318v2M755.5 476v3M755.5 616v1M756.5 236v1M756.5 249v2M756.5 280v1M756.5 317v1M756.5 471v5M756.5 543v1M756.5 615v1M757.5 238v1M757.5 247v2M757.5 315v2M757.5 419v4M757.5 465v6M757.5 614v1M758.5 240v1M758.5 246v1M758.5 314v1M758.5 409v10M758.5 460v5M759.5 242v1M759.5 244v2M759.5 312v2M759.5 341v9M759.5 402v7M759.5 457v3M759.5 482v1M759.5 541v1M760.5 311v1M760.5 331v10M760.5 398v4M760.5 502v9M760.5 612v1M760.5 728v5M760.5 803v3M761.5 91v3M761.5 310v1M761.5 328v3M761.5 489v13M761.5 611v1M761.5 723v5M762.5 77v14M762.5 308v2M762.5 354v2M762.5 396v1M762.5 486v3M762.5 539v1M762.5 581v12M762.5 610v1M762.5 717v6M763.5 66v11M763.5 307v1M763.5 357v2M763.5 384v5M763.5 395v1M763.5 594v7M763.5 609v1M763.5 711v6M764.5 59v7M764.5 131v2M764.5 306v1M764.5 360v2M764.5 382v1M764.5 390v3M764.5 602v5M764.5 706v5M765.5 58v1M765.5 129v1M765.5 134v4M765.5 363v2M765.5 381v1M765.5 537v1M766.5 56v1M766.5 127v2M766.5 139v4M766.5 366v2M766.5 380v1M767.5 13v2M767.5 31v24M767.5 126v1M767.5 144v4M767.5 369v2M767.5 379v1M767.5 423v1M768.5 16v2M768.5 28v2M768.5 125v1M768.5 280v4M768.5 372v2M768.5 378v1M769.5 11v1M769.5 19v2M769.5 26v2M769.5 124v1M769.5 273v4M769.5 285v4M769.5 375v2M770.5 10v1M770.5 22v2M770.5 25v1M770.5 123v1M770.5 268v5M770.5 290v4M770.5 534v1M771.5 9v1M771.5 122v1M771.5 266v2M771.5 295v4M771.5 659v2M772.5 8v1M772.5 103v3M772.5 121v1M772.5 184v1M772.5 264v1M772.5 300v5M772.5 520v3M772.5 657v2M773.5 7v1M773.5 107v7M773.5 119v2M773.5 181v1M773.5 186v3M773.5 245v1M773.5 263v1M773.5 518v1M773.5 524v3M773.5 532v1M773.5 653v4M774.5 6v1M774.5 101v1M774.5 115v3M774.5 177v2M774.5 180v1M774.5 190v4M774.5 247v5M774.5 261v2M774.5 422v2M774.5 517v1M774.5 528v2M774.5 650v3M775.5 161v16M775.5 195v4M775.5 243v1M775.5 253v4M775.5 260v1M775.5 419v3M775.5 516v1M775.5 647v3M776.5 156v5M776.5 200v4M776.5 242v1M776.5 258v1M776.5 416v3M776.5 515v1M776.5 644v3M777.5 99v1M777.5 205v4M777.5 241v1M777.5 414v2M777.5 513v2M777.5 640v4M778.5 210v5M778.5 237v3M778.5 411v3M778.5 512v1M779.5 216v1M779.5 234v3M779.5 325v5M779.5 409v2M779.5 511v1M779.5 638v1M779.5 666v1M780.5 97v1M780.5 231v3M780.5 319v6M780.5 332v1M780.5 406v3M780.5 454v1M780.5 510v1M780.5 629v8M780.5 668v2M780.5 697v1M780.5 788v6M781.5 56v1M781.5 227v4M781.5 315v4M781.5 334v1M781.5 453v1M781.5 509v1M781.5 622v7M781.5 671v5M781.5 778v10M782.5 58v1M782.5 223v4M782.5 350v3M782.5 404v1M782.5 452v1M782.5 508v1M782.5 619v3M782.5 677v9M782.5 776v2M783.5 53v1M783.5 60v1M783.5 95v1M783.5 222v1M783.5 337v1M783.5 345v5M783.5 451v1M783.5 507v1M783.5 570v5M783.5 687v8M783.5 774v1M784.5 52v1M784.5 62v1M784.5 94v1M784.5 341v4M784.5 399v4M784.5 449v2M784.5 506v1M784.5 563v7M784.5 773v1M785.5 93v1M785.5 340v1M785.5 357v1M785.5 395v4M785.5 448v1M785.5 461v1M785.5 505v1M785.5 556v7M785.5 737v1M785.5 739v1M785.5 772v1M786.5 49v2M786.5 65v1M786.5 391v4M786.5 447v1M786.5 504v1M786.5 547v9M786.5 736v1M786.5 741v1M787.5 47v2M787.5 67v1M787.5 385v6M787.5 445v2M787.5 503v1M787.5 540v7M787.5 734v2M788.5 44v3M788.5 69v1M788.5 91v1M788.5 361v1M788.5 377v8M788.5 444v1M788.5 465v1M788.5 502v1M788.5 733v1M788.5 744v1M788.5 770v1M789.5 42v2M789.5 363v2M789.5 375v1M789.5 440v2M789.5 443v1M789.5 731v2M789.5 746v1M789.5 769v1M790.5 39v3M790.5 72v1M790.5 289v3M790.5 366v1M790.5 374v1M790.5 438v1M790.5 468v1M790.5 730v1M790.5 748v1M790.5 768v1M791.5 36v3M791.5 74v1M791.5 89v1M791.5 287v1M791.5 293v5M791.5 368v2M791.5 373v1M791.5 437v1M791.5 500v1M791.5 728v2M791.5 750v1M791.5 767v1M792.5 33v3M792.5 88v1M792.5 261v2M792.5 299v5M792.5 436v1M792.5 471v1M792.5 499v1M792.5 726v2M792.5 752v2M792.5 766v1M793.5 31v2M793.5 77v1M793.5 264v3M793.5 285v1M793.5 305v5M793.5 435v1M793.5 473v1M793.5 725v1M793.5 755v1M793.5 765v1M794.5 28v3M794.5 79v1M794.5 268v2M794.5 284v1M794.5 434v1M794.5 475v1M794.5 723v2M794.5 757v1M794.5 764v1M795.5 23v1M795.5 26v2M795.5 81v1M795.5 86v1M795.5 257v1M795.5 271v2M795.5 283v1M795.5 433v1M795.5 494v3M795.5 721v2M795.5 759v1M795.5 763v1M796.5 20v3M796.5 274v2M796.5 431v2M796.5 478v1M796.5 490v4M796.5 720v1M796.5 761v1M797.5 17v3M797.5 277v2M797.5 403v1M797.5 406v2M797.5 430v1M797.5 480v1M797.5 488v2M797.5 501v1M797.5 702v12M797.5 718v2M798.5 14v3M798.5 120v2M798.5 253v3M798.5 280v1M798.5 402v1M798.5 409v1M798.5 429v1M798.5 482v1M798.5 584v1M798.5 715v2M798.5 805v1M799.5 11v3M799.5 118v2M799.5 126v25M799.5 250v3M799.5 401v1M799.5 411v2M799.5 428v1M799.5 486v1M799.5 504v1M800.5 8v3M800.5 115v3M800.5 248v2M800.5 400v1M800.5 414v1M800.5 427v1M800.5 485v1M800.5 805v1M801.5 6v2M801.5 112v3M801.5 246v1M801.5 335v1M801.5 399v1M801.5 416v1M801.5 426v1M802.5 110v2M802.5 245v1M802.5 334v1M802.5 338v1M802.5 398v1M802.5 418v1M802.5 425v1M802.5 698v1M803.5 107v3M803.5 328v5M803.5 353v1M803.5 397v1M803.5 420v1M803.5 424v1M804.5 103v4M804.5 188v4M804.5 321v7M804.5 341v1M804.5 396v1M804.5 423v1M804.5 510v1M805.5 102v1M805.5 124v1M805.5 184v1M805.5 243v1M805.5 320v1M805.5 395v1M805.5 696v1M805.5 802v1" fill="none" stroke="#5c6163" stroke-width="1" shape-rendering="crispEdges"/>
<polygon points="6.0,705.4 8.5,703.0 10.2,701.8 12.5,700.3 14.1,700.1 17.6,699.3 19.7,698.7 23.8,700.3 26.9,701.0 28.3,703.8 31.3,705.9 33.8,706.5 36.8,706.0 39.0,706.9 41.8,706.1 43.7,707.0 46.8,705.2 46.7,708.0 48.0,711.3 47.3,713.6 49.2,716.6 51.5,719.3 54.0,720.8 57.1,721.7 59.1,724.3 61.5,724.1 63.6,725.3 66.0,725.6 69.0,726.2 70.2,729.4 73.2,732.0 74.2,735.9 76.4,738.1 78.1,740.4 81.0,741.6 83.4,743.5 86.5,741.8 88.0,741.6 91.6,741.0 93.6,742.8 95.9,743.6 98.7,745.1 99.9,746.2 101.8,747.8 104.7,749.7 108.8,752.1 112.4,752.6 116.0,751.4 118.7,749.6 121.0,748.8 123.3,745.7 124.9,742.7 128.6,743.8 131.3,744.6 133.6,745.5 137.3,747.0 139.7,748.2 142.8,749.5 145.1,750.8 148.0,750.3 147.8,747.8 148.4,745.1 149.4,743.4 149.5,741.4 149.9,738.5 150.5,735.5 149.8,732.3 150.1,729.9 148.9,726.4 149.0,723.7 151.1,721.4 153.3,720.3 155.7,718.1 157.4,716.3 160.0,717.5 161.7,718.4 165.5,720.4 167.3,721.6 169.3,723.3 172.2,726.4 171.5,728.8 172.8,731.8 172.9,733.9 172.8,737.7 171.5,740.0 172.6,742.4 172.4,746.0 172.6,748.2 173.2,750.8 175.1,753.2 176.9,755.4 179.8,756.2 182.9,755.8 184.1,756.4 187.1,756.6 190.3,755.7 192.7,756.2 194.7,756.5 197.5,756.5 200.0,756.7 202.1,756.7 205.5,756.8 207.4,757.0 210.0,757.9 213.4,756.8 215.3,757.2 218.2,757.2 220.8,757.8 222.9,757.6 225.5,757.6 228.3,758.0 231.7,758.3 233.7,757.9 235.9,758.1 239.4,757.7 241.4,758.3 240.5,756.1 238.4,753.0 236.5,751.1 234.3,749.2 233.1,747.8 231.8,745.8 228.4,745.1 225.8,742.8 224.3,741.3 222.2,741.1 218.9,740.3 217.4,739.0 213.9,737.5 212.4,737.7 209.8,736.9 207.5,735.4 204.2,735.5 202.7,734.2 199.4,732.9 197.2,733.4 197.2,729.9 197.2,727.6 197.6,725.1 198.5,722.1 198.5,719.2 201.4,718.6 203.2,716.1 204.5,714.8 207.5,714.1 208.6,712.2 210.8,710.2 212.6,708.9 215.4,707.5 217.0,705.1 219.2,702.9 221.5,702.1 221.4,699.1 222.4,697.3 223.5,694.0 224.6,692.5 225.2,689.4 225.4,686.9 226.4,684.4 226.7,681.4 225.8,679.2 226.4,676.3 223.7,674.6 221.9,673.1 219.2,672.4 216.5,672.8 214.0,673.6 211.6,675.2 208.2,675.8 206.2,677.2 204.6,678.5 202.7,681.6 201.3,684.4 198.3,686.8 197.3,689.2 196.2,691.9 195.0,693.6 191.8,693.1 188.4,692.4 185.3,691.6 183.1,689.4 179.4,687.2 176.9,685.0 177.7,681.4 180.0,680.1 182.9,678.7 185.3,676.0 188.4,674.8 190.9,671.9 192.7,668.5 195.3,667.1 198.7,666.8 200.9,664.3 202.9,663.1 205.5,660.4 207.7,660.2 210.6,660.3 212.6,657.7 215.4,654.4 217.3,652.9 219.5,652.6 222.6,652.1 224.7,652.9 226.9,652.9 229.8,651.4 232.5,651.4 235.4,650.7 237.1,650.5 239.9,649.5 242.8,650.0 245.5,649.2 247.5,648.9 249.6,647.4 252.1,647.5 254.6,646.9 258.2,648.4 260.1,649.0 262.6,650.1 265.7,652.3 269.0,652.3 270.4,653.0 274.2,652.6 276.6,652.9 279.0,651.2 282.4,650.2 283.9,651.6 286.8,652.5 289.2,653.9 291.5,655.2 293.4,654.6 295.9,655.9 299.3,657.1 300.8,656.4 303.2,654.8 305.2,651.7 305.2,649.4 306.1,646.9 306.0,643.4 307.2,640.9 306.8,638.4 307.5,634.9 307.5,633.0 308.3,630.1 309.4,627.6 311.0,625.4 312.3,623.2 315.8,623.6 319.3,625.0 319.1,627.4 319.7,630.2 320.6,632.6 320.8,636.0 321.9,638.1 321.8,641.1 322.4,643.5 324.0,645.5 324.2,648.3 327.0,647.5 327.5,649.6 329.6,653.0 331.2,655.2 332.1,658.0 334.1,659.4 337.4,659.7 340.1,659.2 341.9,657.7 344.6,658.1 347.4,657.3 350.0,655.9 352.4,655.3 355.3,654.3 357.4,653.9 360.2,653.3 362.7,651.5 365.6,650.5 367.8,650.1 369.5,649.3 372.1,648.3 375.8,648.3 377.5,647.0 380.4,646.2 382.2,645.9 385.8,646.1 388.0,645.4 390.7,645.6 394.3,646.1 396.5,645.8 399.4,646.1 402.5,646.3 405.1,646.1 407.1,646.2 410.5,646.4 413.3,647.3 414.9,646.9 418.2,646.5 420.7,647.2 423.1,646.8 425.6,647.1 427.6,648.2 430.7,648.2 432.7,648.6 435.3,648.8 437.7,649.5 441.0,650.7 443.0,651.6 445.5,652.2 448.7,652.9 451.4,653.4 453.9,654.0 455.9,655.4 458.5,655.7 460.6,657.6 463.3,658.7 466.4,660.0 468.0,661.5 471.7,662.9 473.0,665.1 475.9,666.4 478.7,669.5 481.3,670.6 483.0,672.6 485.9,675.0 489.3,676.8 491.9,677.5 494.1,679.6 496.4,681.3 498.5,682.9 500.8,685.7 503.5,688.1 505.5,690.3 507.2,692.9 507.5,696.8 508.3,699.5 509.1,700.8 510.4,704.7 510.3,706.9 512.6,708.6 514.6,711.7 517.0,711.0 519.1,711.3 522.4,711.0 523.7,712.3 527.3,712.9 529.7,714.6 532.1,716.6 534.8,718.8 536.7,718.5 539.2,716.4 541.6,715.5 545.2,713.4 547.2,712.9 549.2,710.7 552.0,709.2 555.0,708.0 556.3,705.3 558.7,704.7 560.4,702.0 562.7,701.3 564.7,698.6 566.9,697.5 568.7,696.3 570.6,694.5 572.9,693.5 575.8,691.4 576.9,689.4 579.1,687.1 580.2,685.4 582.8,683.6 584.8,681.3 588.4,679.3 590.0,677.0 593.1,676.7 594.9,674.9 599.5,674.9 604.3,673.5 607.3,673.9 607.8,676.5 610.6,677.0 613.8,676.5 617.3,678.5 618.2,679.3 620.8,680.5 623.2,683.0 626.1,682.5 629.7,685.5 631.9,686.8 632.2,689.0 635.1,690.0 636.8,691.0 637.5,692.6 639.7,696.5 640.6,700.2 644.6,700.4 644.3,701.6 647.6,705.4 648.9,707.4 650.3,708.0 652.2,709.1 653.5,713.4 655.8,713.1 657.2,716.3 656.9,718.0 655.6,721.8 658.1,723.4 655.8,727.7 660.0,728.6 662.5,729.8 663.6,731.5 665.3,734.2 668.1,736.9 669.4,737.2 671.1,739.4 671.0,741.9 675.3,743.7 676.3,746.7 678.1,746.9 680.0,750.2 679.6,751.2 679.6,755.3 682.6,756.0 681.8,760.7 685.6,760.0 686.2,758.2 688.5,757.7 693.0,756.7 696.2,758.4 697.3,760.9 700.0,763.0 701.2,765.8 702.7,768.8 704.7,771.1 706.2,773.0 706.5,774.2 707.7,777.7 710.8,780.1 709.5,782.2 711.5,784.4 713.1,787.3 711.5,791.6 712.5,792.3 711.5,795.9 713.8,798.0 712.2,802.2 713.0,804.7 711.2,807.6 714.0,809.0 712.6,812.0 710.1,812.0 707.6,812.0 705.1,812.0 702.6,812.0 700.1,812.0 697.6,812.0 695.1,812.0 692.6,812.0 690.1,812.0 687.6,812.0 685.1,812.0 682.6,812.0 680.1,812.0 677.6,812.0 675.1,812.0 672.6,812.0 670.1,812.0 667.6,812.0 665.1,812.0 662.6,812.0 660.1,812.0 657.6,812.0 655.1,812.0 652.6,812.0 650.1,812.0 647.6,812.0 645.1,812.0 642.6,812.0 640.1,812.0 637.6,812.0 635.1,812.0 632.6,812.0 630.1,812.0 627.6,812.0 625.1,812.0 622.6,812.0 620.1,812.0 617.6,812.0 615.1,812.0 612.6,812.0 610.1,812.0 607.6,812.0 605.1,812.0 602.6,812.0 600.1,812.0 597.6,812.0 595.1,812.0 592.6,812.0 590.1,812.0 587.6,812.0 585.1,812.0 582.6,812.0 580.1,812.0 577.6,812.0 575.1,812.0 572.6,812.0 570.1,812.0 567.6,812.0 565.1,812.0 562.6,812.0 560.1,812.0 557.6,812.0 555.1,812.0 552.6,812.0 550.1,812.0 547.6,812.0 545.1,812.0 542.6,812.0 540.1,812.0 537.6,812.0 535.1,812.0 532.6,812.0 530.1,812.0 527.6,812.0 525.1,812.0 522.6,812.0 520.1,812.0 517.6,812.0 515.1,812.0 512.6,812.0 510.1,812.0 507.6,812.0 505.1,812.0 502.6,812.0 500.1,812.0 497.6,812.0 495.1,812.0 492.6,812.0 490.1,812.0 487.6,812.0 485.1,812.0 482.6,812.0 480.1,812.0 477.6,812.0 475.1,812.0 472.6,812.0 470.1,812.0 467.6,812.0 465.1,812.0 462.6,812.0 460.1,812.0 457.6,812.0 455.1,812.0 452.6,812.0 450.1,812.0 447.6,812.0 445.1,812.0 442.6,812.0 440.1,812.0 437.6,812.0 435.1,812.0 432.6,812.0 430.1,812.0 427.6,812.0 425.1,812.0 422.6,812.0 420.1,812.0 417.6,812.0 415.1,812.0 412.6,812.0 410.1,812.0 407.6,812.0 405.1,812.0 402.6,812.0 400.1,812.0 397.6,812.0 395.1,812.0 392.6,812.0 390.1,812.0 387.6,812.0 385.1,812.0 382.6,812.0 380.1,812.0 377.6,812.0 375.1,812.0 372.6,812.0 370.1,812.0 367.6,812.0 365.1,812.0 362.6,812.0 360.1,812.0 357.6,812.0 355.0,812.0 352.5,812.0 350.0,812.0 347.5,812.0 345.0,812.0 342.5,812.0 340.0,812.0 337.5,812.0 335.0,812.0 332.5,812.0 330.0,812.0 327.5,812.0 325.0,812.0 322.5,812.0 320.0,812.0 317.5,812.0 315.0,812.0 312.5,812.0 310.0,812.0 307.5,812.0 305.0,812.0 302.5,812.0 300.0,812.0 297.5,812.0 295.0,812.0 292.5,812.0 290.0,812.0 287.5,812.0 285.0,812.0 282.5,812.0 280.0,812.0 277.5,812.0 275.0,812.0 272.5,812.0 270.0,812.0 267.5,812.0 265.0,812.0 262.5,812.0 260.0,812.0 257.5,812.0 255.0,812.0 252.5,812.0 250.0,812.0 247.5,812.0 245.0,812.0 242.5,812.0 240.0,812.0 237.5,812.0 235.0,812.0 232.5,812.0 230.0,812.0 227.5,812.0 225.0,812.0 222.5,812.0 220.0,812.0 217.5,812.0 215.0,812.0 212.5,812.0 210.0,812.0 207.5,812.0 205.0,812.0 202.5,812.0 200.0,812.0 197.5,812.0 195.0,812.0 192.5,812.0 190.0,812.0 187.5,812.0 185.0,812.0 182.5,812.0 180.0,812.0 177.5,812.0 175.0,812.0 172.5,812.0 170.0,812.0 167.5,812.0 165.0,812.0 162.5,812.0 160.0,812.0 157.5,812.0 155.0,812.0 152.5,812.0 150.0,812.0 147.5,812.0 145.0,812.0 142.5,812.0 140.0,812.0 137.5,812.0 135.0,812.0 132.5,812.0 130.0,812.0 127.5,812.0 125.0,812.0 122.5,812.0 120.0,812.0 117.5,812.0 115.0,812.0 112.5,812.0 110.0,812.0 107.5,812.0 105.0,812.0 102.5,812.0 100.0,812.0 97.5,812.0 95.0,812.0 92.5,812.0 90.0,812.0 87.5,812.0 85.0,812.0 82.5,812.0 80.0,812.0 77.5,812.0 75.0,812.0 72.5,812.0 70.0,812.0 67.5,812.0 65.0,812.0 62.5,812.0 60.0,812.0 57.5,812.0 55.0,812.0 52.5,812.0 50.0,812.0 47.5,812.0 45.0,812.0 42.5,812.0 40.0,812.0 37.5,812.0 35.0,812.0 32.5,812.0 30.0,812.0 27.5,812.0 25.0,812.0 22.5,812.0 20.0,812.0 17.5,812.0 15.0,812.0 12.5,812.0 10.0,812.0 7.5,812.0 5.0,812.0 2.5,812.0 0.0,812.0 0.0,809.5 0.0,806.9 0.0,804.4 0.0,801.8 0.0,799.3 0.0,796.7 0.0,794.2 0.0,791.6 0.0,789.1 0.0,786.5 0.0,784.0 0.0,781.4 0.0,778.9 0.0,776.3 0.0,773.8 0.0,771.2 0.0,768.7 0.0,766.1 0.0,763.6 0.0,761.0 0.0,758.5 0.0,756.0 0.0,753.4 0.0,750.9 0.0,748.3 0.0,745.8 0.0,743.2 0.0,740.7 0.0,738.1 0.0,735.6 0.0,733.0 0.0,730.5 0.0,727.9 0.0,725.4 0.0,722.8 0.0,720.3 0.0,717.7 0.0,715.2 0.0,712.6 0.0,710.1 0.0,707.5 0.0,705.0 3.0,705.0" fill="#003f5f" stroke="#000" stroke-width="1.5" stroke-linejoin="miter"/>
<polygon points="418.0,645.0 421.0,640.0 427.0,641.0 433.0,638.0 440.0,640.0 447.0,637.0 453.0,641.0 455.0,646.0 447.0,647.0 432.0,647.0" fill="#003f5f" stroke="#000" stroke-width="1"/>
<polygon points="474.0,657.0 479.0,654.0 486.0,659.0 494.0,653.0 499.0,655.0 493.0,664.0 500.0,673.0 507.0,679.0 505.0,683.0 490.0,673.0 481.0,667.0" fill="#003f5f" stroke="#000" stroke-width="1"/>
<polygon points="376.0,647.0 381.0,640.0 386.0,643.0 390.0,636.0 394.0,640.0 398.0,634.0 400.0,640.0 396.0,646.0" fill="#003f5f" stroke="#000" stroke-width="1"/>
<polygon points="575.0,690.0 580.0,684.0 586.0,680.0 589.0,677.0 597.0,673.0 600.0,675.0 590.0,682.0 583.0,690.0" fill="#003f5f" stroke="#000" stroke-width="1"/>
<polygon points="790.0,612.0 806.0,560.0 806.0,690.0 796.0,680.0 794.0,660.0 800.0,640.0 795.0,625.0" fill="#003f5f" stroke="#000" stroke-width="1"/>
<polygon points="520.0,711.0 530.0,706.0 542.0,702.0 545.0,706.0 535.0,712.0 528.0,715.0" fill="#003f5f" stroke="#000" stroke-width="1"/>
<polygon points="8.6,717.5 24.6,716.3 39.4,721.2 36.9,726.1 27.0,729.8 9.8,721.2" fill="#5c4f4b" stroke="#000" stroke-width="1"/>
<polygon points="299.7,60.1 301.7,59.8 304.1,58.0 307.7,57.9 309.1,59.5 310.2,59.8 312.4,62.4 313.4,64.4 313.8,66.0 315.5,69.3 316.9,70.7 317.8,72.4 319.8,72.1 323.3,73.4 322.4,74.3 321.6,76.5 319.6,78.6 317.5,79.7 316.7,79.2 316.4,82.3 316.5,84.5 318.7,86.3 319.5,88.3 320.8,91.7 321.5,92.1 322.3,96.1 320.1,94.3 319.0,94.8 317.2,91.8 315.9,89.3 314.1,87.4 313.4,86.8 311.7,84.1 311.9,81.4 310.6,80.9 311.1,77.3 309.9,76.8 308.3,74.2 307.2,71.8 307.3,69.8 306.5,66.6 304.7,65.7 302.7,63.9 299.8,63.9" fill="#2c4a6a" stroke="#2c4a6a" stroke-width="0.6"/>
<polygon points="370.1,257.1 372.5,258.0 373.9,258.2 375.9,258.7 377.1,260.2 378.9,261.5 380.5,262.5 383.8,263.0 385.4,263.5 387.4,265.2 388.5,267.5 390.8,267.8 393.6,269.4 395.3,270.7 397.6,272.6 396.2,276.4 396.4,278.8 395.5,277.5 391.5,275.9 389.5,275.8 388.2,275.6 385.7,273.0 384.1,271.7 381.3,271.3 380.4,269.2 378.3,269.2 377.3,267.4 375.9,265.8 374.0,265.7 372.7,264.0 369.8,261.7 369.1,260.4" fill="#2c4a6a" stroke="#2c4a6a" stroke-width="0.6"/>
<polygon points="598.2,311.3 600.1,310.1 600.3,308.6 602.7,307.9 604.2,305.8 606.0,305.8 607.6,303.3 608.2,300.9 610.3,298.1 610.2,296.1 611.5,293.2 611.5,292.1 611.5,290.4 612.8,287.3 613.4,285.9 614.5,288.2 615.2,290.2 618.3,290.2 620.5,289.6 623.4,290.9 625.7,291.5 627.2,294.2 625.8,295.6 623.2,296.9 622.7,298.7 620.2,300.7 619.7,302.8 617.6,304.9 616.8,306.7 615.0,308.7 614.7,310.4 614.2,311.9 611.3,312.7 609.3,314.3 606.9,314.0 604.5,314.6 603.8,316.9 601.1,315.1 599.6,313.4" fill="#2c4a6a" stroke="#2c4a6a" stroke-width="0.6"/>
<polygon points="447.8,365.2 449.0,366.1 451.0,367.5 449.4,371.3 447.1,372.3 446.9,373.9 444.2,377.0 443.2,377.5 439.2,375.6 441.0,374.5 443.5,372.5 444.7,370.8 446.0,369.1 447.5,365.9" fill="#2c4a6a" stroke="#2c4a6a" stroke-width="0.6"/>
<polygon points="424.7,412.5 425.9,415.3 426.1,418.3 426.8,419.5 427.3,422.3 428.5,424.8 428.9,426.4 429.8,429.2 430.4,432.1 429.4,434.4 428.8,431.8 427.2,430.7 426.4,429.2 426.5,427.7 425.9,424.5 425.1,422.7 423.9,421.1 424.4,419.7 423.9,417.6 424.0,414.3" fill="#2c4a6a" stroke="#2c4a6a" stroke-width="0.6"/>
<polygon points="527.4,501.6 527.6,503.2 527.1,506.8 527.7,507.4 528.4,509.3 529.8,513.1 529.8,514.3 530.4,516.8 529.3,519.3 531.4,520.6 533.0,522.8 534.4,525.2 537.7,528.1 534.5,530.3 532.8,532.0 532.7,534.3 532.4,536.5 530.9,537.4 530.9,540.3 528.5,538.7 527.4,537.7 526.9,536.1 527.3,533.1 525.7,532.5 526.3,529.3 525.7,527.5 526.9,526.7 526.7,523.5 527.9,521.9 528.6,520.9 528.4,518.4 527.2,515.2 527.4,513.8 526.3,512.2 526.8,510.1 527.0,508.8 525.8,505.7 527.4,504.5" fill="#2c4a6a" stroke="#2c4a6a" stroke-width="0.6"/>
<polygon points="541.8,599.4 542.4,602.8 543.7,604.3 545.9,605.4 546.0,607.6 548.6,607.5 550.8,608.6 551.3,609.6 553.7,608.3 557.5,606.9 559.8,608.2 560.4,610.4 559.5,612.1 558.0,614.4 556.1,616.6 554.5,617.0 551.4,616.3 550.8,616.6 547.6,617.0 544.9,616.1 543.2,613.3 543.1,612.0 541.1,610.2 541.6,607.7 539.1,605.5 539.5,604.1 540.3,602.6" fill="#2c4a6a" stroke="#2c4a6a" stroke-width="0.6"/>
<polygon points="121.5,659.1 122.9,657.6 123.7,656.0 124.4,655.0 126.8,652.8 128.6,652.3 131.4,652.4 132.2,652.4 133.8,652.9 134.8,655.9 137.4,656.7 136.6,659.4 135.2,661.4 135.9,663.8 134.2,665.1 132.7,666.6 130.1,667.3 128.7,667.7 125.5,667.7 122.2,666.9 122.3,663.9 122.0,662.5" fill="#2c4a6a" stroke="#2c4a6a" stroke-width="0.6"/>
<polygon points="42.1,680.4 43.8,681.2 47.6,681.3 47.5,682.6 48.9,684.2 50.8,686.8 49.3,688.4 47.3,691.5 45.3,688.9 42.1,686.9 42.5,685.5 43.2,683.2" fill="#2c4a6a" stroke="#2c4a6a" stroke-width="0.6"/>
<polygon points="57.9,683.4 57.5,685.6 58.8,687.3 61.1,689.5 61.5,692.1 61.3,695.5 61.4,697.7 63.8,698.3 64.9,699.4 68.0,699.5 69.0,701.3 71.2,701.7 73.8,701.2 76.1,702.2 77.9,702.2 80.2,703.6 81.3,705.2 84.5,707.4 82.2,709.5 82.2,712.1 79.2,711.7 78.0,710.9 76.2,710.3 72.3,709.2 71.4,708.2 69.6,708.4 67.0,706.4 63.4,706.7 62.0,704.9 60.8,703.5 59.3,701.5 57.6,699.9 57.4,696.7 56.7,695.7 56.2,693.4 57.0,691.8 55.6,689.5 56.7,687.1" fill="#2c4a6a" stroke="#2c4a6a" stroke-width="0.6"/>
<polygon points="143.2,694.8 146.2,696.2 148.6,695.5 150.5,697.6 152.7,699.5 152.2,702.2 154.7,703.6 152.3,705.6 149.9,708.4 148.4,709.3 148.0,710.3 146.0,712.6 143.3,712.8 141.5,714.4 142.2,712.1 140.7,709.4 139.8,707.4 141.6,705.2 144.4,703.9 146.9,703.4 144.9,700.1 145.2,698.3 144.5,697.2" fill="#2c4a6a" stroke="#2c4a6a" stroke-width="0.6"/>
<polygon points="784.6,727.8 785.6,730.1 786.3,730.7 789.1,732.2 790.8,733.3 790.0,735.8 791.4,737.8 791.6,739.9 793.6,742.8 793.8,743.6 794.4,745.4 794.2,748.5 793.9,749.7 794.2,752.0 792.5,754.4 792.0,753.7 789.1,750.9 788.7,749.3 787.8,748.3 787.0,746.0 786.0,743.6 785.9,741.4 785.0,739.6 784.6,738.7 784.8,736.3 784.8,733.1 784.8,732.7 784.6,730.0" fill="#2c4a6a" stroke="#2c4a6a" stroke-width="0.6"/>
<polyline points="783.7,655.8 786.0,665.0 788.7,676.1 791.0,690.0 793.8,701.5 790.0,712.0 788.7,719.3 785.0,726.0 783.7,732.0" fill="none" stroke="#003f5f" stroke-width="2.5"/>
<path d="M225 668.5h1M224 669.5h3M219 670.5h1M223 670.5h4M218 671.5h3M222 671.5h6M217 672.5h11M211 673.5h8M220 673.5h9M209 674.5h20M208 675.5h16M225 675.5h1M207 676.5h16M207 677.5h1M209 677.5h2M213 677.5h9M208 678.5h3M214 678.5h9M205 679.5h3M209 679.5h2M214 679.5h5M221 679.5h4M206 680.5h1M208 680.5h3M214 680.5h5M220 680.5h4M205 681.5h1M208 681.5h3M213 681.5h12M227 681.5h1M205 682.5h1M208 682.5h16M225 682.5h1M227 682.5h1M229 682.5h1M205 683.5h11M217 683.5h6M225 683.5h3M206 684.5h8M218 684.5h3M222 684.5h1M226 684.5h1M206 685.5h8M217 685.5h3M226 685.5h2M205 686.5h10M217 686.5h3M205 687.5h10M217 687.5h3M221 687.5h2M228 687.5h1M205 688.5h10M217 688.5h2M223 688.5h1M206 689.5h4M211 689.5h4M216 689.5h3M221 689.5h2M225 689.5h1M206 690.5h6M213 690.5h6M222 690.5h4M206 691.5h1M209 691.5h2M214 691.5h4M223 691.5h3M209 692.5h3M221 692.5h4M209 693.5h3M215 693.5h1M222 693.5h2M208 694.5h10M221 694.5h3M208 695.5h11M221 695.5h2M207 696.5h1M209 696.5h12M208 697.5h4M213 697.5h2M216 697.5h5M222 697.5h1M208 698.5h6M216 698.5h5M207 699.5h7M217 699.5h4M207 700.5h7M217 700.5h4M206 701.5h9M216 701.5h6M206 702.5h16M205 703.5h17M205 704.5h10M216 704.5h6M206 705.5h13M221 705.5h1M206 706.5h13M221 706.5h1M206 707.5h11M221 707.5h1M209 708.5h3M211 709.5h1" stroke="#000" stroke-width="1" fill="none" shape-rendering="crispEdges"/>
<path d="M227 669.5h1M219 673.5h1M224 675.5h1M226 675.5h3M223 676.5h6M211 677.5h2M222 677.5h7M211 678.5h3M223 678.5h6M211 679.5h3M225 679.5h4M211 680.5h3M224 680.5h4M211 681.5h2M225 681.5h2M224 682.5h1M226 682.5h1M223 683.5h2M221 684.5h1M223 684.5h3M220 685.5h6M220 686.5h8M220 687.5h1M223 687.5h5M219 688.5h4M224 688.5h4M210 689.5h1M219 689.5h2M223 689.5h2M226 689.5h1M212 690.5h1M219 690.5h3M211 691.5h3M218 691.5h5M212 692.5h9M212 693.5h3M216 693.5h6M218 694.5h3M219 695.5h2M223 695.5h1M208 696.5h1M221 696.5h3M221 697.5h1M223 697.5h1M221 698.5h3M221 699.5h3M221 700.5h3M222 701.5h2M223 702.5h1M215 704.5h1" stroke="#003f5f" stroke-width="1" fill="none" shape-rendering="crispEdges"/>
<path d="M203 698.5h1M197 699.5h1M199 699.5h2M202 699.5h2M197 700.5h7M197 701.5h5M203 701.5h1M191 702.5h11M191 703.5h12M191 704.5h1M194 704.5h6M192 705.5h11M204 705.5h3M193 706.5h7M203 706.5h5M192 707.5h1M194 707.5h7M203 707.5h5M189 708.5h1M193 708.5h15M194 709.5h15M189 710.5h2M194 710.5h16M187 711.5h1M189 711.5h2M194 711.5h1M196 711.5h12M187 712.5h1M192 712.5h1M196 712.5h10M185 713.5h1M188 713.5h1M191 713.5h10M202 713.5h3M185 714.5h2M189 714.5h16M184 715.5h4M190 715.5h14M183 716.5h4M191 716.5h13M180 717.5h8M191 717.5h1M193 717.5h8M202 717.5h1M183 718.5h4M194 718.5h5M183 719.5h4M193 719.5h6M183 720.5h6M190 720.5h6M197 720.5h2M183 721.5h1M185 721.5h8M194 721.5h2M198 721.5h2M186 722.5h6M199 722.5h1M186 723.5h6M198 723.5h4M185 724.5h9M197 724.5h5M187 725.5h16M189 726.5h13M189 727.5h12M190 728.5h1M192 728.5h10M193 729.5h4M200 729.5h1M193 730.5h2M192 731.5h4M190 732.5h6M191 733.5h3M197 733.5h1M199 733.5h2M196 734.5h6M196 735.5h5M197 736.5h3M199 737.5h1" stroke="#000" stroke-width="1" fill="none" shape-rendering="crispEdges"/>
<path d="M201 699.5h1M202 701.5h1M204 701.5h1M202 702.5h3M203 703.5h4M192 704.5h2M200 704.5h7M191 705.5h1M203 705.5h1M207 705.5h1M192 706.5h1M200 706.5h3M191 707.5h1M193 707.5h1M201 707.5h2M190 708.5h3M189 709.5h5M188 710.5h1M191 710.5h3M186 711.5h1M188 711.5h1M191 711.5h3M195 711.5h1M186 712.5h1M188 712.5h4M193 712.5h3M186 713.5h2M189 713.5h2M187 714.5h2M188 715.5h2M187 716.5h4M188 717.5h3M192 717.5h1M201 717.5h1M187 718.5h7M199 718.5h4M187 719.5h6M199 719.5h4M189 720.5h1M199 720.5h3M200 721.5h2M200 722.5h2M191 728.5h1M190 729.5h3M188 730.5h5M189 731.5h3M198 737.5h1M198 738.5h1M198 739.5h1" stroke="#003f5f" stroke-width="1" fill="none" shape-rendering="crispEdges"/>
<path d="M158 713.5h1M158 714.5h1M167 714.5h1M158 715.5h1M165 715.5h4M157 716.5h3M166 716.5h1M158 717.5h2M166 717.5h1M153 718.5h1M159 718.5h1M166 718.5h2M159 719.5h1M166 719.5h1M147 720.5h1M152 720.5h1M159 720.5h2M164 720.5h4M169 720.5h3M173 720.5h2M146 721.5h1M152 721.5h1M159 721.5h2M162 721.5h6M169 721.5h2M144 722.5h2M152 722.5h1M159 722.5h1M162 722.5h2M166 722.5h1M168 722.5h3M145 723.5h5M151 723.5h3M159 723.5h2M162 723.5h5M170 723.5h2M146 724.5h5M152 724.5h3M159 724.5h9M170 724.5h2M175 724.5h3M154 725.5h1M159 725.5h7M170 725.5h2M174 725.5h2M177 725.5h1M151 726.5h1M154 726.5h2M160 726.5h7M171 726.5h3M175 726.5h3M152 727.5h4M162 727.5h13M151 728.5h1M153 728.5h1M155 728.5h1M162 728.5h7M170 728.5h5M157 729.5h1M163 729.5h1M165 729.5h3M171 729.5h1M173 729.5h2M155 730.5h3M163 730.5h1M166 730.5h1M170 730.5h2M174 730.5h1M150 731.5h3M154 731.5h4M163 731.5h1M167 731.5h2M170 731.5h2M174 731.5h1M151 732.5h2M154 732.5h2M157 732.5h2M162 732.5h2M167 732.5h7M157 733.5h2M163 733.5h1M169 733.5h6M157 734.5h2M163 734.5h1M168 734.5h6M185 734.5h1M152 735.5h1M155 735.5h1M157 735.5h3M163 735.5h1M166 735.5h3M170 735.5h1M173 735.5h2M182 735.5h1M185 735.5h1M151 736.5h9M163 736.5h2M166 736.5h3M170 736.5h2M173 736.5h3M177 736.5h7M189 736.5h1M151 737.5h4M164 737.5h8M176 737.5h3M182 737.5h2M189 737.5h1M150 738.5h3M154 738.5h1M159 738.5h1M163 738.5h1M165 738.5h1M168 738.5h3M174 738.5h4M184 738.5h3M150 739.5h3M154 739.5h8M164 739.5h1M167 739.5h5M176 739.5h1M186 739.5h3M147 740.5h1M150 740.5h2M155 740.5h8M168 740.5h1M170 740.5h2M173 740.5h1M176 740.5h4M186 740.5h3M150 741.5h2M155 741.5h7M168 741.5h2M174 741.5h1M176 741.5h5M188 741.5h2M149 742.5h3M155 742.5h8M167 742.5h7M175 742.5h2M178 742.5h4M186 742.5h1M188 742.5h2M157 743.5h5M167 743.5h4M175 743.5h1M178 743.5h1M180 743.5h2M183 743.5h1M189 743.5h1M161 744.5h1M163 744.5h7M178 744.5h6M186 744.5h2M163 745.5h2M167 745.5h5M179 745.5h5M186 745.5h3M163 746.5h1M166 746.5h5M173 746.5h1M175 746.5h1M179 746.5h1M181 746.5h3M187 746.5h2M152 747.5h4M163 747.5h1M167 747.5h5M173 747.5h1M178 747.5h2M182 747.5h2M187 747.5h1M189 747.5h3M151 748.5h1M154 748.5h2M157 748.5h3M162 748.5h6M170 748.5h3M178 748.5h2M183 748.5h2M187 748.5h1M147 749.5h1M150 749.5h2M159 749.5h9M170 749.5h2M173 749.5h1M178 749.5h1M183 749.5h2M150 750.5h2M160 750.5h8M170 750.5h3M178 750.5h1M183 750.5h1M150 751.5h2M158 751.5h4M164 751.5h1M170 751.5h2M176 751.5h3M183 751.5h1M188 751.5h2M156 752.5h2M159 752.5h1M163 752.5h1M171 752.5h2M176 752.5h3M183 752.5h1M151 753.5h1M156 753.5h5M171 753.5h1M175 753.5h2M178 753.5h1M183 753.5h1M187 753.5h3M151 754.5h1M156 754.5h4M171 754.5h1M175 754.5h3M183 754.5h1M187 754.5h5M155 755.5h1M157 755.5h3M171 755.5h2M175 755.5h3M179 755.5h1M183 755.5h1M188 755.5h5M157 756.5h2M164 756.5h2M171 756.5h1M174 756.5h2M177 756.5h3M183 756.5h2M189 756.5h5M156 757.5h3M163 757.5h2M166 757.5h2M171 757.5h2M175 757.5h1M186 757.5h1M189 757.5h3M156 758.5h2M164 758.5h5M173 758.5h1M179 758.5h1M187 758.5h1M189 758.5h1M156 759.5h1M165 759.5h3" stroke="#000" stroke-width="1" fill="none" shape-rendering="crispEdges"/>
<path d="M156 714.5h1M155 715.5h2M155 716.5h2M167 716.5h2M154 717.5h4M167 717.5h3M154 718.5h5M168 718.5h2M153 719.5h6M167 719.5h4M153 720.5h6M168 720.5h1M153 721.5h6M171 721.5h3M153 722.5h6M164 722.5h2M171 722.5h4M154 723.5h5M172 723.5h5M155 724.5h4M172 724.5h3M147 725.5h4M155 725.5h4M172 725.5h2M147 726.5h4M156 726.5h4M174 726.5h1M180 726.5h1M148 727.5h4M156 727.5h6M175 727.5h3M179 727.5h2M149 728.5h2M152 728.5h1M154 728.5h1M156 728.5h6M169 728.5h1M175 728.5h6M149 729.5h8M158 729.5h5M168 729.5h3M175 729.5h5M149 730.5h6M158 730.5h5M167 730.5h3M175 730.5h5M183 730.5h1M153 731.5h1M158 731.5h5M169 731.5h1M175 731.5h5M183 731.5h1M159 732.5h3M174 732.5h11M159 733.5h4M175 733.5h10M159 734.5h4M174 734.5h11M160 735.5h3M175 735.5h7M183 735.5h2M160 736.5h3M176 736.5h1M184 736.5h1M155 737.5h9M153 738.5h1M155 738.5h4M160 738.5h3M164 738.5h1M166 738.5h2M189 738.5h1M153 739.5h1M162 739.5h2M165 739.5h2M189 739.5h1M152 740.5h3M163 740.5h5M189 740.5h1M152 741.5h3M162 741.5h6M152 742.5h3M163 742.5h4M151 743.5h6M162 743.5h5M149 744.5h12M162 744.5h1M147 745.5h16M147 746.5h16M180 746.5h1M192 746.5h1M147 747.5h5M156 747.5h7M180 747.5h2M147 748.5h4M160 748.5h2M168 748.5h2M180 748.5h3M148 749.5h2M168 749.5h2M179 749.5h4M147 750.5h3M168 750.5h2M179 750.5h4M149 751.5h1M162 751.5h2M165 751.5h5M179 751.5h4M160 752.5h3M164 752.5h7M179 752.5h4M161 753.5h10M177 753.5h1M179 753.5h4M160 754.5h11M178 754.5h5M160 755.5h11M178 755.5h1M180 755.5h3M159 756.5h5M166 756.5h5M180 756.5h3M159 757.5h4M168 757.5h3M181 757.5h1M192 757.5h3M158 758.5h1M160 758.5h3M157 759.5h1M162 759.5h1M157 760.5h1" stroke="#003f5f" stroke-width="1" fill="none" shape-rendering="crispEdges"/>
<path d="M204 735.5h2M195 736.5h1M204 736.5h6M211 736.5h2M194 737.5h2M203 737.5h2M207 737.5h3M212 737.5h2M193 738.5h2M203 738.5h2M206 738.5h3M210 738.5h1M212 738.5h5M193 739.5h2M203 739.5h3M207 739.5h2M213 739.5h6M193 740.5h3M203 740.5h2M208 740.5h8M218 740.5h3M202 741.5h3M206 741.5h4M214 741.5h2M219 741.5h2M223 741.5h2M204 742.5h1M206 742.5h3M215 742.5h3M219 742.5h6M227 742.5h1M204 743.5h2M207 743.5h2M216 743.5h8M227 743.5h1M204 744.5h6M216 744.5h2M219 744.5h4M226 744.5h2M204 745.5h5M217 745.5h4M222 745.5h1M227 745.5h1M203 746.5h7M218 746.5h5M227 746.5h2M230 746.5h2M201 747.5h11M220 747.5h3M229 747.5h5M202 748.5h1M204 748.5h11M222 748.5h2M231 748.5h4M203 749.5h12M216 749.5h1M222 749.5h3M232 749.5h3M206 750.5h22M230 750.5h1M233 750.5h1M235 750.5h3M210 751.5h1M212 751.5h13M227 751.5h2M231 751.5h1M233 751.5h1M235 751.5h1M237 751.5h1M211 752.5h4M216 752.5h1M221 752.5h3M228 752.5h2M232 752.5h1M235 752.5h2M239 752.5h1M211 753.5h2M214 753.5h1M221 753.5h1M223 753.5h1M228 753.5h5M234 753.5h1M238 753.5h2M211 754.5h14M227 754.5h5M234 754.5h6M217 755.5h9M231 755.5h3M236 755.5h3M221 756.5h1M223 756.5h5M232 756.5h1M235 756.5h2M238 756.5h1M221 757.5h2M224 757.5h1M226 757.5h2M232 757.5h1M235 757.5h2M222 758.5h2M232 758.5h5M242 758.5h1" stroke="#000" stroke-width="1" fill="none" shape-rendering="crispEdges"/>
<path d="M205 737.5h2M205 738.5h1M206 739.5h1M205 740.5h3M216 740.5h2M205 741.5h1M216 741.5h3M225 741.5h1M205 742.5h1M218 742.5h1M225 742.5h1M206 743.5h1M224 743.5h3M218 744.5h1M223 744.5h3M221 745.5h1M223 745.5h4M223 746.5h4M223 747.5h6M203 748.5h1M224 748.5h7M225 749.5h7M228 750.5h2M231 750.5h2M234 750.5h1M211 751.5h1M229 751.5h2M232 751.5h1M234 751.5h1M236 751.5h1M238 751.5h1M210 752.5h1M215 752.5h1M217 752.5h4M230 752.5h2M233 752.5h2M237 752.5h2M213 753.5h1M215 753.5h6M222 753.5h1M233 753.5h1M235 753.5h3M232 754.5h2M234 755.5h2M222 756.5h1M233 756.5h2M223 757.5h1M225 757.5h1M233 757.5h2" stroke="#003f5f" stroke-width="1" fill="none" shape-rendering="crispEdges"/>
<path d="M250.5,679.6 Q256,694 253.4,696 Q250,705 246,709 Q240,717 234.2,723.9 L223.9,731.3" fill="none" stroke="#000" stroke-width="1.3" stroke-dasharray="6 2 3 2"/>
<path d="M232,662 L246,660 M252,661 L266,664 M270,662 L285,665 M213,668 L224,664" fill="none" stroke="#000" stroke-width="1.4"/>
<path d="M799 565.5h1M799 566.5h1M802 566.5h4M798 567.5h9M799 568.5h9M805 569.5h2M796 570.5h1M804 570.5h2M803 571.5h3M803 572.5h1M805 572.5h1M803 573.5h1M806 573.5h1M802 574.5h2M806 574.5h1M802 575.5h3M806 575.5h1M797 576.5h3M802 576.5h5M798 577.5h3M802 577.5h5M798 578.5h9M798 579.5h4M804 579.5h1M795 580.5h2M798 580.5h3M795 581.5h3M799 581.5h2M795 582.5h3M795 583.5h1M797 583.5h2M800 583.5h3M794 584.5h4M799 584.5h1M801 584.5h1M803 584.5h4M794 585.5h1M797 585.5h2M801 585.5h3M805 585.5h1M796 586.5h1M798 586.5h4M794 587.5h8M794 588.5h6M801 588.5h1M806 588.5h1M794 589.5h4M806 589.5h1M794 590.5h3M798 590.5h1M800 590.5h1M805 590.5h1M794 591.5h1M799 591.5h4M804 591.5h2M794 592.5h2M798 592.5h8M794 593.5h2M799 593.5h1M804 593.5h1M793 594.5h3M798 594.5h2M793 595.5h5M803 595.5h2M794 596.5h1M796 596.5h1M800 596.5h2M804 596.5h1M794 597.5h1M799 597.5h7M793 598.5h2M799 598.5h7M794 599.5h1M800 599.5h1M802 599.5h4M793 600.5h2M799 600.5h2M803 600.5h4M794 601.5h1M798 601.5h2M803 601.5h3M794 602.5h1M798 602.5h2M803 602.5h1M805 602.5h2M794 603.5h1M799 603.5h2M802 603.5h1M804 603.5h3M794 604.5h1M799 604.5h4M806 604.5h1M794 605.5h2M800 605.5h3M795 606.5h1M800 606.5h4M794 607.5h2M799 607.5h7M794 608.5h1M798 608.5h2M802 608.5h4M792 609.5h3M797 609.5h3M803 609.5h2M806 609.5h1M792 610.5h2M797 610.5h2M803 610.5h4M791 611.5h1M795 611.5h5M804 611.5h3M790 612.5h5M796 612.5h2M799 612.5h4M790 613.5h2M794 613.5h2M799 613.5h1M801 613.5h3M790 614.5h3M794 614.5h9M790 615.5h1M792 615.5h4M797 615.5h2M801 615.5h3M791 616.5h10M802 616.5h4M791 617.5h3M799 617.5h2M802 617.5h4M790 618.5h4M799 618.5h1M801 618.5h2M804 618.5h3M792 619.5h2M800 619.5h4M805 619.5h1M792 620.5h2M801 620.5h3M805 620.5h1M792 621.5h4M803 621.5h2M792 622.5h3M802 622.5h2M805 622.5h1M791 623.5h4M796 623.5h1M803 623.5h3M792 624.5h6M803 624.5h4M791 625.5h4M798 625.5h1M790 626.5h5M798 626.5h2M793 627.5h1M798 627.5h2M800 628.5h1M800 629.5h3M801 630.5h2M802 631.5h1M794 632.5h2M802 632.5h2M806 632.5h1M792 633.5h6M803 633.5h4M791 634.5h8M803 634.5h4M791 635.5h5M797 635.5h4M802 635.5h2M805 635.5h1M792 636.5h13M790 637.5h2M793 637.5h6M802 637.5h1M789 638.5h2M792 638.5h2M795 638.5h4M802 638.5h2M789 639.5h3M797 639.5h2M802 639.5h2M789 640.5h5M798 640.5h1M802 640.5h1M788 641.5h5M798 641.5h1M802 641.5h2M789 642.5h4M798 642.5h1M802 642.5h2M806 642.5h1M790 643.5h2M798 643.5h1M802 643.5h1M790 644.5h1M796 644.5h4M801 644.5h2M790 645.5h1M795 645.5h7M790 646.5h1M795 646.5h2M799 646.5h4M795 647.5h8M788 648.5h1M792 648.5h1M794 648.5h2M797 648.5h5M792 649.5h3M798 649.5h4M792 650.5h4M798 650.5h5M791 651.5h2M794 651.5h1M799 651.5h3M790 652.5h2M794 652.5h2M802 652.5h1M804 652.5h1M791 653.5h1M794 653.5h2M802 653.5h5M790 654.5h2M794 654.5h2M801 654.5h3M806 654.5h1M790 655.5h6M800 655.5h3M804 655.5h2M791 656.5h1M797 656.5h1M799 656.5h7M796 657.5h4M802 657.5h3M795 658.5h10M796 659.5h8M806 659.5h1M797 660.5h3M801 660.5h2M796 661.5h2M790 663.5h1M790 664.5h7M790 665.5h1M795 665.5h1M804 665.5h1M790 666.5h1M795 666.5h2M803 666.5h4M790 667.5h2M795 667.5h1M803 667.5h2M790 668.5h1M794 668.5h1M800 668.5h6M790 669.5h2M794 669.5h2M798 669.5h8M791 670.5h1M794 670.5h2M799 670.5h1M803 670.5h1M791 671.5h10M802 671.5h1M805 671.5h1M792 672.5h11M804 672.5h1M806 672.5h1M794 673.5h2M799 673.5h2M802 673.5h3M806 673.5h1M794 674.5h2M798 674.5h3M802 674.5h2M805 674.5h2M795 675.5h1M798 675.5h3M803 675.5h4M795 676.5h5M802 676.5h2M797 677.5h1M796 678.5h4M797 679.5h2M796 680.5h3M795 681.5h2M796 682.5h1M798 682.5h1M796 683.5h3M804 683.5h3M796 684.5h3M803 684.5h4M795 685.5h4M803 685.5h2M806 685.5h2M795 686.5h1M798 686.5h2M802 686.5h2M795 687.5h1M797 687.5h2M803 687.5h1M806 687.5h1M794 688.5h5M803 688.5h2M794 689.5h1M796 689.5h3M803 689.5h2M797 690.5h1M803 690.5h2M802 691.5h3M802 692.5h1" stroke="#000" stroke-width="1" fill="none" shape-rendering="crispEdges"/>
<path d="M797 568.5h2M796 569.5h9M797 570.5h7M796 571.5h7M796 572.5h7M797 573.5h6M797 574.5h5M797 575.5h5M800 576.5h2M801 577.5h1M802 579.5h2M805 579.5h2M801 580.5h6M798 581.5h1M801 581.5h6M798 582.5h10M796 583.5h1M799 583.5h1M803 583.5h4M798 584.5h1M800 584.5h1M802 584.5h1M795 585.5h2M799 585.5h2M795 586.5h1M797 586.5h1M800 593.5h4M800 594.5h5M798 595.5h5M805 595.5h1M795 596.5h1M797 596.5h3M802 596.5h2M805 596.5h2M795 597.5h4M806 597.5h1M795 598.5h4M795 599.5h5M795 600.5h4M807 600.5h1M795 601.5h3M806 601.5h2M795 602.5h3M795 603.5h4M795 604.5h4M796 605.5h4M796 606.5h4M796 607.5h3M795 608.5h3M795 609.5h2M805 609.5h1M791 610.5h1M794 610.5h3M790 611.5h1M792 611.5h3M795 612.5h1M798 612.5h1M792 613.5h2M796 613.5h3M800 613.5h1M793 614.5h1M799 615.5h2M801 616.5h1M801 617.5h1M800 618.5h1M803 618.5h1M804 619.5h1M804 620.5h1M791 621.5h1M805 621.5h1M791 622.5h1M804 622.5h1M795 625.5h3M795 626.5h3M789 627.5h4M794 627.5h4M788 628.5h12M789 629.5h11M788 630.5h13M789 631.5h13M789 632.5h5M796 632.5h6M789 633.5h3M798 633.5h5M789 634.5h2M799 634.5h4M789 635.5h2M796 635.5h1M801 635.5h1M804 635.5h1M806 635.5h1M788 636.5h4M805 636.5h2M788 637.5h2M792 637.5h1M803 637.5h5M791 638.5h1M794 638.5h1M804 638.5h4M792 639.5h5M804 639.5h3M794 640.5h4M803 640.5h4M793 641.5h5M804 641.5h3M793 642.5h5M804 642.5h2M792 643.5h6M803 643.5h4M791 644.5h5M803 644.5h4M791 645.5h4M802 645.5h6M791 646.5h4M803 646.5h5M790 647.5h5M803 647.5h4M789 648.5h3M793 648.5h1M796 648.5h1M802 648.5h5M789 649.5h3M795 649.5h3M802 649.5h4M789 650.5h3M796 650.5h2M803 650.5h2M790 651.5h1M795 651.5h4M802 651.5h5M789 652.5h1M796 652.5h6M803 652.5h1M805 652.5h2M789 653.5h2M796 653.5h6M789 654.5h1M796 654.5h5M789 655.5h1M796 655.5h4M789 656.5h2M792 656.5h5M798 656.5h1M788 657.5h8M788 658.5h7M788 659.5h8M804 659.5h2M790 660.5h7M800 660.5h1M803 660.5h4M790 661.5h6M798 661.5h9M790 662.5h18M791 663.5h17M789 664.5h1M797 664.5h10M789 665.5h1M796 665.5h8M805 665.5h2M789 666.5h1M797 666.5h6M789 667.5h1M796 667.5h7M789 668.5h1M795 668.5h5M789 669.5h1M796 669.5h2M790 670.5h1M796 670.5h3M790 671.5h1M790 672.5h2M790 673.5h4M801 673.5h1M791 674.5h3M801 674.5h1M792 675.5h3M801 675.5h2M793 676.5h2M800 676.5h2M804 676.5h3M792 677.5h5M798 677.5h10M792 678.5h4M800 678.5h8M791 679.5h6M799 679.5h9M793 680.5h3M799 680.5h9M794 681.5h1M797 681.5h10M794 682.5h2M797 682.5h1M799 682.5h8M794 683.5h2M799 683.5h5M794 684.5h2M799 684.5h4M799 685.5h4M800 686.5h2M799 687.5h4M799 688.5h4M799 689.5h4M798 690.5h5M796 691.5h6M799 692.5h3" stroke="#003f5f" stroke-width="1" fill="none" shape-rendering="crispEdges"/>
<rect x="803" y="578" width="3" height="100" fill="#003f5f"/>
<path d="M182.0,6.0 L200.0,42.0 L200.0,92.0 L188.0,112.0 L175.0,148.0 L170.0,160.0 L155.0,195.0 L150.0,210.0 L160.0,224.0 M241.0,6.0 L250.0,18.0 L260.0,32.0 L265.0,49.0 L275.0,60.0 L293.6,57.9 L302.0,53.0 L313.0,56.7 L338.0,71.4 L360.0,91.0 L379.8,108.4 L400.0,125.0 L405.0,134.0 M240.0,6.0 L228.0,20.0 L228.0,40.0 L225.0,55.0 L210.0,65.0 L200.0,70.0 M215.0,200.0 L229.6,184.7 L271.4,170.0 L298.5,162.6 L330.5,158.9 L352.7,150.2 L377.3,140.4 L390.0,138.0 L405.0,134.0 M367.0,128.0 L372.0,153.0 L387.0,163.0 L405.0,165.0 L420.0,162.0 L430.0,155.0 L437.0,130.0 L435.0,115.0 L430.0,105.0 L400.0,97.0 L390.0,98.0 L377.0,106.0 L367.0,128.0 M473.0,6.0 L472.0,18.0 L468.0,35.0 L460.0,50.0 L440.0,60.0 L430.0,70.0 L425.0,80.0 L420.0,90.0 L412.0,105.0 L408.0,115.0 L405.0,134.0 M590.0,6.0 L590.0,20.0 L598.0,37.0 L604.0,60.0 L600.0,73.0 L603.0,95.0 L591.0,111.0 L595.0,124.0 L611.0,142.0 L615.0,149.0 M405.0,134.0 L420.0,132.0 L437.0,133.0 L480.0,137.0 L515.0,137.0 L545.0,150.0 L555.0,158.0 L575.0,160.0 L606.0,148.0 L620.0,150.0 L640.0,148.0 L665.0,137.0 L690.0,125.0 L720.0,112.0 L745.0,95.0 L780.0,85.0 L806.0,72.0 M606.0,142.0 L630.0,140.0 L660.0,140.0 L670.0,160.0 L685.0,172.0 L690.0,185.0 L715.0,190.0 L745.0,185.0 L780.0,178.0 L806.0,173.0 M405.0,134.0 L425.0,160.0 L440.0,180.0 L460.0,200.0 L480.0,220.0 L485.0,232.0 L503.0,238.0 L515.0,237.0 M600.0,160.0 L587.0,172.0 L567.5,200.0 L545.0,215.0 L520.0,235.0 L515.0,237.0 M515.0,237.0 L535.0,250.0 L545.0,275.0 L553.0,300.0 L560.0,320.0 L570.0,335.0 L583.0,350.0 M505.0,238.0 L497.0,260.0 L485.0,290.0 L470.0,320.0 L455.0,335.0 L435.0,350.0 L420.0,365.0 L405.0,380.0 L395.0,390.0 L380.0,396.0 L365.0,400.0 L345.0,405.0 L335.0,415.0 L310.0,440.0 L290.0,460.0 L280.0,468.0 L260.0,473.0 L230.0,474.0 L200.0,475.0 L190.0,478.0 L152.0,480.0 L130.0,474.0 L100.0,477.0 L80.0,473.0 L50.0,465.0 L6.0,460.0 M405.0,134.0 L400.0,165.0 L398.0,200.0 L396.0,240.0 L397.0,290.0 L397.0,330.0 L400.0,340.0 L405.0,360.0 L402.0,390.0 L407.0,400.0 L420.0,425.0 L432.0,458.0 L440.0,472.0 L432.0,485.0 L425.0,505.0 L412.0,525.0 L400.0,545.0 L380.0,570.0 L350.0,595.0 L340.0,600.0 L320.0,610.0 L313.0,623.0 M405.0,370.0 L430.0,365.0 L460.0,364.0 L490.0,358.0 L520.0,352.0 L550.0,350.0 L583.0,350.0 L606.0,355.0 L640.0,365.0 L680.0,368.0 L720.0,372.0 L750.0,370.0 L790.0,350.0 L806.0,340.0 M583.0,350.0 L593.0,337.0 L606.0,330.0 L640.0,310.0 L670.0,290.0 L700.0,275.0 L725.0,258.0 L745.0,245.0 L770.0,228.0 L806.0,220.0 M720.0,200.0 L745.0,215.0 L760.0,240.0 L770.0,280.0 L780.0,290.0 L795.0,305.0 L806.0,310.0 M583.0,350.0 L590.0,366.0 L600.0,387.0 L606.0,405.0 L620.0,422.0 L632.0,432.0 L632.0,440.0 L630.0,480.0 L630.0,520.0 L640.0,540.0 L648.0,555.0 L655.0,585.0 L659.3,600.0 L666.9,620.3 L689.8,643.1 L707.5,661.0 L720.2,691.4 L738.0,726.9 L748.1,752.3 L754.5,790.4 L756.0,806.0 M630.0,430.0 L650.0,447.0 L680.0,460.0 L715.0,468.0 L755.0,472.0 L790.0,485.0 L806.0,495.0 M583.0,350.0 L575.0,365.0 L565.0,382.0 L550.0,405.0 L540.0,415.0 L525.0,430.0 L510.0,450.0 L490.0,462.0 L462.0,472.0 L440.0,472.0 M6.0,661.0 L30.0,655.0 L60.0,645.0 L75.0,642.0 L90.0,645.0 L110.0,640.0 L130.0,640.0 L160.0,648.0 L180.0,655.0 L190.0,657.0 L210.0,650.0 L240.0,645.0 L270.0,643.0 L300.0,636.0 L310.0,628.0 L330.0,625.0 L350.0,630.0 L375.0,637.0 L390.0,630.0 L400.0,624.0 L425.4,619.0 L443.1,616.5 L455.8,621.6 L476.1,615.2 L496.4,616.5 L514.2,615.2 L532.0,622.8 L547.2,626.6 L562.4,633.0 L577.7,639.3 L600.0,638.0 L606.0,639.3 L651.7,645.7 L682.1,653.3 L707.5,661.0 L745.6,661.0 L781.1,654.6 L788.7,653.3 M90.0,645.0 L95.0,655.0 L110.0,668.0 L125.0,672.0 L140.0,683.0 L160.0,686.0 L170.0,680.0 L185.0,668.0 L190.0,657.0 M165.0,232.0 L168.0,260.0 L172.0,290.0 L172.0,310.0 L176.0,345.0 L180.0,380.0 L180.0,400.0 L163.0,425.0 L160.0,460.0 L150.0,480.0 L140.0,500.0 L133.0,530.0 L130.0,570.0 L127.0,600.0 L127.0,625.0 L132.0,640.0 L135.0,660.0 L140.0,683.0 M258.0,475.0 L250.0,490.0 L245.0,505.0 L237.0,520.0 L228.0,535.0 L217.0,550.0 L215.0,570.0 L208.0,595.0 L205.0,600.0 L197.0,625.0 L190.0,645.0 L185.0,668.0 M6.0,257.0 L50.0,254.0 L80.0,245.0 L110.0,232.0 L140.0,222.0 L160.0,224.0 M175.0,220.0 L190.0,210.0 L200.0,205.0 L215.0,200.0 M6.0,620.0 L12.0,625.0 L13.0,645.0 L15.0,660.0 M806.0,545.0 L800.0,560.0 L790.0,600.0 L787.5,633.0 L786.2,650.8 L793.8,666.0 L806.0,696.4 M215.0,560.0 L215.0,575.0 L205.0,600.0" transform="translate(0.3,0.3)" fill="none" stroke="#8a7618" stroke-width="1" stroke-linejoin="round" shape-rendering="crispEdges"/>
<ellipse cx="584" cy="350" rx="9" ry="10" fill="none" stroke="#8a7618" stroke-width="1" shape-rendering="crispEdges"/>
<ellipse cx="168" cy="227" rx="7" ry="6" fill="none" stroke="#8a7618" stroke-width="1" shape-rendering="crispEdges"/>
<ellipse cx="786" cy="656" rx="8" ry="10" fill="none" stroke="#8a7618" stroke-width="1" shape-rendering="crispEdges"/>
<path d="M6.0,105.4 L154.7,105.4 L161.0,114.5 L160.0,123.0 L150.0,133.0 L140.0,146.0 L138.0,149.0 L187.0,149.0 M6.0,415.3 L78.0,415.3 M307.2,6.6 L306.8,9.9 L308.4,14.6 L307.4,16.5 L304.3,18.0 L301.2,17.6 L297.6,18.9 L295.2,21.2 L292.6,20.7 L288.1,20.7 L283.8,20.8 L279.9,24.1 L278.5,29.3 L277.7,32.2 L278.3,35.8 L279.5,39.6 L281.0,45.3 L280.3,46.2 L279.8,50.8 L278.2,54.1 L275.0,53.1 L270.6,53.0 L269.1,48.8 L265.4,48.2 L261.5,45.7 L258.6,45.5 L255.7,44.0 L252.3,42.9 L250.8,40.5 L247.0,40.5 L243.7,40.0 L238.7,40.1 L236.7,41.8 L233.9,44.1 L230.7,46.3 L229.6,50.2 L227.1,52.6 L226.3,55.6 L228.0,60.0 M210.0,104.7 L311.0,104.7 L311.0,90.0 L325.0,90.0 L325.0,91.6 L400.0,91.0 L422.0,91.6 L445.0,92.6 L470.0,93.6 L510.0,93.6 L530.0,94.6 L560.0,96.0 L600.0,96.6 L636.0,96.6 L700.0,95.6 L768.6,94.8 L787.0,94.8 L806.0,98.5 M634.5,95.0 L640.1,92.2 L642.6,91.7 L649.8,91.7 L653.1,87.9 L656.0,86.5 L658.5,84.2 L662.6,85.8 L668.9,83.7 L673.7,79.4 L676.6,79.3 L682.5,78.0 L687.3,72.6 L690.4,72.7 L693.5,66.7 L696.9,62.4 L701.7,58.5 L703.7,52.2 L708.6,49.3 L712.9,48.1 L715.7,44.0 L720.4,41.7 L723.3,38.7 L730.6,35.2 L732.2,35.0 L737.1,32.0 L741.9,28.6 L748.0,25.4 L749.7,22.8 L753.9,20.5 L756.2,19.7 L759.5,16.4 L763.6,13.5 M749.5,7.0 L756.2,10.8 L760.3,12.3 L761.7,12.2 L766.6,16.7 L767.6,18.5 L765.9,26.0 L770.7,30.3 L773.1,31.9 L778.1,37.9 L784.1,38.0 L789.2,38.6 L793.5,39.1 L794.5,39.8 L798.8,34.9 L806.0,32.0 M788.2,96.3 L784.9,99.0 L782.3,104.7 L783.5,109.0 L782.5,113.1 L779.6,117.2 L778.9,119.7 L774.2,121.7 L768.8,122.2 L768.6,125.4 L765.9,131.4 L763.4,134.3 L756.4,137.9 L755.2,138.1 L748.4,138.8 L745.5,137.7 L741.8,137.4 L733.8,139.1 L729.4,141.7 L727.6,142.7 L722.6,146.1 L719.2,149.9 L710.1,151.4 L710.4,147.7 L708.4,143.4 L705.5,146.6 L698.5,148.7 L695.7,150.3 L692.9,153.6 L690.8,160.8 L691.8,161.7 L691.1,166.1 L684.3,171.0 L680.5,169.9 L674.5,171.6 L669.8,176.0 L665.7,175.7 L664.7,177.6 L661.9,179.0 L657.9,183.2 L652.7,184.8 L647.8,186.1 L645.2,186.5 L639.9,188.8 L634.6,187.7 L631.0,189.7 L625.0,193.1 L619.4,192.8 L614.8,197.7 L611.4,199.0 L609.8,205.7 L607.0,207.6 L607.5,212.4 L602.1,214.9 L599.9,216.6 L595.5,214.2 L591.2,217.3 L590.4,223.9 L591.3,225.5 L589.8,229.3 L588.8,234.0 L589.0,238.0 M145.0,238.2 L300.0,238.2 L335.0,237.3 L400.0,238.0 L492.0,238.5 L589.0,238.5 L660.0,238.0 L679.0,238.0 M300.0,238.0 L307.0,246.0 L307.0,250.0 L303.0,285.0 L300.0,320.0 L295.0,370.0 L292.0,400.0 L288.0,450.0 L281.0,500.0 L281.0,520.0 L282.0,560.0 L283.4,647.0 M492.0,238.0 L497.0,270.0 L505.0,305.0 L512.0,345.0 L518.0,385.0 L520.0,400.0 L525.0,428.0 L532.0,450.0 L538.0,465.0 L537.0,475.0 L545.0,483.0 L535.0,492.0 L533.0,500.0 L533.0,540.0 L532.0,570.0 L537.0,590.0 L539.0,600.0 L547.2,619.0 L600.0,622.8 L606.0,623.4 L672.0,627.9 L743.0,631.7 L745.6,648.2 L758.3,650.8 L759.6,630.5 L758.3,615.2 L768.4,610.2 L783.7,615.2 L800.0,620.0 M344.0,595.0 L400.0,594.6 L538.0,594.6 M344.0,595.0 L342.0,600.0 L347.0,610.0 L360.0,625.0 L357.0,633.0 L356.0,641.0 L361.0,646.0 M679.0,238.0 L700.0,230.0 L707.0,230.7 L719.0,223.3 L731.0,219.6 L740.0,220.3 L760.0,221.0 L790.0,223.0 L806.0,223.0 M678.4,238.5 L678.2,244.1 L673.9,244.4 L670.9,246.4 L669.5,248.0 L666.0,251.3 L662.5,254.8 L662.4,259.3 L658.7,262.4 L661.1,267.0 L664.8,269.8 L666.8,272.6 L669.2,275.8 L669.8,277.9 L672.8,279.7 L675.4,280.8 L677.2,282.8 L679.5,284.0 L683.8,285.8 L687.3,285.5 L689.1,285.6 L691.1,285.5 L694.9,284.2 L695.2,288.1 L696.4,290.9 L698.3,293.7 L698.0,297.0 L699.3,299.3 L700.2,302.7 L700.9,306.4 L704.2,308.7 L704.6,313.1 L703.8,314.1 L707.5,318.4 L708.7,319.1 L709.8,323.5 L712.7,325.8 L712.6,328.4 L714.7,330.6 L716.6,333.2 L720.3,334.6 L721.8,336.3 L725.2,338.2 L727.1,340.3 L729.6,341.0 L731.6,343.7 L734.0,344.3 L736.4,347.9 L740.1,350.1 L741.3,352.3 L744.6,353.9 L746.2,358.3 L749.0,358.5 L751.9,361.3 L753.9,362.9 L757.2,365.6 L758.7,366.1 L762.5,369.5 L765.0,369.9 L765.9,372.7 L764.8,376.5 L767.6,380.4 L766.4,383.5 L769.9,385.7 L771.2,389.3 L772.3,392.4 L774.7,396.1 L776.8,399.7 L779.9,402.7 L784.3,402.7 L787.7,405.2 L789.9,408.1 L791.3,410.0 L793.3,412.1 L796.2,414.5 L797.8,417.3 L797.2,420.7 L797.3,423.0 L798.9,426.8 L801.0,431.3 L800.8,433.4 L803.0,437.5 L806.0,440.0 M45.0,594.5 L186.3,594.5 L183.0,610.0 L178.0,622.0 L180.0,632.0 L187.0,640.0 L190.0,652.0 L195.0,665.0 L198.0,668.0" transform="translate(0.3,0.3)" fill="none" stroke="#000" stroke-width="1.2" stroke-linejoin="round" shape-rendering="crispEdges"/>
<polyline points="203.3,5.6 203.2,6.3 203.2,7.1 203.2,7.8 203.2,8.6 203.2,9.4 203.3,10.2 203.4,11.0 203.6,11.7 203.8,12.5 204.0,13.3 204.2,14.0 204.5,14.8 204.8,15.5 205.2,16.2 205.6,16.8 206.0,17.5 206.4,18.1 206.8,18.6 207.1,19.2 207.3,20.3 207.3,20.9 207.1,21.4 206.8,21.9 206.4,22.4 205.9,22.8 205.2,23.3 204.5,23.8 203.7,24.4 202.9,25.1 202.2,25.9 201.5,26.7 201.0,27.7 200.7,28.7 200.6,29.8 200.7,31.0 201.0,32.1 202.9,33.9 204.1,34.1 205.3,34.2 206.5,34.2 207.5,34.2 208.3,34.1 208.9,34.1 209.3,34.1 209.4,34.3 209.3,34.7 209.0,35.3 208.5,36.0 208.0,36.9 207.4,38.0 206.8,39.3 206.4,40.6 206.1,41.9 206.1,43.3 206.3,44.5 206.8,45.7 207.5,46.7 208.4,47.5 209.5,48.1 211.6,48.8 212.9,48.7 214.2,48.4 215.3,48.0 216.3,47.6 217.2,47.3 217.9,47.0 218.4,46.9 218.8,47.0 219.0,47.2 219.1,47.6 219.1,48.3 219.1,49.0 219.1,49.9 219.1,50.9 219.2,52.0 219.4,53.1 219.7,54.1 220.1,55.1 220.6,56.0 221.3,56.8 222.1,57.5 223.0,58.0 224.0,58.3 225.0,58.6 225.0,58.3 225.9,59.0 226.7,59.5 227.6,60.0 228.4,60.4 229.0,60.8 229.6,61.1 230.0,61.4 230.2,61.8 230.2,62.1 230.0,62.5 229.6,63.0 229.1,63.6 228.5,64.3 227.8,65.1 227.1,66.0 226.5,67.0 226.0,68.1 225.6,69.2 225.7,68.5 225.2,69.6 224.9,70.7 224.9,71.9 225.1,73.1 225.5,74.3 226.1,75.5 226.9,76.5 227.6,77.5 228.4,78.3 229.0,79.0 229.6,79.6 229.9,80.0 229.9,80.3 229.7,80.5 229.3,80.7 228.6,80.9 227.7,81.1 226.7,81.3 225.6,81.7 224.4,82.2 223.4,82.8 222.4,83.5 222.5,83.5 221.6,84.1 220.8,84.9 220.2,85.8 219.8,86.7 219.5,87.8 219.4,88.8 219.3,89.8 219.3,90.8 219.3,91.7 219.3,92.4 219.2,93.1 219.0,93.6 218.8,94.1 218.4,94.4 218.0,94.7 217.4,95.0 216.8,95.3 216.2,95.6 215.5,95.9 214.8,96.2 214.1,96.6 213.5,97.0 212.8,97.5 212.3,98.1 211.7,98.7 211.2,99.3 210.8,99.9 210.3,100.5 209.9,101.2 209.5,101.8 209.1,102.5 208.8,103.1 208.4,103.8 208.1,104.4 207.8,105.1 207.5,105.7 207.2,106.3 206.9,106.9 206.6,107.5 206.3,107.9 206.0,108.2 205.6,108.7 205.1,109.1 204.5,109.6 203.9,110.0 203.2,110.5 202.4,111.0 201.7,111.5 200.9,112.2 200.2,112.9 199.7,113.7 199.2,114.6 198.9,115.6 198.7,116.6 198.7,117.7 198.9,118.8 199.1,119.8 199.5,120.8 199.9,121.8 200.2,122.6 200.5,123.2 200.7,123.8 200.6,124.2 200.4,124.5 200.0,124.7 199.4,124.8 198.5,124.9 197.6,125.1 196.5,125.3 195.3,125.6 194.0,126.1 192.9,126.7 192.0,127.4 191.3,128.3 190.7,129.3 190.4,130.4 190.3,131.5 190.4,132.6 190.6,133.8 191.0,134.9 191.5,135.9 192.0,136.9 192.4,137.7 192.8,138.4 193.1,139.0 193.2,139.5 193.2,139.9 192.9,140.2 192.6,140.2 192.0,140.6 191.3,140.9 190.6,141.3 189.7,141.8 188.9,142.4 188.0,143.0 187.2,143.7 186.5,144.5 185.9,145.4 185.5,146.3 185.2,147.3 185.1,148.3 185.1,149.4 185.8,151.3 186.6,152.1 187.4,152.7 188.3,153.2 189.2,153.7 190.0,154.1 190.7,154.4 191.3,154.7 191.7,155.0 191.9,155.4 191.9,155.8 191.7,156.2 191.3,156.8 190.8,157.5 191.7,159.6 190.6,159.2 189.4,158.9 188.1,158.6 186.8,158.6 185.6,158.7 184.4,159.0 183.4,159.6 182.5,160.4 181.8,161.5 181.3,162.7 181.0,164.1 180.9,165.5 180.9,166.9 181.1,168.2 181.4,169.4 181.6,170.4 181.8,171.1 181.9,171.6 183.0,170.5 182.7,170.5 182.2,170.5 181.3,170.3 180.3,170.1 179.0,170.0 177.7,169.9 176.3,170.0 174.9,170.3 173.7,170.7 172.6,171.4 171.7,172.2 171.0,173.2 170.6,174.3 170.4,175.5 170.4,176.7 170.5,177.9 170.8,179.1 171.1,180.1 171.4,181.1 171.7,181.9 171.9,182.6 171.9,183.1 171.7,183.7 171.4,184.0 171.0,184.3 170.4,184.5 169.8,184.7 169.0,184.9 168.3,185.1 167.5,185.4 166.7,185.8 165.9,186.3 165.2,186.8 164.6,187.3 164.0,188.0 163.5,188.6 163.0,189.3 162.6,190.1 162.3,190.8 162.0,191.6 161.7,192.3 161.4,193.0 161.2,193.7 160.9,194.4 160.7,195.1 160.7,195.5 160.6,196.1 160.6,196.8 160.4,197.4 160.2,198.0 160.0,198.5 159.6,199.1 159.2,199.6 158.7,200.2 158.1,200.7 157.5,201.3 156.9,202.0 156.2,202.7 155.7,203.5 155.1,205.2 155.2,206.2 155.4,207.1 155.8,208.1 156.3,208.9 156.9,209.7 157.7,210.4 158.4,211.1 159.2,211.6 159.9,212.1 160.6,212.5 161.1,212.9 161.4,213.3 161.6,213.7 161.5,214.1 161.3,214.6 161.0,215.1 160.5,215.8 159.9,216.5 159.3,217.3 158.8,218.3 159.3,218.3 158.4,218.7 157.5,219.4 156.7,220.1 156.1,220.9 155.7,221.9 155.4,222.9 155.3,223.9 155.3,224.9 155.3,226.0 155.4,226.9 155.6,227.8 155.7,228.6 155.7,229.2 155.7,229.8 155.5,230.3 155.3,230.7 154.9,231.1 154.4,231.4 153.9,231.7 153.2,232.1 152.4,232.3 151.6,232.5 150.8,232.7 150.0,233.1 149.1,233.4 148.4,233.9 147.6,234.4 146.9,235.1 146.4,235.8 145.8,236.5 145.4,237.4 145.1,238.3 144.9,239.2 144.8,240.1 145.6,240.8 146.3,241.4 147.0,241.8 147.6,242.3 148.1,242.7 148.4,243.1 148.6,243.5 148.6,244.0 148.4,244.5 148.1,245.0 147.6,245.7 148.5,247.8 147.6,247.2 146.6,246.6 145.5,246.1 144.3,245.7 143.1,245.5 141.9,245.5 140.8,245.8 139.7,246.3 138.8,247.1 138.0,248.2 137.3,249.4 136.8,250.7 136.5,252.1 136.3,253.4 136.3,254.6 136.2,255.6 136.2,256.3 139.1,254.6 139.1,254.8 138.8,254.8 138.2,254.6 137.3,254.5 136.1,254.3 134.8,254.2 133.3,254.2 131.9,254.4 130.4,254.7 129.1,255.3 128.1,256.0 127.2,256.9 126.6,258.0 126.3,259.2 126.3,260.5 126.5,261.8 126.9,263.1 127.4,264.3 128.0,265.4 128.6,266.3 129.6,266.7 130.2,267.2 130.5,267.7 130.6,268.0 130.5,268.3 130.2,268.6 129.7,269.0 129.1,269.3 128.4,269.7 127.6,270.2 126.8,270.8 126.1,271.5 125.4,272.2 124.8,273.0 124.4,273.8 124.1,274.7 123.9,275.6 123.8,276.6 123.9,277.5 124.0,278.4 124.2,279.3 124.5,280.1 124.8,280.9 125.1,281.7 125.3,282.4 125.6,283.0 125.8,283.6 125.9,284.2 125.9,284.7 125.4,286.0 125.0,286.3 124.5,286.6 123.8,286.7 123.1,286.9 122.3,287.0 121.5,287.2 120.6,287.4 119.6,287.7 118.7,288.1 117.9,288.5 117.1,289.1 116.4,289.9 115.8,290.7 115.4,291.6 115.1,292.6 115.0,293.6 114.9,294.7 115.0,295.7 115.1,296.6 115.3,297.4 115.3,298.1 115.4,298.7 115.2,299.1 115.0,299.4 114.6,299.6 114.0,299.7 113.3,299.7 112.5,299.7 111.5,299.8 110.5,299.9 109.5,300.1 108.5,300.4 107.6,300.8 106.7,301.4 106.0,302.1 105.4,302.9 104.9,303.7 104.6,304.7 104.4,305.6 104.3,306.5 104.2,307.5 104.2,308.4 104.2,309.1 104.1,309.8 104.0,310.4 103.8,311.0 103.6,311.4 103.2,311.8 102.8,312.2 102.2,312.6 101.7,312.9 101.1,313.3 100.4,313.7 99.8,314.1 99.1,314.6 98.5,315.1 97.9,315.6 97.3,316.2 96.7,316.8 96.1,317.5 95.7,318.3 95.4,319.0 95.1,319.8 94.8,320.6 94.7,321.5 94.5,322.3 94.4,323.1 94.4,323.9 94.3,324.6 94.3,325.3 94.2,325.9 94.1,326.5 93.9,326.9 93.6,327.3 93.1,327.7 92.6,327.9 91.8,328.2 91.0,328.4 89.7,328.7 88.8,329.3 87.9,329.9 87.1,330.7 86.3,331.6 85.7,332.5 85.4,333.6 85.2,334.8 85.3,336.0 85.6,337.2 86.2,338.4 86.9,339.5 87.7,340.6 88.5,341.5 90.1,340.7 91.0,340.9 91.7,341.1 92.0,341.2 92.1,341.4 91.8,341.7 91.3,342.2 90.5,342.7 89.6,343.5 88.6,344.4 87.6,345.4 89.2,345.3 87.7,345.2 86.4,345.3 85.1,345.7 84.0,346.3 83.2,347.2 82.5,348.3 82.1,349.5 81.9,350.8 81.8,352.2 81.9,353.5 82.1,354.8 82.4,355.9 82.6,356.8 82.8,357.5 82.8,358.0 82.7,358.4 83.5,356.6 83.1,356.9 82.5,357.1 81.8,357.4 81.0,357.8 80.0,358.3 79.1,358.8 78.2,359.4 77.4,360.2 76.7,361.0 76.2,361.9 75.8,362.8 75.6,363.8 75.7,365.8 76.2,366.7 76.8,367.6 77.5,368.3 78.3,369.0 79.0,369.6 79.8,370.2 80.5,370.7 81.1,371.1 81.6,371.5 81.9,371.9 82.1,372.3 82.1,372.8 82.0,373.2 81.7,373.8 81.2,374.4 80.7,375.1 80.1,375.9 79.6,376.8 79.0,377.7 78.6,378.8 78.2,379.8 78.1,380.9 78.2,382.0 78.4,383.1 78.9,384.1 79.6,385.1 80.4,385.9 81.2,386.6 82.2,387.3 83.2,387.8 84.1,388.3 84.9,388.7 85.5,389.0 85.9,389.3 86.1,389.6 86.1,389.9 85.8,390.3 85.3,390.8 84.7,391.4 84.0,392.0 83.3,392.8 82.5,393.7 81.9,394.6 81.4,395.7 81.1,396.7 81.0,397.8 81.1,398.8 81.3,399.8 81.7,399.6 81.7,400.6 81.9,401.6 82.1,402.6 82.4,403.5 82.6,404.3 82.8,405.0 82.9,405.6 82.9,406.2 82.8,406.8 82.6,407.3 82.3,407.7 81.9,408.2 81.5,408.7 81.0,409.2 80.3,409.6 80.2,410.3 80.0,411.1 79.9,411.9 79.9,412.7 79.9,413.4 79.9,414.2 79.9,415.0 80.0,415.8 80.2,416.6 80.3,417.3 80.5,418.1 80.6,418.8 80.9,419.6 81.1,420.3 81.3,421.0 81.5,421.7 81.7,422.3 81.9,423.0 82.1,423.6 82.3,424.2 82.3,424.8 82.3,425.3 82.2,425.9 82.0,426.5 81.7,427.1 81.3,427.8 80.9,428.5 80.4,429.3 79.9,430.1 79.6,431.1 79.3,432.0 79.1,433.0 79.2,434.0 79.4,435.1 79.8,436.0 80.4,437.0 81.1,437.8 82.0,438.6 82.9,439.3 83.7,439.8 84.5,440.3 85.1,438.9 85.6,439.0 86.0,439.1 86.1,439.4 86.0,439.8 85.7,440.4 85.3,441.2 84.8,442.1 84.3,443.2 83.8,444.4 83.5,445.7 83.4,447.0 83.4,448.3 83.7,449.5 84.2,450.5 85.0,451.5 85.9,452.2 87.0,452.8 88.2,453.2 89.5,453.4 89.4,453.6 90.2,454.4 91.0,455.2 91.6,455.8 92.1,456.3 92.3,456.7 92.4,457.1 92.2,457.4 91.8,457.7 91.3,458.0 90.6,458.4 89.7,458.8 88.8,459.3 87.9,459.9 86.3,461.9 86.5,463.0 86.8,464.0 87.2,465.0 87.8,465.8 88.5,466.6 89.3,467.2 90.2,467.7 91.2,468.0 92.3,468.3 93.3,468.4 94.3,468.5 95.3,468.5 96.2,468.4 96.9,468.4 97.5,468.4 98.0,468.5 98.3,468.7 98.4,469.1 98.4,469.6 98.3,470.2 99.9,472.6 98.9,472.7 97.8,472.7 96.6,472.9 95.4,473.1 94.3,473.5 93.2,474.1 92.2,474.8 91.5,475.7 90.9,476.8 90.6,478.0 90.6,479.2 90.7,480.5 91.0,481.8 91.5,483.1 92.0,484.2 92.6,485.2 93.1,486.0 93.5,486.7 93.6,487.1 94.2,485.8 94.0,486.0 93.5,486.2 92.7,486.4 91.7,486.6 90.6,487.0 89.5,487.5 88.3,488.1 87.2,488.8 86.3,489.7 85.6,490.7 85.1,491.7 84.8,492.9 84.8,494.0 85.4,493.7 85.2,494.8 85.1,495.9 85.2,497.0 85.3,498.0 85.4,498.9 85.5,499.7 85.5,500.4 85.4,500.9 85.1,501.3 84.8,501.7 84.4,501.9 83.8,502.2 83.2,502.4 82.5,502.6 81.7,502.9 81.0,503.2 80.3,503.6 79.6,504.0 78.9,504.5 78.3,505.1 77.7,505.6 77.2,506.3 76.7,506.9 76.3,507.5 75.9,508.2 75.5,508.9 75.1,509.5 74.8,510.2 74.7,510.9 74.5,511.7 74.4,512.3 74.2,513.0 74.1,513.7 73.9,514.3 73.7,514.9 73.4,515.4 73.1,516.0 72.7,516.5 72.3,516.9 71.7,517.4 71.2,517.9 70.5,518.3 69.8,518.9 69.1,519.5 68.5,520.1 67.9,520.8 67.4,521.6 67.0,522.5 66.7,523.5 66.6,524.4 66.7,525.4 66.8,526.4 67.0,527.4 67.3,528.3 67.7,529.1 68.0,529.9 68.2,530.5 68.3,531.0 68.2,531.3 68.0,531.6 67.5,531.8 66.9,531.9 66.1,532.1 65.1,532.3 64.1,532.5 63.0,532.8 62.0,533.2 61.0,533.8 60.1,534.5 59.3,535.4 58.8,536.4 58.5,537.4 58.4,538.5 58.5,539.6 58.7,540.7 59.0,541.8 59.4,542.8 59.8,543.6 60.1,544.4 60.4,545.1 60.6,545.7 60.6,546.2 60.5,546.5 60.2,546.9 59.7,547.2 59.1,547.4 58.4,547.7 57.6,548.1 56.8,548.4 55.9,548.9 55.1,549.4 54.3,550.0 53.6,550.8 53.0,551.6 52.5,552.4 52.2,553.3 52.0,554.3 51.9,555.3 52.0,556.3 52.1,557.3 52.4,558.3 52.7,559.2 53.0,560.1 53.3,560.8 53.6,561.5 53.8,562.1 53.9,562.5 53.6,563.3 53.3,563.6 52.8,563.7 52.1,563.8 51.2,563.9 50.2,564.0 49.1,564.1 47.9,564.3 46.7,564.7 45.5,565.1 44.4,565.8 43.5,566.6 42.8,567.6 42.4,568.7 42.2,570.0 42.2,571.3 43.1,573.7 44.1,574.7 45.3,575.6 46.4,576.3 47.5,576.8 48.4,577.3 49.0,577.6 49.4,577.8 49.4,577.9 49.1,578.1 48.5,578.3 47.6,578.5 46.5,578.9 45.3,579.3 44.0,580.0 42.8,580.7 41.6,581.6 40.7,582.7 39.9,584.5 39.7,585.8 39.9,587.0 40.3,588.2 41.0,589.3 41.9,590.3 42.9,591.1 43.9,591.8 44.9,592.4 45.9,593.0 46.7,593.4 47.3,593.8 47.7,594.1 45.0,594.5" fill="none" stroke="#000" stroke-width="1.5" stroke-linejoin="round" shape-rendering="crispEdges"/>
<circle cx="407" cy="407" r="159.5" fill="none" stroke="#d2d2d2" stroke-width="1" shape-rendering="crispEdges" stroke-dasharray="740.63 22 1002.17"/>
<circle cx="407" cy="407" r="279.5" fill="none" stroke="#d2d2d2" stroke-width="1" shape-rendering="crispEdges" stroke-dasharray="1306.11 22 1756.15"/>
<circle cx="407" cy="407" r="399.5" fill="none" stroke="#d2d2d2" stroke-width="1" shape-rendering="crispEdges" stroke-dasharray="1871.60 22 2510.13"/>
<circle cx="407" cy="407" r="519.5" fill="none" stroke="#d2d2d2" stroke-width="1" shape-rendering="crispEdges"/>
<circle cx="407" cy="407" r="39.5" fill="none" stroke="#ff0000" stroke-width="1.3" shape-rendering="crispEdges" stroke-dasharray="180.14 12 248.19"/>
<text x="399.5" y="371.1" font-size="10.2" fill="#f6f0a8" textLength="12.7" lengthAdjust="spacingAndGlyphs" stroke="#2a2220" stroke-width="0.5" paint-order="stroke">31</text>
<text x="396.1" y="251.1" font-size="10.2" fill="#f6f0a8" textLength="19.9" lengthAdjust="spacingAndGlyphs" stroke="#2a2220" stroke-width="0.5" paint-order="stroke">125</text>
<text x="395.0" y="131.1" font-size="10.2" fill="#f6f0a8" textLength="20.8" lengthAdjust="spacingAndGlyphs" stroke="#2a2220" stroke-width="0.5" paint-order="stroke">219</text>
<text x="394.7" y="11.1" font-size="10.2" fill="#f6f0a8" textLength="21.3" lengthAdjust="spacingAndGlyphs" stroke="#2a2220" stroke-width="0.5" paint-order="stroke">313</text>
<rect x="142.5" y="10.5" width="7" height="1.3" fill="#f0a800"/>
<rect x="132.5" y="40.4" width="7" height="1.3" fill="#e06010"/><rect x="135.4" y="37.5" width="1.3" height="7" fill="#e06010"/>
<circle cx="170" cy="95" r="4" fill="none" stroke="#e06010" stroke-width="1.2"/><rect x="168" y="94.5" width="4" height="1.2" fill="#e06010"/>
<rect x="532.5" y="83.4" width="7" height="1.3" fill="#ffc800"/><rect x="535.4" y="80.5" width="1.3" height="7" fill="#ffc800"/>
<rect x="636.5" y="45.4" width="7" height="1.3" fill="#ffe000"/><rect x="639.4" y="42.5" width="1.3" height="7" fill="#ffe000"/>
<rect x="676.5" y="191.5" width="7" height="1.3" fill="#e88a10"/>
<rect x="779.5" y="185.5" width="7" height="1.3" fill="#ffe000"/>
<rect x="750.5" y="196.5" width="7" height="1.3" fill="#e88a10"/>
<rect x="685.5" y="221.5" width="7" height="1.3" fill="#f0a010"/>
<rect x="690.5" y="225.5" width="7" height="1.3" fill="#e89010"/>
<rect x="668.5" y="227.5" width="7" height="1.3" fill="#e89010"/>
<rect x="672.5" y="231.5" width="7" height="1.3" fill="#e06010"/>
<rect x="667.5" y="239.5" width="7" height="1.3" fill="#e89010"/>
<rect x="699.5" y="229.5" width="7" height="1.3" fill="#f0a010"/>
<rect x="714.5" y="227.5" width="7" height="1.3" fill="#f0a010"/>
<rect x="706.5" y="247.5" width="7" height="1.3" fill="#f0a010"/>
<rect x="680.5" y="251.5" width="7" height="1.3" fill="#e06010"/>
<rect x="692.5" y="262.5" width="7" height="1.3" fill="#e89010"/>
<rect x="685.5" y="264.5" width="7" height="1.3" fill="#e06010"/>
<rect x="725.5" y="261.5" width="7" height="1.3" fill="#f09010"/>
<rect x="734.5" y="259.4" width="7" height="1.3" fill="#ffa800"/><rect x="737.4" y="256.5" width="1.3" height="7" fill="#ffa800"/>
<rect x="752.5" y="221.5" width="7" height="1.3" fill="#e06010"/>
<rect x="754.5" y="223.5" width="7" height="1.3" fill="#e88a10"/>
<rect x="632.5" y="243.5" width="7" height="1.3" fill="#e88a10"/>
<rect x="625.5" y="263.5" width="7" height="1.3" fill="#e88a10"/>
<rect x="617.5" y="266.4" width="7" height="1.3" fill="#e06010"/><rect x="620.4" y="263.5" width="1.3" height="7" fill="#e06010"/>
<rect x="750.5" y="274.5" width="7" height="1.3" fill="#e88a10"/>
<rect x="756.5" y="281.4" width="7" height="1.3" fill="#e88a10"/><rect x="759.4" y="278.5" width="1.3" height="7" fill="#e88a10"/>
<rect x="782.5" y="309.5" width="7" height="1.3" fill="#e88a10"/>
<rect x="728.5" y="315.5" width="7" height="1.3" fill="#e88a10"/>
<rect x="756.5" y="344.5" width="7" height="1.3" fill="#e88a10"/>
<rect x="731.5" y="349.5" width="7" height="1.3" fill="#e88a10"/>
<rect x="686.5" y="519.5" width="7" height="1.3" fill="#e88a10"/>
<rect x="661.5" y="589.4" width="7" height="1.3" fill="#ffc800"/><rect x="664.4" y="586.5" width="1.3" height="7" fill="#ffc800"/>
<rect x="788.5" y="607.5" width="7" height="1.3" fill="#e88a10"/>
</g>
<rect x="9.5" y="759.5" width="242.5" height="43" fill="#000" stroke="#a8a8a8"/>
<text x="12.7" y="770.5" font-size="8.8" fill="#d8d8d8" textLength="36.8" lengthAdjust="spacingAndGlyphs">Symbols</text>
<text x="52.4" y="770.5" font-size="8.8" fill="#d8d8d8" textLength="18.2" lengthAdjust="spacingAndGlyphs">-CG</text>
<text x="77.8" y="770.5" font-size="8.8" fill="#d8d8d8" textLength="14.7" lengthAdjust="spacingAndGlyphs">-IC</text>
<text x="98.9" y="770.5" font-size="8.8" fill="#d8d8d8" textLength="20.5" lengthAdjust="spacingAndGlyphs">+CG</text>
<text x="123.2" y="770.5" font-size="8.8" fill="#d8d8d8" textLength="18.5" lengthAdjust="spacingAndGlyphs">+IC</text>
<text x="152.5" y="770.5" font-size="8.8" fill="#d8d8d8" textLength="91.0" lengthAdjust="spacingAndGlyphs">Strike age color codes</text>
<text x="12.7" y="783.6" font-size="8.8" fill="#d8d8d8" textLength="28.6" lengthAdjust="spacingAndGlyphs">Recent</text>
<text x="12.7" y="796.6" font-size="8.8" fill="#d8d8d8" textLength="15.4" lengthAdjust="spacingAndGlyphs">Old</text>
<circle cx="60.3" cy="780.5" r="4" fill="none" stroke="#00e4ee" stroke-width="1.1"/><rect x="58" y="779.9" width="4.6" height="1.2" fill="#00e4ee"/>
<rect x="82" y="779.9" width="7" height="1.3" fill="#00e4ee"/>
<circle cx="110.4" cy="780.5" r="4" fill="none" stroke="#00e4ee" stroke-width="1.1"/><rect x="108" y="779.9" width="4.8" height="1.2" fill="#00e4ee"/><rect x="109.8" y="778.1" width="1.2" height="4.8" fill="#00e4ee"/>
<rect x="131.7" y="779.9" width="7.4" height="1.3" fill="#00e4ee"/><rect x="134.8" y="776.8" width="1.3" height="7.4" fill="#00e4ee"/>
<circle cx="60.3" cy="793.2" r="4" fill="none" stroke="#f0ec00" stroke-width="1.1"/><rect x="58" y="792.6" width="4.6" height="1.2" fill="#f0ec00"/>
<rect x="82" y="792.6" width="7" height="1.3" fill="#f0ec00"/>
<circle cx="110.4" cy="793.2" r="4" fill="none" stroke="#f0ec00" stroke-width="1.1"/><rect x="108" y="792.6" width="4.8" height="1.2" fill="#f0ec00"/><rect x="109.8" y="790.8000000000001" width="1.2" height="4.8" fill="#f0ec00"/>
<rect x="131.7" y="792.6" width="7.4" height="1.3" fill="#f0ec00"/><rect x="134.8" y="789.5" width="1.3" height="7.4" fill="#f0ec00"/>
<text x="153.0" y="783.7" font-size="8.8" fill="#ecd400" textLength="16.7" lengthAdjust="spacingAndGlyphs">15+</text>
<text x="187.8" y="783.7" font-size="8.8" fill="#eeb000" textLength="17.0" lengthAdjust="spacingAndGlyphs">30+</text>
<text x="222.8" y="783.7" font-size="8.8" fill="#e8a000" textLength="17.0" lengthAdjust="spacingAndGlyphs">45+</text>
<text x="153.0" y="796.6" font-size="8.8" fill="#e07400" textLength="16.7" lengthAdjust="spacingAndGlyphs">60+</text>
<text x="187.8" y="796.6" font-size="8.8" fill="#d85410" textLength="17.0" lengthAdjust="spacingAndGlyphs">75+</text>
<text x="222.8" y="796.6" font-size="8.8" fill="#e83410" textLength="17.0" lengthAdjust="spacingAndGlyphs">90+</text>
<rect x="685" y="792" width="121" height="14" fill="#000"/>
<text x="688.5" y="802.4" font-size="9.8" fill="#e8e8e8" textLength="113.8" lengthAdjust="spacingAndGlyphs">©2005 Astrogenic Systems</text>
<rect x="812.5" y="8.5" width="319" height="319" rx="4" ry="4" fill="none" stroke="#cfcfcf" stroke-width="1"/>
<rect x="812.5" y="333.5" width="319" height="114" rx="4" ry="4" fill="none" stroke="#cfcfcf" stroke-width="1"/>
<rect x="812.5" y="453.5" width="319" height="349" rx="4" ry="4" fill="none" stroke="#cfcfcf" stroke-width="1"/>
<rect x="819.5" y="16.5" width="57" height="17" fill="#5c0000" stroke="#d8d8d8"/>
<text x="823.6" y="30" font-size="13" fill="#e0dccf" font-weight="bold" textLength="49.3" lengthAdjust="spacingAndGlyphs">STRIKE</text>
<rect x="883.5" y="16.5" width="57" height="17" fill="#333333" stroke="#bdbdbd"/>
<text x="890.1" y="30" font-size="13" fill="#cdd0c8" font-weight="bold" textLength="44.3" lengthAdjust="spacingAndGlyphs">NOISE</text>
<rect x="994.5" y="16.5" width="127" height="17" fill="#333333" stroke="#c8c8c8"/>
<text x="998.1" y="30.5" font-size="14" fill="#ffffff" font-weight="bold" textLength="54.1" lengthAdjust="spacingAndGlyphs">Bng 59°</text>
<text x="1075.0" y="30.5" font-size="14" fill="#00e000" font-weight="bold" textLength="43.5" lengthAdjust="spacingAndGlyphs">341mi</text>
<rect x="821.5" y="64.5" width="81" height="15" fill="#595959" stroke="#d0d0d0"/>
<text x="828.6" y="76.5" font-size="12" fill="#f0f0f0" font-weight="normal" textLength="66.8" lengthAdjust="spacingAndGlyphs">Strikes/min</text>
<rect x="931.5" y="64.5" width="81" height="15" fill="#595959" stroke="#d0d0d0"/>
<text x="942.7" y="76.5" font-size="12" fill="#f0f0f0" font-weight="normal" textLength="58.8" lengthAdjust="spacingAndGlyphs">Close/min</text>
<rect x="1041.5" y="64.5" width="81" height="15" fill="#595959" stroke="#d0d0d0"/>
<text x="1049.9" y="76.5" font-size="12" fill="#f0f0f0" font-weight="normal" textLength="63.4" lengthAdjust="spacingAndGlyphs">Noises/min</text>
<text x="883.7" y="111.5" font-size="28" fill="#ffffff" font-weight="bold" textLength="19.0" lengthAdjust="spacingAndGlyphs">0</text>
<text x="993.7" y="111.5" font-size="28" fill="#ffffff" font-weight="bold" textLength="19.0" lengthAdjust="spacingAndGlyphs">0</text>
<text x="1103.7" y="111.5" font-size="28" fill="#c8c8c8" font-weight="bold" textLength="19.0" lengthAdjust="spacingAndGlyphs">0</text>
<text x="825.3" y="142.5" font-size="13" fill="#f0f0f0" font-weight="normal" textLength="78.1" lengthAdjust="spacingAndGlyphs">Total Strikes</text>
<text x="943.9" y="142.5" font-size="13" fill="#f0f0f0" font-weight="normal" textLength="69.4" lengthAdjust="spacingAndGlyphs">Total Close</text>
<text x="1046.4" y="142.5" font-size="13" fill="#d0d0d0" font-weight="normal" textLength="76.8" lengthAdjust="spacingAndGlyphs">Total Noises</text>
<text x="878.8" y="160.5" font-size="13" fill="#f0f0f0" font-weight="normal" textLength="24.6" lengthAdjust="spacingAndGlyphs">670</text>
<text x="1004.8" y="160.5" font-size="13" fill="#f0f0f0" font-weight="normal" textLength="8.5" lengthAdjust="spacingAndGlyphs">0</text>
<text x="1106.7" y="160.5" font-size="13" fill="#f0f0f0" font-weight="normal" textLength="16.5" lengthAdjust="spacingAndGlyphs">71</text>
<text x="820.4" y="214.5" font-size="13" fill="#c8c8c8" font-weight="normal" textLength="165.3" lengthAdjust="spacingAndGlyphs">Lightning type distribution</text>
<line x1="821" y1="217.5" x2="1124" y2="217.5" stroke="#909090"/>
<text x="820.3" y="236.5" font-size="13" fill="#ffffff" font-weight="bold" textLength="85.9" lengthAdjust="spacingAndGlyphs">Cloud-ground</text>
<rect x="913" y="231.5" width="7" height="1.4" fill="#d0d0d0"/><rect x="915.8" y="228.5" width="1.4" height="7" fill="#d0d0d0"/>
<rect x="925.5" y="227.5" width="50" height="10" rx="2" fill="#000" stroke="#8a8a8a"/>
<rect x="926" y="228" width="7" height="9" fill="#ff0000"/>
<text x="978.9" y="236.5" font-size="13" fill="#ffffff" font-weight="bold" textLength="30.3" lengthAdjust="spacingAndGlyphs">14%</text>
<rect x="1016" y="231.5" width="6.5" height="1.6" fill="#bdbdbd"/>
<rect x="1028.5" y="227.5" width="50" height="10" rx="2" fill="#000" stroke="#8a8a8a"/>
<rect x="1029" y="228" width="8" height="9" fill="#99ccff"/>
<text x="1082.1" y="236.5" font-size="13" fill="#ffffff" font-weight="bold" textLength="30.0" lengthAdjust="spacingAndGlyphs">16%</text>
<text x="820.3" y="260.8" font-size="13" fill="#c8c8c8" font-weight="bold" textLength="39.5" lengthAdjust="spacingAndGlyphs">Count</text>
<text x="924.9" y="260.8" font-size="13" fill="#ffffff" font-weight="bold" textLength="15.8" lengthAdjust="spacingAndGlyphs">91</text>
<text x="1028.1" y="260.8" font-size="13" fill="#ffffff" font-weight="bold" textLength="24.1" lengthAdjust="spacingAndGlyphs">105</text>
<text x="820.3" y="291" font-size="13" fill="#ffffff" font-weight="bold" textLength="64.8" lengthAdjust="spacingAndGlyphs">Intracloud</text>
<rect x="913" y="286" width="7" height="1.4" fill="#d0d0d0"/><rect x="915.8" y="283" width="1.4" height="7" fill="#d0d0d0"/>
<rect x="925.5" y="281.5" width="50" height="10" rx="2" fill="#000" stroke="#8a8a8a"/>
<rect x="926" y="282" width="3.5" height="9" fill="#ff66b4"/>
<text x="978.9" y="291" font-size="13" fill="#ffffff" font-weight="bold" textLength="22.3" lengthAdjust="spacingAndGlyphs">9%</text>
<rect x="1016" y="286" width="6.5" height="1.6" fill="#bdbdbd"/>
<rect x="1028.5" y="281.5" width="50" height="10" rx="2" fill="#000" stroke="#8a8a8a"/>
<rect x="1029" y="282" width="31" height="9" fill="#00ff00"/>
<text x="1082.1" y="291" font-size="13" fill="#ffffff" font-weight="bold" textLength="30.0" lengthAdjust="spacingAndGlyphs">62%</text>
<text x="820.3" y="314.7" font-size="13" fill="#c8c8c8" font-weight="bold" textLength="39.5" lengthAdjust="spacingAndGlyphs">Count</text>
<text x="924.9" y="314.7" font-size="13" fill="#ffffff" font-weight="bold" textLength="15.8" lengthAdjust="spacingAndGlyphs">59</text>
<text x="1028.1" y="314.7" font-size="13" fill="#ffffff" font-weight="bold" textLength="24.1" lengthAdjust="spacingAndGlyphs">415</text>
<text x="821.8" y="352.7" font-size="16" fill="#00e400" font-weight="bold" textLength="223.9" lengthAdjust="spacingAndGlyphs">10/17/2025 10:19:16 AM</text>
<line x1="821" y1="358.5" x2="1123" y2="358.5" stroke="#909090"/>
<text x="820.3" y="387.8" font-size="13" fill="#f4f4f4" font-weight="normal" textLength="50.1" lengthAdjust="spacingAndGlyphs">Squelch</text>
<text x="909.0" y="387.8" font-size="13" fill="#f4f4f4" font-weight="normal" textLength="8.0" lengthAdjust="spacingAndGlyphs">0</text>
<text x="980.5" y="387.8" font-size="13" fill="#f4f4f4" font-weight="normal" textLength="44.9" lengthAdjust="spacingAndGlyphs">Upload</text>
<text x="1060.9" y="387.8" font-size="13" fill="#c8c8c8" font-weight="normal" textLength="54.5" lengthAdjust="spacingAndGlyphs">Disabled</text>
<text x="820.3" y="407.5" font-size="13" fill="#f4f4f4" font-weight="normal" textLength="74.0" lengthAdjust="spacingAndGlyphs">Persistence</text>
<text x="909.0" y="407.5" font-size="13" fill="#f4f4f4" font-weight="normal" textLength="42.2" lengthAdjust="spacingAndGlyphs">90 min</text>
<text x="980.5" y="407.5" font-size="13" fill="#f4f4f4" font-weight="normal" textLength="51.7" lengthAdjust="spacingAndGlyphs">Capture</text>
<text x="1060.9" y="407.5" font-size="13" fill="#00e000" font-weight="normal" textLength="37.5" lengthAdjust="spacingAndGlyphs">Active</text>
<text x="820.3" y="427.5" font-size="13" fill="#f4f4f4" font-weight="normal" textLength="40.9" lengthAdjust="spacingAndGlyphs">Range</text>
<text x="909.0" y="427.5" font-size="13" fill="#f4f4f4" font-weight="normal" textLength="42.2" lengthAdjust="spacingAndGlyphs">313 mi</text>
<text x="980.5" y="427.5" font-size="13" fill="#f4f4f4" font-weight="normal" textLength="54.2" lengthAdjust="spacingAndGlyphs">Receiver</text>
<text x="1060.9" y="427.5" font-size="13" fill="#00e000" font-weight="normal" textLength="51.4" lengthAdjust="spacingAndGlyphs">Enabled</text>
<text x="820.3" y="474.7" font-size="13" fill="#c8c8c8" font-weight="normal" textLength="45.1" lengthAdjust="spacingAndGlyphs">Uptime</text>
<text x="909.0" y="474.7" font-size="13" fill="#f4f4f4" font-weight="normal" textLength="37.0" lengthAdjust="spacingAndGlyphs">05:49</text>
<text x="980.5" y="474.7" font-size="13" fill="#c8c8c8" font-weight="normal" textLength="63.0" lengthAdjust="spacingAndGlyphs">Peak time</text>
<text x="1060.9" y="474.7" font-size="13" fill="#c8c8c8" font-weight="normal" textLength="24.9" lengthAdjust="spacingAndGlyphs">Plot</text>
<text x="820.3" y="497.5" font-size="13" fill="#c8c8c8" font-weight="normal" textLength="62.0" lengthAdjust="spacingAndGlyphs">Peak rate</text>
<text x="909.0" y="497.5" font-size="13" fill="#f4f4f4" font-weight="normal" textLength="43.3" lengthAdjust="spacingAndGlyphs">16/min</text>
<text x="980.5" y="497.5" font-size="13" fill="#f4f4f4" font-weight="normal" textLength="51.7" lengthAdjust="spacingAndGlyphs">4:48 AM</text>
<text x="1060.9" y="497.5" font-size="13" fill="#f4f4f4" font-weight="normal" textLength="36.6" lengthAdjust="spacingAndGlyphs">Strike</text>
<text x="822.5" y="527.8" font-size="13" fill="#c8c8c8" font-weight="normal" textLength="76.7" lengthAdjust="spacingAndGlyphs">Trend graph</text>
<text x="908.0" y="527.8" font-size="13" fill="#f4f4f4" font-weight="normal" textLength="42.2" lengthAdjust="spacingAndGlyphs">60 min</text>
<line x1="1088.5" y1="542" x2="1088.5" y2="779" stroke="#c8c8c8"/>
<line x1="822" y1="777.5" x2="1089" y2="777.5" stroke="#c8c8c8"/>
<line x1="1086" y1="738.5" x2="1090" y2="738.5" stroke="#c8c8c8"/>
<line x1="1084" y1="698.5" x2="1090" y2="698.5" stroke="#c8c8c8"/>
<text x="1091.6" y="702.6" font-size="12" fill="#d0d0d0" font-weight="normal" textLength="14.4" lengthAdjust="spacingAndGlyphs">10</text>
<line x1="1086" y1="659.5" x2="1090" y2="659.5" stroke="#c8c8c8"/>
<line x1="1084" y1="620.5" x2="1090" y2="620.5" stroke="#c8c8c8"/>
<text x="1091.6" y="624.6" font-size="12" fill="#d0d0d0" font-weight="normal" textLength="14.4" lengthAdjust="spacingAndGlyphs">20</text>
<line x1="1086" y1="581.5" x2="1090" y2="581.5" stroke="#c8c8c8"/>
<line x1="1084" y1="542.5" x2="1090" y2="542.5" stroke="#c8c8c8"/>
<text x="1091.6" y="546.6" font-size="12" fill="#d0d0d0" font-weight="normal" textLength="14.4" lengthAdjust="spacingAndGlyphs">30</text>
<line x1="822.5" y1="775" x2="822.5" y2="780" stroke="#c8c8c8"/>
<text x="819.5" y="792.7" font-size="12" fill="#d0d0d0" font-weight="normal" textLength="15.0" lengthAdjust="spacingAndGlyphs">60</text>
<line x1="866.8" y1="775" x2="866.8" y2="780" stroke="#c8c8c8"/>
<text x="863.8" y="792.7" font-size="12" fill="#d0d0d0" font-weight="normal" textLength="15.0" lengthAdjust="spacingAndGlyphs">50</text>
<line x1="911.2" y1="775" x2="911.2" y2="780" stroke="#c8c8c8"/>
<text x="908.2" y="792.7" font-size="12" fill="#d0d0d0" font-weight="normal" textLength="15.0" lengthAdjust="spacingAndGlyphs">40</text>
<line x1="955.5" y1="775" x2="955.5" y2="780" stroke="#c8c8c8"/>
<text x="952.5" y="792.7" font-size="12" fill="#d0d0d0" font-weight="normal" textLength="15.0" lengthAdjust="spacingAndGlyphs">30</text>
<line x1="999.8" y1="775" x2="999.8" y2="780" stroke="#c8c8c8"/>
<text x="996.8" y="792.7" font-size="12" fill="#d0d0d0" font-weight="normal" textLength="15.0" lengthAdjust="spacingAndGlyphs">20</text>
<line x1="1044.2" y1="775" x2="1044.2" y2="780" stroke="#c8c8c8"/>
<text x="1041.2" y="792.7" font-size="12" fill="#d0d0d0" font-weight="normal" textLength="15.0" lengthAdjust="spacingAndGlyphs">10</text>
<line x1="1088.5" y1="775" x2="1088.5" y2="780" stroke="#c8c8c8"/>
<text x="1086.8" y="792.7" font-size="12" fill="#d0d0d0" font-weight="normal" textLength="7.4" lengthAdjust="spacingAndGlyphs">0</text>
<text x="1099.8" y="792.7" font-size="12" fill="#d0d0d0" font-weight="normal" textLength="19.2" lengthAdjust="spacingAndGlyphs">min</text>
<path d="M822.5,777 L822.5,753.2 L823,762 L824,757 L825.5,756 L826,753.2 L826.5,757.5 L827,761.3 L828.5,761.3 L829.3,766 L829.3,769.5 L834.6,769.5 L835,765 L835.7,761.3 L837.2,761.3 L838,766 L838.8,769.5 L841.2,769.5 L842.5,765 L843.3,761.3 L843.8,765 L844.4,767 L845.4,764 L846.5,761.3 L847.3,766 L848.6,769.5 L849.6,774 L850.4,776.6 L851.2,771 L852.3,769.5 L855.4,769.5 L856.5,774 L856.9,777 L867,777 L868,771 L869.1,763.5 L870.2,761.3 L871.2,761.8 L872.5,767.7 L873.6,769.5 L877.3,769.5 L878.9,773.5 L879.6,777 L880.2,769.8 L883.3,769.5 L884.7,773.5 L885.4,777 L886,772.4 L886.8,769.5 L889.4,769.5 L890.7,773.5 L891.5,777 L900,777 L901.3,771.4 L902.8,769.5 L905.2,769.5 L906.3,774 L906.8,777 L907.8,771.4 L908.9,769.5 L910,765 L910.7,758.2 L911.3,753.2 L911.8,758.2 L912.6,760.3 L913.6,758.2 L914.4,753.2 L915,761.3 L915.8,769.5 L917.3,769.8 L918.4,777 L923.1,777 L924.2,769.8 L924.7,769.5 L933,769.4 L933.4,774.5 L933.7,777 L1008,777 L1009.6,771 L1010.4,769.5 L1013.5,769.5 L1014.3,774.3 L1014.7,777 L1028.2,777 L1029.7,771 L1030.5,769.5 L1033.7,769.5 L1034.5,774.3 L1034.9,777 L1058.2,777 L1059.8,771 L1060.6,769.5 L1063.4,769.5 L1064.1,774.3 L1064.5,777 L1076,777 L1077.6,771 L1078.4,769.5 L1084.3,769.5 L1084.7,764.8 L1085.5,761.6 L1087.5,761.6 L1087.9,765.6 L1088,777" fill="none" stroke="#ffffff" stroke-width="1.2" stroke-linejoin="miter"/><path d="M838,777 L839.5,770 L842.5,770 L844,777 M909.2,776.6 L911,769.5 M913.6,769.5 L915.5,776.6" fill="none" stroke="#ff66c0" stroke-width="1.2"/><path d="M838.5,770 L840,777 L842,770 L843,777 M910.7,766 L911.5,761.3 L912.6,769.2 L914.2,762.9 L913,769 M929,770 L930,777" fill="none" stroke="#00ff00" stroke-width="1.3"/><path d="M928,777 L929.5,770 L930,770" fill="none" stroke="#ff0000" stroke-width="1.2"/>
</svg></body></html>
